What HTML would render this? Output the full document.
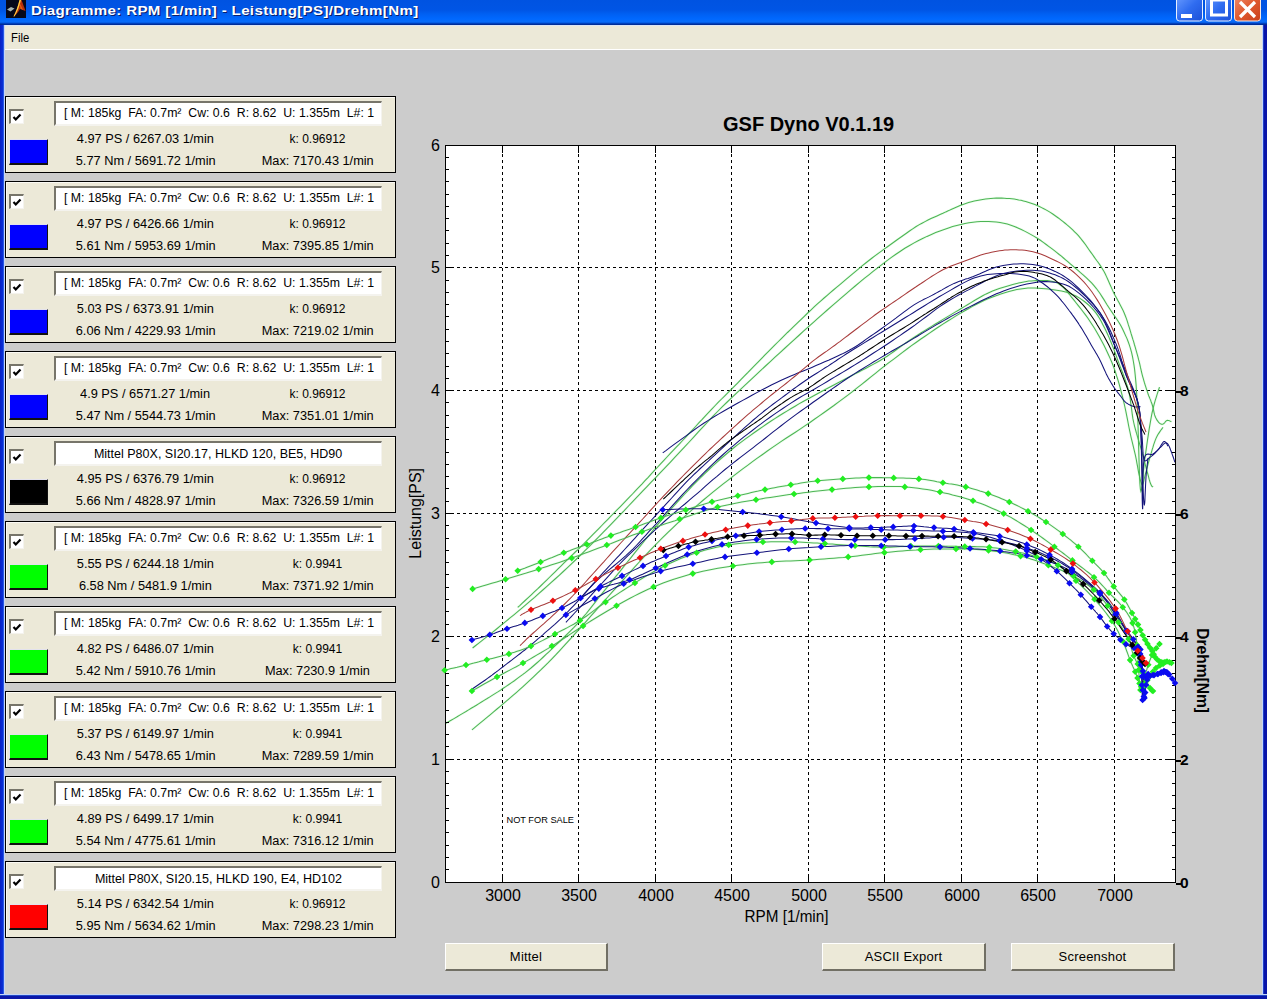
<!DOCTYPE html><html><head><meta charset="utf-8"><title>GSF Dyno</title><style>

*{margin:0;padding:0;box-sizing:border-box}
html,body{width:1267px;height:999px;overflow:hidden;background:#CCCCCC;font-family:"Liberation Sans",sans-serif;}
.a{position:absolute}
#tb{left:0;top:0;width:1267px;height:25px;background:linear-gradient(#0053E1 0px,#0055E5 10px,#0060F2 14px,#0068FF 19px,#0A6CF6 22px,#0050D8 23px,#00309E 24px,#002a90 25px)}
#tt{left:31px;top:2px;color:#fff;font-weight:bold;font-size:13px;letter-spacing:0.3px;transform:scaleX(1.16);transform-origin:0 50%;line-height:18px;white-space:nowrap;text-shadow:1px 1px 0 #0A1E6E}
#mb{left:4px;top:25px;width:1258px;height:25px;background:#ECE9D8;border-top:1px solid #DCE6F6;border-bottom:1px solid #FFFFFF}
#mf{left:11px;top:31px;font-size:12px;line-height:14px;color:#000;transform:scaleX(0.94);transform-origin:0 50%}
#bl{left:0;top:25px;width:5px;height:974px;background:linear-gradient(90deg,#0820C4 0,#0830D8 3px,#2A58E4 3px,#2A58E4 4px,#C4D4F8 4px)}
#br{left:1262px;top:25px;width:5px;height:974px;background:linear-gradient(90deg,#C4D4F8 0,#C4D4F8 1px,#2040C8 1px,#2040C8 2px,#0814A8 2px)}
#bb{left:0;top:994px;width:1267px;height:5px;background:linear-gradient(#C4D4F8 0,#C4D4F8 1px,#2048C8 1px,#2048C8 2px,#0A16A8 2px)}
.pn{left:5px;width:391px;height:77px;background:#ECE9D8;border:1px solid #000}
.pn .in{position:absolute;left:0;top:0;right:0;bottom:0;border-left:1px solid #FAF9F4;border-top:1px solid #FAF9F4}
.cb{position:absolute;left:3px;top:12px;width:15px;height:15px;background:#fff;border-top:2px solid #77756A;border-left:2px solid #77756A;border-right:1px solid #F4F3EE;border-bottom:1px solid #F4F3EE}
.sw{position:absolute;left:3px;top:42px;width:39px;height:26px;border-top:1px solid #E3E2EE;border-left:1px solid #E3E2EE;border-right:1px solid #111;border-bottom:2px solid #111}
.fd{position:absolute;left:48px;top:4px;width:328px;height:25px;background:#fff;border-top:2px solid #77756A;border-left:2px solid #77756A;border-right:1px solid #F4F3EE;border-bottom:2px solid #F4F3EE;overflow:hidden;white-space:nowrap;font-size:12px;line-height:14px;color:#000}
.fd span{position:absolute;top:4px}
.t{position:absolute;font-size:12px;line-height:14px;white-space:nowrap;color:#000}
.btn{letter-spacing:0.2px;background:#ECE9D8;border-top:1px solid #FFFFFF;border-left:1px solid #FFFFFF;border-right:2px solid #716F64;border-bottom:2px solid #716F64;font-size:13px;line-height:14px;text-align:center;color:#000}

</style></head><body>
<div id="tb" class="a"></div>
<svg class="a" style="left:6px;top:0px" width="20" height="18" viewBox="0 0 20 18"><rect x="0" y="0" width="20" height="18" fill="#06081a"/><path d="M1 9.5 L5 7 L8.5 8.5 L4.5 11.5 Z" fill="#a8b4b0"/><path d="M7.5 16.5 C10 12 12 6 13.5 0 L15.5 0 C17 4 18.5 8 19.5 11 L14 9 C12 12.5 10 15 7.5 16.5 Z" fill="#b8300c"/><path d="M7.5 16.5 C10 12 12 6 13.5 0 L15 0 C13.5 6 11.5 12 8.5 16.5 Z" fill="#ffd040"/><path d="M13.5 3 C15 5 16 8 17 10 L14.5 8.5 Z" fill="#e86010"/></svg>
<div id="tt" class="a">Diagramme: RPM [1/min] - Leistung[PS]/Drehm[Nm]</div>
<svg class="a" style="left:1176px;top:0" width="86" height="23" viewBox="0 0 86 23">
<defs><linearGradient id="gb" x1="0" y1="0" x2="1" y2="1"><stop offset="0" stop-color="#6A9CFF"/><stop offset="0.5" stop-color="#2F6CF0"/><stop offset="1" stop-color="#1C50D8"/></linearGradient>
<linearGradient id="gr" x1="0" y1="0" x2="1" y2="1"><stop offset="0" stop-color="#F08A6A"/><stop offset="0.5" stop-color="#E05A30"/><stop offset="1" stop-color="#C8401C"/></linearGradient></defs>
<rect x="0.5" y="-4" width="26" height="25" rx="3" fill="url(#gb)" stroke="#E8F0FF"/>
<rect x="5" y="14" width="11" height="4" fill="#fff"/>
<rect x="29.5" y="-4" width="26" height="25" rx="3" fill="url(#gb)" stroke="#E8F0FF"/>
<rect x="35.5" y="0" width="15" height="15" fill="none" stroke="#fff" stroke-width="3"/>
<rect x="58.5" y="-4" width="26" height="25" rx="3" fill="url(#gr)" stroke="#F8E8E0"/>
<path d="M64 2 L79 17 M79 2 L64 17" stroke="#fff" stroke-width="3.2"/>
</svg>
<div id="mb" class="a"></div>
<div id="mf" class="a">File</div>
<div id="bl" class="a"></div><div id="br" class="a"></div><div id="bb" class="a"></div>
<div class="a pn" style="top:96px"><div class="in"></div><div class="cb"><svg width="13" height="13" style="position:absolute;left:0;top:0"><path d="M2.5 6 L4.8 8.5 L9.5 3.5" fill="none" stroke="#000" stroke-width="2.2"/></svg></div><div class="sw" style="background:#0000FF"></div><div class="fd"><span style="left:8px;top:3px;transform:scaleX(1.024);transform-origin:0 50%">[ M: 185kg&nbsp; FA: 0.7m²&nbsp; Cw: 0.6&nbsp; R: 8.62&nbsp; U: 1.355m&nbsp; L#: 1</span></div><div class="t" style="left:-10.5px;width:300px;top:35px;text-align:center"><span style="display:inline-block;transform:scaleX(1.065);transform-origin:50% 50%">4.97 PS / 6267.03 1/min</span></div><div class="t" style="left:161.5px;width:300px;top:35px;text-align:center"><span style="display:inline-block;transform:scaleX(1.0);transform-origin:50% 50%">k: 0.96912</span></div><div class="t" style="left:-10.5px;width:300px;top:57px;text-align:center"><span style="display:inline-block;transform:scaleX(1.065);transform-origin:50% 50%">5.77 Nm / 5691.72 1/min</span></div><div class="t" style="left:161.5px;width:300px;top:57px;text-align:center"><span style="display:inline-block;transform:scaleX(1.063);transform-origin:50% 50%">Max: 7170.43 1/min</span></div></div>
<div class="a pn" style="top:181px"><div class="in"></div><div class="cb"><svg width="13" height="13" style="position:absolute;left:0;top:0"><path d="M2.5 6 L4.8 8.5 L9.5 3.5" fill="none" stroke="#000" stroke-width="2.2"/></svg></div><div class="sw" style="background:#0000FF"></div><div class="fd"><span style="left:8px;top:3px;transform:scaleX(1.024);transform-origin:0 50%">[ M: 185kg&nbsp; FA: 0.7m²&nbsp; Cw: 0.6&nbsp; R: 8.62&nbsp; U: 1.355m&nbsp; L#: 1</span></div><div class="t" style="left:-10.5px;width:300px;top:35px;text-align:center"><span style="display:inline-block;transform:scaleX(1.065);transform-origin:50% 50%">4.97 PS / 6426.66 1/min</span></div><div class="t" style="left:161.5px;width:300px;top:35px;text-align:center"><span style="display:inline-block;transform:scaleX(1.0);transform-origin:50% 50%">k: 0.96912</span></div><div class="t" style="left:-10.5px;width:300px;top:57px;text-align:center"><span style="display:inline-block;transform:scaleX(1.065);transform-origin:50% 50%">5.61 Nm / 5953.69 1/min</span></div><div class="t" style="left:161.5px;width:300px;top:57px;text-align:center"><span style="display:inline-block;transform:scaleX(1.063);transform-origin:50% 50%">Max: 7395.85 1/min</span></div></div>
<div class="a pn" style="top:266px"><div class="in"></div><div class="cb"><svg width="13" height="13" style="position:absolute;left:0;top:0"><path d="M2.5 6 L4.8 8.5 L9.5 3.5" fill="none" stroke="#000" stroke-width="2.2"/></svg></div><div class="sw" style="background:#0000FF"></div><div class="fd"><span style="left:8px;top:3px;transform:scaleX(1.024);transform-origin:0 50%">[ M: 185kg&nbsp; FA: 0.7m²&nbsp; Cw: 0.6&nbsp; R: 8.62&nbsp; U: 1.355m&nbsp; L#: 1</span></div><div class="t" style="left:-10.5px;width:300px;top:35px;text-align:center"><span style="display:inline-block;transform:scaleX(1.065);transform-origin:50% 50%">5.03 PS / 6373.91 1/min</span></div><div class="t" style="left:161.5px;width:300px;top:35px;text-align:center"><span style="display:inline-block;transform:scaleX(1.0);transform-origin:50% 50%">k: 0.96912</span></div><div class="t" style="left:-10.5px;width:300px;top:57px;text-align:center"><span style="display:inline-block;transform:scaleX(1.065);transform-origin:50% 50%">6.06 Nm / 4229.93 1/min</span></div><div class="t" style="left:161.5px;width:300px;top:57px;text-align:center"><span style="display:inline-block;transform:scaleX(1.063);transform-origin:50% 50%">Max: 7219.02 1/min</span></div></div>
<div class="a pn" style="top:351px"><div class="in"></div><div class="cb"><svg width="13" height="13" style="position:absolute;left:0;top:0"><path d="M2.5 6 L4.8 8.5 L9.5 3.5" fill="none" stroke="#000" stroke-width="2.2"/></svg></div><div class="sw" style="background:#0000FF"></div><div class="fd"><span style="left:8px;top:3px;transform:scaleX(1.024);transform-origin:0 50%">[ M: 185kg&nbsp; FA: 0.7m²&nbsp; Cw: 0.6&nbsp; R: 8.62&nbsp; U: 1.355m&nbsp; L#: 1</span></div><div class="t" style="left:-10.5px;width:300px;top:35px;text-align:center"><span style="display:inline-block;transform:scaleX(1.065);transform-origin:50% 50%">4.9 PS / 6571.27 1/min</span></div><div class="t" style="left:161.5px;width:300px;top:35px;text-align:center"><span style="display:inline-block;transform:scaleX(1.0);transform-origin:50% 50%">k: 0.96912</span></div><div class="t" style="left:-10.5px;width:300px;top:57px;text-align:center"><span style="display:inline-block;transform:scaleX(1.065);transform-origin:50% 50%">5.47 Nm / 5544.73 1/min</span></div><div class="t" style="left:161.5px;width:300px;top:57px;text-align:center"><span style="display:inline-block;transform:scaleX(1.063);transform-origin:50% 50%">Max: 7351.01 1/min</span></div></div>
<div class="a pn" style="top:436px"><div class="in"></div><div class="cb"><svg width="13" height="13" style="position:absolute;left:0;top:0"><path d="M2.5 6 L4.8 8.5 L9.5 3.5" fill="none" stroke="#000" stroke-width="2.2"/></svg></div><div class="sw" style="background:#000000"></div><div class="fd"><div style="position:absolute;left:0;top:4px;width:324px;text-align:center"><span style="position:static;display:inline-block;transform:scaleX(1.043)">Mittel P80X, SI20.17, HLKD 120, BE5, HD90</span></div></div><div class="t" style="left:-10.5px;width:300px;top:35px;text-align:center"><span style="display:inline-block;transform:scaleX(1.065);transform-origin:50% 50%">4.95 PS / 6376.79 1/min</span></div><div class="t" style="left:161.5px;width:300px;top:35px;text-align:center"><span style="display:inline-block;transform:scaleX(1.0);transform-origin:50% 50%">k: 0.96912</span></div><div class="t" style="left:-10.5px;width:300px;top:57px;text-align:center"><span style="display:inline-block;transform:scaleX(1.065);transform-origin:50% 50%">5.66 Nm / 4828.97 1/min</span></div><div class="t" style="left:161.5px;width:300px;top:57px;text-align:center"><span style="display:inline-block;transform:scaleX(1.063);transform-origin:50% 50%">Max: 7326.59 1/min</span></div></div>
<div class="a pn" style="top:521px"><div class="in"></div><div class="cb"><svg width="13" height="13" style="position:absolute;left:0;top:0"><path d="M2.5 6 L4.8 8.5 L9.5 3.5" fill="none" stroke="#000" stroke-width="2.2"/></svg></div><div class="sw" style="background:#00FF00"></div><div class="fd"><span style="left:8px;top:3px;transform:scaleX(1.024);transform-origin:0 50%">[ M: 185kg&nbsp; FA: 0.7m²&nbsp; Cw: 0.6&nbsp; R: 8.62&nbsp; U: 1.355m&nbsp; L#: 1</span></div><div class="t" style="left:-10.5px;width:300px;top:35px;text-align:center"><span style="display:inline-block;transform:scaleX(1.065);transform-origin:50% 50%">5.55 PS / 6244.18 1/min</span></div><div class="t" style="left:161.5px;width:300px;top:35px;text-align:center"><span style="display:inline-block;transform:scaleX(1.0);transform-origin:50% 50%">k: 0.9941</span></div><div class="t" style="left:-10.5px;width:300px;top:57px;text-align:center"><span style="display:inline-block;transform:scaleX(1.065);transform-origin:50% 50%">6.58 Nm / 5481.9 1/min</span></div><div class="t" style="left:161.5px;width:300px;top:57px;text-align:center"><span style="display:inline-block;transform:scaleX(1.063);transform-origin:50% 50%">Max: 7371.92 1/min</span></div></div>
<div class="a pn" style="top:606px"><div class="in"></div><div class="cb"><svg width="13" height="13" style="position:absolute;left:0;top:0"><path d="M2.5 6 L4.8 8.5 L9.5 3.5" fill="none" stroke="#000" stroke-width="2.2"/></svg></div><div class="sw" style="background:#00FF00"></div><div class="fd"><span style="left:8px;top:3px;transform:scaleX(1.024);transform-origin:0 50%">[ M: 185kg&nbsp; FA: 0.7m²&nbsp; Cw: 0.6&nbsp; R: 8.62&nbsp; U: 1.355m&nbsp; L#: 1</span></div><div class="t" style="left:-10.5px;width:300px;top:35px;text-align:center"><span style="display:inline-block;transform:scaleX(1.065);transform-origin:50% 50%">4.82 PS / 6486.07 1/min</span></div><div class="t" style="left:161.5px;width:300px;top:35px;text-align:center"><span style="display:inline-block;transform:scaleX(1.0);transform-origin:50% 50%">k: 0.9941</span></div><div class="t" style="left:-10.5px;width:300px;top:57px;text-align:center"><span style="display:inline-block;transform:scaleX(1.065);transform-origin:50% 50%">5.42 Nm / 5910.76 1/min</span></div><div class="t" style="left:161.5px;width:300px;top:57px;text-align:center"><span style="display:inline-block;transform:scaleX(1.063);transform-origin:50% 50%">Max: 7230.9 1/min</span></div></div>
<div class="a pn" style="top:691px"><div class="in"></div><div class="cb"><svg width="13" height="13" style="position:absolute;left:0;top:0"><path d="M2.5 6 L4.8 8.5 L9.5 3.5" fill="none" stroke="#000" stroke-width="2.2"/></svg></div><div class="sw" style="background:#00FF00"></div><div class="fd"><span style="left:8px;top:3px;transform:scaleX(1.024);transform-origin:0 50%">[ M: 185kg&nbsp; FA: 0.7m²&nbsp; Cw: 0.6&nbsp; R: 8.62&nbsp; U: 1.355m&nbsp; L#: 1</span></div><div class="t" style="left:-10.5px;width:300px;top:35px;text-align:center"><span style="display:inline-block;transform:scaleX(1.065);transform-origin:50% 50%">5.37 PS / 6149.97 1/min</span></div><div class="t" style="left:161.5px;width:300px;top:35px;text-align:center"><span style="display:inline-block;transform:scaleX(1.0);transform-origin:50% 50%">k: 0.9941</span></div><div class="t" style="left:-10.5px;width:300px;top:57px;text-align:center"><span style="display:inline-block;transform:scaleX(1.065);transform-origin:50% 50%">6.43 Nm / 5478.65 1/min</span></div><div class="t" style="left:161.5px;width:300px;top:57px;text-align:center"><span style="display:inline-block;transform:scaleX(1.063);transform-origin:50% 50%">Max: 7289.59 1/min</span></div></div>
<div class="a pn" style="top:776px"><div class="in"></div><div class="cb"><svg width="13" height="13" style="position:absolute;left:0;top:0"><path d="M2.5 6 L4.8 8.5 L9.5 3.5" fill="none" stroke="#000" stroke-width="2.2"/></svg></div><div class="sw" style="background:#00FF00"></div><div class="fd"><span style="left:8px;top:3px;transform:scaleX(1.024);transform-origin:0 50%">[ M: 185kg&nbsp; FA: 0.7m²&nbsp; Cw: 0.6&nbsp; R: 8.62&nbsp; U: 1.355m&nbsp; L#: 1</span></div><div class="t" style="left:-10.5px;width:300px;top:35px;text-align:center"><span style="display:inline-block;transform:scaleX(1.065);transform-origin:50% 50%">4.89 PS / 6499.17 1/min</span></div><div class="t" style="left:161.5px;width:300px;top:35px;text-align:center"><span style="display:inline-block;transform:scaleX(1.0);transform-origin:50% 50%">k: 0.9941</span></div><div class="t" style="left:-10.5px;width:300px;top:57px;text-align:center"><span style="display:inline-block;transform:scaleX(1.065);transform-origin:50% 50%">5.54 Nm / 4775.61 1/min</span></div><div class="t" style="left:161.5px;width:300px;top:57px;text-align:center"><span style="display:inline-block;transform:scaleX(1.063);transform-origin:50% 50%">Max: 7316.12 1/min</span></div></div>
<div class="a pn" style="top:861px"><div class="in"></div><div class="cb"><svg width="13" height="13" style="position:absolute;left:0;top:0"><path d="M2.5 6 L4.8 8.5 L9.5 3.5" fill="none" stroke="#000" stroke-width="2.2"/></svg></div><div class="sw" style="background:#FF0000"></div><div class="fd"><div style="position:absolute;left:0;top:4px;width:324px;text-align:center"><span style="position:static;display:inline-block;transform:scaleX(1.043)">Mittel P80X, SI20.15, HLKD 190, E4, HD102</span></div></div><div class="t" style="left:-10.5px;width:300px;top:35px;text-align:center"><span style="display:inline-block;transform:scaleX(1.065);transform-origin:50% 50%">5.14 PS / 6342.54 1/min</span></div><div class="t" style="left:161.5px;width:300px;top:35px;text-align:center"><span style="display:inline-block;transform:scaleX(1.0);transform-origin:50% 50%">k: 0.96912</span></div><div class="t" style="left:-10.5px;width:300px;top:57px;text-align:center"><span style="display:inline-block;transform:scaleX(1.065);transform-origin:50% 50%">5.95 Nm / 5634.62 1/min</span></div><div class="t" style="left:161.5px;width:300px;top:57px;text-align:center"><span style="display:inline-block;transform:scaleX(1.063);transform-origin:50% 50%">Max: 7298.23 1/min</span></div></div>
<div class="a btn" style="left:445px;top:943px;width:163px;height:28px;padding-top:6px">Mittel</div>
<div class="a btn" style="left:822px;top:943px;width:164px;height:28px;padding-top:6px">ASCII Export</div>
<div class="a btn" style="left:1011px;top:943px;width:164px;height:28px;padding-top:6px">Screenshot</div>
<svg class="a" style="left:0;top:0" width="1267" height="999" viewBox="0 0 1267 999"><rect x="445" y="145" width="731" height="738" fill="#fff"/><path d="M502.5 145 V883 M578.5 145 V883 M655.5 145 V883 M731.5 145 V883 M808.5 145 V883 M884.5 145 V883 M961.5 145 V883 M1037.5 145 V883 M1114.5 145 V883" stroke="#000" stroke-width="1" stroke-dasharray="3 3" stroke-dashoffset="3" fill="none" shape-rendering="crispEdges"/><path d="M445 267.5 H1176 M445 390.5 H1176 M445 513.5 H1176 M445 636.5 H1176 M445 759.5 H1176" stroke="#000" stroke-width="1" stroke-dasharray="3 3" fill="none" shape-rendering="crispEdges"/><svg x="445" y="145" width="731" height="738" viewBox="445 145 731 738" overflow="hidden"><g fill="none" stroke-width="2.6" stroke-opacity="0.08"><polyline points="517.7,607.4 519.5,605.8 521.8,603.6 524.6,601.0 527.7,598.2 531.0,595.1 534.3,591.9 537.6,588.9 540.6,586.0 543.5,583.2 546.4,580.4 549.3,577.5 552.2,574.7 555.1,571.8 558.0,568.9 560.9,566.1 563.8,563.2 566.7,560.4 569.6,557.6 572.4,554.8 575.3,552.0 578.2,549.3 581.1,546.4 584.0,543.6 586.9,540.7 589.9,537.7 592.8,534.7 595.8,531.7 598.8,528.6 601.8,525.5 604.8,522.4 607.9,519.3 610.9,516.2 614.0,513.0 617.0,509.9 620.1,506.8 623.2,503.6 626.3,500.4 629.4,497.2 632.5,494.0 635.6,490.7 638.7,487.4 641.9,484.1 645.0,480.7 648.2,477.3 651.3,473.8 654.5,470.4 657.7,467.0 660.8,463.6 663.9,460.3 667.0,457.0 670.1,453.7 673.2,450.4 676.3,447.1 679.5,443.8 682.6,440.5 685.8,437.1 689.0,433.6 692.3,430.1 695.6,426.5 698.8,422.9 702.2,419.4 705.4,415.8 708.7,412.3 712.0,408.8 715.2,405.5 718.4,402.2 721.6,399.0 724.8,395.8 728.0,392.6 731.3,389.4 734.5,386.1 737.8,382.8 741.1,379.4 744.5,375.9 748.0,372.4 751.4,368.8 754.8,365.3 758.3,361.8 761.7,358.3 765.0,354.9 768.3,351.6 771.5,348.3 774.7,345.2 777.9,342.0 781.1,338.8 784.3,335.7 787.5,332.5 790.8,329.4 794.1,326.1 797.5,322.9 800.9,319.6 804.3,316.3 807.7,313.0 811.1,309.8 814.4,306.7 817.7,303.7 820.9,300.8 824.1,298.0 827.2,295.3 830.3,292.6 833.4,290.0 836.5,287.4 839.6,284.8 842.8,282.1 846.0,279.4 849.3,276.6 852.6,273.8 855.9,271.1 859.2,268.3 862.4,265.7 865.7,263.0 868.9,260.5 872.1,258.0 875.2,255.7 878.3,253.4 881.4,251.1 884.4,248.9 887.5,246.7 890.6,244.5 893.7,242.3 896.8,240.0 900.0,237.7 903.2,235.5 906.4,233.2 909.5,231.0 912.7,228.9 915.8,226.8 918.9,224.9 922.0,223.2 925.0,221.6 928.0,220.0 931.0,218.6 934.0,217.2 937.0,215.9 940.0,214.6 942.9,213.3 945.8,211.9 948.7,210.6 951.6,209.2 954.5,207.9 957.3,206.7 960.1,205.5 963.0,204.4 965.8,203.4 968.6,202.6 971.5,201.8 974.3,201.1 977.1,200.5 979.9,199.9 982.7,199.5 985.5,199.1 988.2,198.7 990.9,198.5 993.6,198.3 996.3,198.1 999.0,198.1 1001.6,198.1 1004.2,198.2 1006.8,198.4 1009.3,198.5 1011.8,198.8 1014.2,199.1 1016.5,199.4 1018.8,199.9 1021.1,200.3 1023.4,200.9 1025.7,201.5 1028.0,202.2 1030.3,202.9 1032.6,203.7 1034.9,204.6 1037.1,205.5 1039.4,206.5 1041.6,207.6 1043.8,208.7 1046.0,209.9 1048.2,211.1 1050.3,212.4 1052.4,213.8 1054.5,215.2 1056.6,216.7 1058.7,218.2 1060.8,219.8 1062.8,221.4 1064.8,223.0 1066.8,224.7 1068.8,226.3 1070.8,228.1 1072.7,229.9 1074.6,231.8 1076.5,233.7 1078.4,235.7 1080.2,237.8 1082.0,240.1 1083.8,242.4 1085.6,244.8 1087.3,247.3 1089.0,249.7 1090.7,252.1 1092.3,254.3 1093.9,256.6 1095.4,258.7 1096.9,260.8 1098.4,262.8 1099.9,264.9 1101.3,267.1 1102.6,269.3 1104.0,271.6 1105.3,274.1 1106.5,276.6 1107.7,279.3 1108.9,282.0 1110.1,284.7 1111.3,287.4 1112.5,290.1 1113.7,292.7 1115.0,295.3 1116.4,297.8 1117.7,300.3 1119.1,302.8 1120.5,305.4 1121.8,307.9 1123.1,310.5 1124.3,313.2 1125.4,316.0 1126.5,318.9 1127.5,321.9 1128.4,324.9 1129.4,327.9 1130.3,330.8 1131.1,333.7 1132.0,336.5 1132.8,339.2 1133.7,341.9 1134.4,344.5 1135.2,347.1 1135.9,349.6 1136.6,352.1 1137.3,354.6 1138.0,357.1 1138.6,359.7 1139.3,362.2 1139.9,364.7 1140.4,367.2 1141.0,369.6 1141.5,372.0 1142.1,374.3 1142.7,376.6 1143.3,378.7 1143.9,380.8 1144.5,382.9 1145.1,384.8 1145.7,386.7 1146.3,388.6 1146.9,390.4 1147.5,392.2 1148.1,394.0 1148.7,395.7 1149.4,397.3 1150.0,398.9 1150.7,400.4 1151.2,402.0 1151.8,403.5 1152.3,405.0 1152.7,406.5 1153.1,408.0 1153.4,409.4 1153.7,410.9 1154.0,412.3 1154.3,413.6 1154.6,414.9 1155.0,416.0 1155.4,417.1 1155.9,418.1 1156.4,419.0 1156.9,419.9 1157.4,420.7 1158.0,421.4 1158.5,422.1 1159.0,422.6 1159.5,423.1 1160.0,423.5 1160.5,423.8 1161.0,424.0 1161.5,424.2 1162.0,424.2 1162.5,424.2 1163.0,424.1 1163.5,423.9 1164.0,423.4 1164.5,422.9 1165.0,422.3 1165.5,421.6 1166.0,421.1 1166.5,420.6 1167.0,420.4 1167.6,420.3 1168.2,420.4 1168.8,420.6 1169.5,420.8 1170.1,421.1 1170.6,421.4 1171.1,421.6 1171.4,421.7" stroke="#20F020"/><polyline points="517.7,570.8 519.5,570.1 521.8,569.2 524.6,568.2 527.7,567.0 531.0,565.7 534.3,564.4 537.6,563.2 540.6,562.0 543.5,560.9 546.4,559.7 549.3,558.5 552.2,557.4 555.1,556.2 558.0,555.0 560.9,553.9 563.8,552.8 566.7,551.7 569.6,550.7 572.4,549.6 575.3,548.6 578.2,547.6 581.1,546.6 584.0,545.6 586.9,544.5 589.9,543.4 592.8,542.3 595.8,541.2 598.8,540.1 601.8,538.9 604.8,537.8 607.9,536.7 610.9,535.6 614.0,534.5 617.0,533.4 620.1,532.4 623.2,531.3 626.3,530.2 629.4,529.2 632.5,528.1 635.6,527.0 638.7,525.9 641.9,524.7 645.0,523.6 648.2,522.4 651.3,521.3 654.5,520.1 657.7,519.0 660.8,517.9 663.9,516.8 667.0,515.8 670.1,514.8 673.2,513.8 676.3,512.9 679.5,511.9 682.6,510.9 685.8,509.9 689.0,508.9 692.3,507.8 695.6,506.8 698.8,505.7 702.2,504.7 705.4,503.7 708.7,502.7 712.0,501.8 715.2,501.0 718.4,500.2 721.6,499.4 724.8,498.7 728.0,498.0 731.3,497.3 734.5,496.5 737.8,495.8 741.1,495.0 744.5,494.2 748.0,493.4 751.4,492.6 754.8,491.8 758.3,491.1 761.7,490.3 765.0,489.6 768.3,488.9 771.5,488.3 774.7,487.7 777.9,487.1 781.1,486.5 784.3,485.9 787.5,485.4 790.8,484.8 794.1,484.2 797.5,483.7 800.9,483.1 804.3,482.6 807.7,482.1 811.1,481.6 814.4,481.2 817.7,480.8 820.9,480.5 824.1,480.2 827.2,479.9 830.3,479.7 833.4,479.5 836.5,479.3 839.6,479.1 842.8,478.9 846.0,478.7 849.3,478.5 852.6,478.3 855.9,478.1 859.2,477.9 862.4,477.8 865.7,477.7 868.9,477.6 872.1,477.6 875.2,477.5 878.3,477.6 881.4,477.6 884.4,477.7 887.5,477.7 890.6,477.8 893.7,477.9 896.8,478.0 900.0,478.0 903.2,478.1 906.4,478.2 909.5,478.3 912.7,478.4 915.8,478.6 918.9,478.9 922.0,479.2 925.0,479.6 928.0,480.1 931.0,480.6 934.0,481.1 937.0,481.7 940.0,482.2 942.9,482.7 945.8,483.2 948.7,483.7 951.6,484.1 954.5,484.6 957.3,485.1 960.1,485.7 963.0,486.3 965.8,486.9 968.6,487.6 971.5,488.4 974.3,489.2 977.1,490.0 979.9,490.9 982.7,491.7 985.5,492.7 988.2,493.6 990.9,494.6 993.6,495.6 996.3,496.6 999.0,497.6 1001.6,498.7 1004.2,499.8 1006.8,500.9 1009.3,502.0 1011.8,503.1 1014.2,504.2 1016.5,505.3 1018.8,506.4 1021.1,507.6 1023.4,508.8 1025.7,510.0 1028.0,511.2 1030.3,512.5 1032.6,513.8 1034.9,515.1 1037.1,516.4 1039.4,517.8 1041.6,519.2 1043.8,520.6 1046.0,522.0 1048.2,523.4 1050.3,524.9 1052.4,526.4 1054.5,527.9 1056.6,529.4 1058.7,530.9 1060.8,532.5 1062.8,534.0 1064.8,535.5 1066.8,537.1 1068.8,538.7 1070.8,540.2 1072.7,541.8 1074.6,543.4 1076.5,545.0 1078.4,546.7 1080.2,548.4 1082.0,550.1 1083.8,551.9 1085.6,553.7 1087.3,555.5 1089.0,557.3 1090.7,559.0 1092.3,560.7 1093.9,562.3 1095.4,563.9 1096.9,565.4 1098.4,566.9 1099.9,568.4 1101.3,569.9 1102.6,571.4 1104.0,573.0 1105.3,574.6 1106.5,576.3 1107.7,578.0 1108.9,579.6 1110.1,581.3 1111.3,583.0 1112.5,584.7 1113.7,586.4 1115.0,588.0 1116.4,589.7 1117.7,591.3 1119.1,592.9 1120.5,594.6 1121.8,596.2 1123.1,597.8 1124.3,599.5 1125.4,601.2 1126.5,602.9 1127.5,604.6 1128.4,606.3 1129.4,608.1 1130.3,609.7 1131.1,611.4 1132.0,613.0 1132.8,614.5 1133.7,616.1 1134.4,617.5 1135.2,619.0 1135.9,620.4 1136.6,621.8 1137.3,623.2 1138.0,624.6 1138.6,626.0 1139.3,627.4 1139.9,628.7 1140.4,630.1 1141.0,631.4 1141.5,632.7 1142.1,634.0 1142.7,635.2 1143.3,636.4 1143.9,637.5 1144.5,638.7 1145.1,639.8 1145.7,640.8 1146.3,641.9 1146.9,642.9 1147.5,643.9 1148.1,644.9 1148.7,645.8 1149.4,646.8 1150.0,647.7 1150.7,648.6 1151.2,649.4 1151.8,650.3 1152.3,651.1 1152.7,651.9 1153.1,652.7 1153.4,653.5 1153.7,654.2 1154.0,655.0 1154.3,655.7 1154.6,656.4 1155.0,657.0 1155.4,657.6 1155.9,658.2 1156.4,658.7 1156.9,659.3 1157.4,659.8 1158.0,660.2 1158.5,660.6 1159.0,661.0 1159.5,661.3 1160.0,661.6 1160.5,661.9 1161.0,662.1 1161.5,662.2 1162.0,662.4 1162.5,662.4 1163.0,662.5 1163.5,662.5 1164.0,662.4 1164.5,662.2 1165.0,662.0 1165.5,661.8 1166.0,661.6 1166.5,661.5 1167.0,661.5 1167.6,661.6 1168.2,661.7 1168.8,661.9 1169.5,662.2 1170.1,662.4 1170.6,662.7 1171.1,662.9 1171.4,663.0" stroke="#20F020"/><polyline points="472.6,648.0 475.1,646.0 478.5,643.4 482.6,640.2 487.0,636.7 491.8,632.9 496.6,629.0 501.2,625.2 505.6,621.6 509.7,618.2 513.9,614.8 518.0,611.4 522.2,607.9 526.3,604.4 530.4,600.8 534.6,597.3 538.7,593.7 542.8,590.0 546.9,586.4 551.0,582.7 555.1,579.0 559.2,575.3 563.3,571.5 567.5,567.6 571.7,563.6 576.0,559.5 580.3,555.3 584.7,550.9 589.1,546.6 593.5,542.1 598.0,537.6 602.4,533.2 606.8,528.7 611.2,524.2 615.5,519.7 619.8,515.1 624.2,510.6 628.5,506.0 632.9,501.4 637.4,496.7 641.9,491.9 646.5,487.1 651.2,482.2 655.9,477.3 660.6,472.3 665.4,467.3 670.2,462.3 675.0,457.2 679.7,452.2 684.4,447.1 689.2,442.0 693.9,436.9 698.6,431.7 703.3,426.6 708.1,421.5 712.8,416.4 717.6,411.5 722.4,406.7 727.2,402.0 732.0,397.4 736.8,392.8 741.6,388.3 746.4,383.8 751.2,379.4 756.0,374.9 760.8,370.4 765.5,366.0 770.3,361.6 775.0,357.2 779.8,352.8 784.5,348.5 789.3,344.2 794.0,339.8 798.8,335.5 803.5,331.2 808.3,326.9 813.1,322.6 817.8,318.4 822.6,314.2 827.3,310.0 832.0,305.9 836.7,301.8 841.3,297.8 846.0,293.8 850.6,289.9 855.2,286.0 859.8,282.2 864.3,278.4 868.9,274.8 873.4,271.2 878.0,267.6 882.5,264.1 887.0,260.7 891.4,257.4 895.9,254.2 900.4,251.2 904.8,248.3 909.2,245.7 913.7,243.1 918.1,240.8 922.6,238.5 927.0,236.4 931.4,234.5 935.7,232.6 940.0,230.9 944.2,229.4 948.5,227.9 952.6,226.6 956.8,225.4 960.9,224.4 965.0,223.5 969.0,222.8 973.0,222.2 977.0,221.8 980.9,221.5 984.8,221.4 988.7,221.4 992.5,221.7 996.3,222.0 1000.0,222.6 1003.7,223.2 1007.3,224.1 1010.9,225.2 1014.4,226.5 1017.9,227.9 1021.3,229.5 1024.6,231.1 1027.9,232.9 1031.1,234.6 1034.2,236.4 1037.3,238.3 1040.4,240.3 1043.3,242.4 1046.2,244.5 1049.0,246.6 1051.8,248.7 1054.4,250.7 1056.9,252.6 1059.2,254.5 1061.4,256.2 1063.5,258.0 1065.6,259.8 1067.8,261.7 1070.0,263.6 1072.4,265.7 1075.0,267.9 1077.7,270.2 1080.5,272.7 1083.4,275.1 1086.2,277.7 1089.0,280.3 1091.6,282.9 1094.0,285.6 1096.2,288.3 1098.2,291.0 1100.2,293.8 1102.0,296.6 1103.8,299.4 1105.5,302.2 1107.2,305.0 1109.0,307.8 1110.8,310.5 1112.6,313.1 1114.4,315.7 1116.2,318.3 1118.0,321.0 1119.7,323.7 1121.3,326.5 1122.8,329.5 1124.2,332.5 1125.6,335.6 1127.0,338.6 1128.2,341.8 1129.4,345.2 1130.5,348.7 1131.6,352.6 1132.5,356.7 1133.3,361.0 1134.0,365.2 1134.6,369.4 1135.1,374.0 1135.6,379.1 1136.1,384.8 1136.5,391.5 1137.0,399.1 1137.5,409.0 1137.9,421.2 1138.3,434.9 1138.7,449.0 1139.1,462.5 1139.5,474.4 1139.9,483.7 1140.4,489.5 1140.9,491.4 1141.4,490.3 1141.9,486.9 1142.5,481.7 1143.0,475.5 1143.7,468.9 1144.3,462.6 1145.0,457.1 1145.8,452.1 1146.6,446.5 1147.4,440.7 1148.3,434.8 1149.2,428.8 1150.2,423.2 1151.1,417.9 1152.0,413.1 1153.0,408.9 1154.0,404.8 1155.1,400.9 1156.2,397.4 1157.2,394.2 1158.1,391.4 1158.9,389.0 1159.5,387.1" stroke="#20F020"/><polyline points="472.6,588.9 475.1,588.2 478.5,587.2 482.6,586.0 487.0,584.7 491.8,583.3 496.6,581.9 501.2,580.5 505.6,579.2 509.7,578.0 513.9,576.7 518.0,575.5 522.2,574.2 526.3,573.0 530.4,571.7 534.6,570.4 538.7,569.1 542.8,567.8 546.9,566.5 551.0,565.1 555.1,563.8 559.2,562.4 563.3,561.0 567.5,559.6 571.7,558.1 576.0,556.6 580.3,555.0 584.7,553.3 589.1,551.7 593.5,550.0 598.0,548.3 602.4,546.7 606.8,545.0 611.2,543.4 615.5,541.7 619.8,540.0 624.2,538.4 628.5,536.7 632.9,535.1 637.4,533.4 641.9,531.8 646.5,530.2 651.2,528.6 655.9,527.0 660.6,525.4 665.4,523.8 670.2,522.2 675.0,520.7 679.7,519.1 684.4,517.5 689.2,515.9 693.9,514.3 698.6,512.8 703.3,511.2 708.1,509.8 712.8,508.4 717.6,507.1 722.4,505.9 727.2,504.9 732.0,503.9 736.8,503.0 741.6,502.1 746.4,501.3 751.2,500.5 756.0,499.7 760.8,498.9 765.5,498.1 770.3,497.4 775.0,496.7 779.8,496.0 784.5,495.3 789.3,494.6 794.0,494.0 798.8,493.4 803.5,492.8 808.3,492.2 813.1,491.6 817.8,491.1 822.6,490.6 827.3,490.1 832.0,489.6 836.7,489.2 841.3,488.7 846.0,488.3 850.6,488.0 855.2,487.6 859.8,487.3 864.3,487.1 868.9,486.9 873.4,486.7 878.0,486.6 882.5,486.5 887.0,486.4 891.4,486.4 895.9,486.5 900.4,486.6 904.8,486.9 909.2,487.3 913.7,487.7 918.1,488.3 922.6,488.9 927.0,489.6 931.4,490.3 935.7,491.2 940.0,492.0 944.2,492.9 948.5,493.8 952.6,494.9 956.8,495.9 960.9,497.0 965.0,498.2 969.0,499.5 973.0,500.8 977.0,502.2 980.9,503.6 984.8,505.1 988.7,506.7 992.5,508.4 996.3,510.1 1000.0,511.8 1003.7,513.6 1007.3,515.5 1010.9,517.4 1014.4,519.5 1017.9,521.6 1021.3,523.7 1024.6,525.8 1027.9,527.9 1031.1,530.0 1034.2,532.1 1037.3,534.2 1040.4,536.4 1043.3,538.5 1046.2,540.6 1049.0,542.7 1051.8,544.8 1054.4,546.7 1056.9,548.5 1059.2,550.3 1061.4,551.9 1063.5,553.5 1065.6,555.2 1067.8,556.8 1070.0,558.6 1072.4,560.4 1075.0,562.4 1077.7,564.4 1080.5,566.5 1083.4,568.7 1086.2,570.9 1089.0,573.0 1091.6,575.1 1094.0,577.2 1096.2,579.2 1098.2,581.2 1100.2,583.2 1102.0,585.1 1103.8,587.0 1105.5,588.9 1107.2,590.8 1109.0,592.7 1110.8,594.6 1112.6,596.4 1114.4,598.1 1116.2,599.9 1118.0,601.7 1119.7,603.5 1121.3,605.3 1122.8,607.2 1124.2,609.1 1125.6,610.9 1127.0,612.8 1128.2,614.7 1129.4,616.6 1130.5,618.7 1131.6,620.8 1132.5,623.1 1133.3,625.4 1134.0,627.6 1134.6,629.9 1135.1,632.2 1135.6,634.8 1136.1,637.8 1136.5,641.1 1137.0,645.0 1137.5,649.9 1137.9,656.0 1138.3,662.8 1138.7,669.8 1139.1,676.5 1139.5,682.4 1139.9,687.1 1140.4,690.0 1140.9,691.0 1141.4,690.6 1141.9,689.0 1142.5,686.6 1143.0,683.6 1143.7,680.5 1144.3,677.5 1145.0,675.0 1145.8,672.7 1146.6,670.1 1147.4,667.5 1148.3,664.8 1149.2,662.1 1150.2,659.5 1151.1,657.1 1152.0,655.0 1153.0,653.1 1154.0,651.4 1155.1,649.7 1156.2,648.2 1157.2,646.9 1158.1,645.8 1158.9,644.8 1159.5,644.0" stroke="#20F020"/><polyline points="444.6,724.0 446.3,723.1 448.5,721.8 451.1,720.3 454.0,718.6 457.1,716.8 460.2,714.9 463.2,713.1 466.0,711.5 468.6,709.9 471.2,708.3 473.8,706.8 476.4,705.2 478.9,703.6 481.5,702.0 484.1,700.4 486.8,698.8 489.5,697.1 492.2,695.4 495.0,693.6 497.8,691.9 500.6,690.1 503.3,688.2 506.1,686.4 508.9,684.5 511.6,682.6 514.4,680.7 517.1,678.7 519.8,676.7 522.6,674.7 525.3,672.6 528.1,670.3 531.0,668.0 533.9,665.5 536.8,663.0 539.8,660.3 542.8,657.5 545.8,654.7 548.9,651.8 551.9,648.9 555.0,645.9 558.1,643.0 561.2,640.0 564.3,637.0 567.4,633.9 570.5,630.8 573.7,627.6 576.8,624.3 580.0,620.8 583.1,617.2 586.3,613.5 589.4,609.6 592.5,605.7 595.7,601.7 598.9,597.5 602.2,593.4 605.6,589.2 609.1,584.8 612.6,580.4 616.3,575.9 620.0,571.3 623.7,566.7 627.4,562.0 631.2,557.3 634.9,552.7 638.6,548.1 642.4,543.5 646.1,538.8 649.9,534.2 653.6,529.5 657.4,524.9 661.3,520.4 665.1,515.9 669.0,511.4 672.9,507.0 676.8,502.6 680.7,498.3 684.7,494.0 688.7,489.8 692.6,485.7 696.6,481.6 700.6,477.7 704.5,473.8 708.5,470.0 712.5,466.2 716.5,462.6 720.5,459.0 724.6,455.5 728.7,452.0 732.9,448.5 737.1,445.2 741.5,441.9 745.8,438.7 750.1,435.6 754.4,432.5 758.7,429.5 762.9,426.6 767.0,423.8 771.1,421.0 775.2,418.4 779.3,415.8 783.3,413.3 787.3,410.9 791.2,408.5 795.1,406.2 798.9,403.9 802.7,401.8 806.4,399.7 810.1,397.7 813.7,395.7 817.4,393.7 821.1,391.7 824.8,389.7 828.6,387.7 832.4,385.7 836.2,383.7 840.0,381.7 843.8,379.8 847.6,377.8 851.4,375.9 855.1,373.9 858.8,372.0 862.4,370.1 866.0,368.2 869.5,366.3 873.1,364.4 876.6,362.5 880.1,360.5 883.6,358.4 887.1,356.2 890.5,353.9 893.9,351.5 897.3,349.0 900.7,346.6 904.1,344.1 907.5,341.7 910.9,339.4 914.3,337.2 917.8,335.0 921.2,332.8 924.7,330.6 928.2,328.5 931.6,326.4 935.0,324.3 938.4,322.2 941.8,320.1 945.1,318.1 948.5,316.1 951.8,314.1 955.1,312.1 958.4,310.2 961.6,308.2 964.8,306.4 967.9,304.5 971.0,302.6 974.0,300.8 977.0,299.0 980.1,297.2 983.1,295.5 986.2,293.9 989.3,292.5 992.5,291.1 995.9,289.8 999.3,288.5 1002.7,287.4 1006.1,286.4 1009.5,285.4 1012.7,284.5 1015.7,283.8 1018.6,283.1 1021.3,282.5 1023.8,281.9 1026.4,281.5 1028.8,281.1 1031.3,280.9 1033.8,280.7 1036.4,280.6 1039.1,280.6 1041.8,280.5 1044.6,280.5 1047.4,280.6 1050.1,280.9 1052.8,281.4 1055.5,282.2 1058.0,283.4 1060.4,285.0 1062.7,286.9 1065.0,289.1 1067.2,291.6 1069.4,294.3 1071.5,297.1 1073.8,299.9 1076.0,302.7 1078.3,305.6 1080.6,308.5 1082.9,311.5 1085.3,314.6 1087.6,317.8 1089.9,321.2 1092.2,324.7 1094.5,328.3 1096.8,332.2 1099.1,336.2 1101.4,340.4 1103.7,344.8 1105.9,349.2 1108.0,353.7 1110.0,358.1 1111.9,362.5 1113.6,366.9 1115.2,371.3 1116.6,375.8 1118.0,380.2 1119.3,384.7 1120.5,389.1 1121.7,393.6 1122.8,398.0 1123.9,402.5 1124.9,407.0 1125.9,411.6 1126.8,416.2 1127.7,420.7 1128.5,425.0 1129.3,429.0 1130.1,432.7 1130.8,436.1 1131.5,439.1 1132.2,441.8 1132.8,444.4 1133.4,446.8 1134.0,449.3 1134.6,451.8 1135.2,454.4 1135.8,457.2 1136.4,460.2 1136.9,463.2 1137.5,466.2 1138.0,469.1 1138.5,471.8 1139.0,474.3 1139.5,476.4 1139.9,478.2 1140.3,479.8 1140.7,481.3 1141.1,482.5 1141.4,483.5 1141.7,484.2 1142.1,484.6 1142.4,484.7 1142.7,484.5 1143.0,483.9 1143.3,483.0 1143.6,481.8 1143.9,480.4 1144.2,478.9 1144.6,477.3 1145.0,475.6 1145.5,473.7 1146.1,471.6 1146.7,469.4 1147.3,467.0 1147.9,464.6 1148.6,462.1 1149.3,459.6 1150.0,457.2 1150.7,454.9 1151.4,452.4 1152.1,449.9 1152.9,447.4 1153.6,444.9 1154.4,442.6 1155.2,440.4 1156.0,438.4 1156.9,436.5 1157.8,434.8 1158.9,433.1 1159.9,431.6 1160.8,430.3 1161.7,429.1 1162.5,428.0 1163.0,427.2" stroke="#20F020"/><polyline points="444.6,670.2 446.3,669.8 448.5,669.3 451.1,668.6 454.0,667.9 457.1,667.2 460.2,666.4 463.2,665.7 466.0,665.0 468.6,664.4 471.2,663.7 473.8,663.1 476.4,662.4 478.9,661.8 481.5,661.1 484.1,660.5 486.8,659.8 489.5,659.1 492.2,658.4 495.0,657.7 497.8,657.0 500.6,656.3 503.3,655.5 506.1,654.7 508.9,653.9 511.6,653.0 514.4,652.2 517.1,651.3 519.8,650.4 522.6,649.4 525.3,648.4 528.1,647.3 531.0,646.1 533.9,644.8 536.8,643.4 539.8,641.9 542.8,640.4 545.8,638.8 548.9,637.2 551.9,635.6 555.0,634.0 558.1,632.4 561.2,630.8 564.3,629.2 567.4,627.6 570.5,625.9 573.7,624.2 576.8,622.3 580.0,620.4 583.1,618.3 586.3,616.2 589.4,613.9 592.5,611.6 595.7,609.2 598.9,606.8 602.2,604.5 605.6,602.1 609.1,599.7 612.6,597.3 616.3,594.9 620.0,592.4 623.7,590.0 627.4,587.6 631.2,585.2 634.9,582.9 638.6,580.6 642.4,578.3 646.1,576.1 649.9,573.9 653.6,571.7 657.4,569.6 661.3,567.5 665.1,565.6 669.0,563.7 672.9,561.9 676.8,560.2 680.7,558.6 684.7,557.0 688.7,555.5 692.6,554.0 696.6,552.7 700.6,551.4 704.5,550.3 708.5,549.2 712.5,548.2 716.5,547.2 720.5,546.4 724.6,545.6 728.7,544.9 732.9,544.3 737.1,543.8 741.5,543.3 745.8,543.0 750.1,542.7 754.4,542.4 758.7,542.2 762.9,542.0 767.0,541.9 771.1,541.8 775.2,541.7 779.3,541.7 783.3,541.8 787.3,541.8 791.2,541.9 795.1,542.0 798.9,542.1 802.7,542.3 806.4,542.5 810.1,542.7 813.7,542.9 817.4,543.1 821.1,543.4 824.8,543.6 828.6,543.9 832.4,544.1 836.2,544.4 840.0,544.7 843.8,545.0 847.6,545.3 851.4,545.6 855.1,545.8 858.8,546.0 862.4,546.3 866.0,546.5 869.5,546.8 873.1,547.0 876.6,547.1 880.1,547.2 883.6,547.3 887.1,547.3 890.5,547.2 893.9,547.0 897.3,546.8 900.7,546.6 904.1,546.4 907.5,546.2 910.9,546.1 914.3,546.0 917.8,546.0 921.2,546.0 924.7,546.0 928.2,546.0 931.6,546.0 935.0,546.1 938.4,546.1 941.8,546.1 945.1,546.2 948.5,546.2 951.8,546.2 955.1,546.3 958.4,546.4 961.6,546.4 964.8,546.5 967.9,546.6 971.0,546.6 974.0,546.6 977.0,546.7 980.1,546.7 983.1,546.8 986.2,547.0 989.3,547.3 992.5,547.7 995.9,548.1 999.3,548.6 1002.7,549.2 1006.1,549.8 1009.5,550.4 1012.7,551.0 1015.7,551.6 1018.6,552.2 1021.3,552.8 1023.8,553.3 1026.4,553.9 1028.8,554.6 1031.3,555.3 1033.8,556.0 1036.4,556.8 1039.1,557.6 1041.8,558.5 1044.6,559.4 1047.4,560.3 1050.1,561.4 1052.8,562.5 1055.5,563.8 1058.0,565.2 1060.4,566.8 1062.7,568.5 1065.0,570.4 1067.2,572.4 1069.4,574.4 1071.5,576.5 1073.8,578.7 1076.0,580.8 1078.3,582.9 1080.6,585.1 1082.9,587.3 1085.3,589.6 1087.6,591.9 1089.9,594.3 1092.2,596.7 1094.5,599.2 1096.8,601.8 1099.1,604.4 1101.4,607.2 1103.7,610.0 1105.9,612.8 1108.0,615.6 1110.0,618.3 1111.9,621.0 1113.6,623.6 1115.2,626.2 1116.6,628.8 1118.0,631.3 1119.3,633.9 1120.5,636.4 1121.7,638.8 1122.8,641.3 1123.9,643.8 1124.9,646.3 1125.9,648.8 1126.8,651.2 1127.7,653.6 1128.5,655.9 1129.3,658.1 1130.1,660.1 1130.8,661.9 1131.5,663.5 1132.2,665.0 1132.8,666.4 1133.4,667.7 1134.0,669.0 1134.6,670.4 1135.2,671.8 1135.8,673.3 1136.4,674.9 1136.9,676.5 1137.5,678.0 1138.0,679.6 1138.5,681.0 1139.0,682.3 1139.5,683.4 1139.9,684.4 1140.3,685.2 1140.7,686.0 1141.1,686.7 1141.4,687.2 1141.7,687.6 1142.1,687.9 1142.4,688.0 1142.7,687.9 1143.0,687.7 1143.3,687.3 1143.6,686.8 1143.9,686.2 1144.2,685.5 1144.6,684.8 1145.0,684.0 1145.5,683.2 1146.1,682.3 1146.7,681.3 1147.3,680.2 1147.9,679.2 1148.6,678.1 1149.3,677.0 1150.0,676.0 1150.7,675.0 1151.4,673.9 1152.1,672.8 1152.9,671.8 1153.6,670.7 1154.4,669.7 1155.2,668.8 1156.0,668.0 1156.9,667.3 1157.8,666.6 1158.9,666.0 1159.9,665.5 1160.8,665.0 1161.7,664.6 1162.5,664.3 1163.0,664.0" stroke="#20F020"/><polyline points="471.9,729.8 473.8,728.3 476.4,726.2 479.4,723.7 482.8,720.9 486.4,717.9 490.1,714.8 493.6,711.8 497.0,709.0 500.2,706.3 503.4,703.6 506.6,700.9 509.8,698.2 513.0,695.4 516.3,692.6 519.6,689.7 523.0,686.6 526.5,683.4 530.0,680.2 533.5,676.9 537.1,673.4 540.8,669.9 544.4,666.3 548.2,662.6 551.9,658.8 555.7,654.9 559.5,650.8 563.3,646.7 567.2,642.4 571.1,638.1 575.1,633.7 579.1,629.3 583.1,624.8 587.1,620.3 591.2,615.7 595.3,611.1 599.4,606.5 603.6,601.7 607.8,597.0 612.1,592.2 616.5,587.3 620.9,582.4 625.4,577.4 630.0,572.3 634.6,567.2 639.3,562.0 644.0,556.9 648.7,551.9 653.5,546.9 658.3,542.0 663.1,537.2 668.0,532.3 673.0,527.6 677.9,522.9 682.9,518.2 687.8,513.7 692.8,509.2 697.8,504.8 702.8,500.5 707.8,496.3 712.9,492.2 717.9,488.2 722.9,484.2 727.9,480.3 732.9,476.4 737.8,472.6 742.7,468.9 747.6,465.3 752.5,461.7 757.3,458.2 762.2,454.7 767.0,451.3 771.8,447.9 776.6,444.6 781.3,441.4 786.0,438.3 790.7,435.2 795.4,432.2 800.1,429.1 804.8,425.9 809.6,422.7 814.4,419.3 819.3,415.9 824.1,412.5 829.0,409.0 833.9,405.5 838.7,401.9 843.5,398.4 848.2,394.9 852.8,391.3 857.4,387.7 862.0,384.1 866.5,380.5 870.9,376.9 875.4,373.3 879.9,369.7 884.4,366.2 888.9,362.7 893.4,359.3 898.0,355.8 902.5,352.4 907.0,349.0 911.5,345.7 916.0,342.5 920.5,339.3 925.0,336.2 929.5,333.1 934.0,330.0 938.5,327.0 942.9,324.1 947.4,321.3 951.7,318.6 956.0,315.9 960.2,313.4 964.3,311.0 968.4,308.7 972.5,306.4 976.5,304.3 980.5,302.3 984.5,300.3 988.5,298.6 992.6,296.9 996.7,295.4 1000.8,294.0 1004.8,292.7 1008.9,291.5 1012.9,290.5 1016.8,289.6 1020.6,288.9 1024.3,288.4 1027.9,288.1 1031.5,288.0 1034.9,288.0 1038.4,288.2 1041.7,288.4 1045.1,288.7 1048.4,289.1 1051.7,289.4 1055.0,289.9 1058.3,290.4 1061.5,291.0 1064.6,291.7 1067.7,292.6 1070.7,293.7 1073.6,294.9 1076.4,296.3 1079.2,297.9 1081.8,299.6 1084.4,301.5 1086.9,303.5 1089.3,305.6 1091.6,307.9 1093.8,310.3 1095.9,312.9 1097.8,315.6 1099.6,318.5 1101.3,321.6 1102.9,324.7 1104.5,327.8 1106.1,331.1 1107.6,334.3 1109.1,337.6 1110.5,341.0 1111.9,344.4 1113.3,347.9 1114.6,351.4 1115.9,355.0 1117.2,358.6 1118.5,362.1 1119.8,365.6 1121.2,369.2 1122.6,372.7 1123.9,376.3 1125.2,379.9 1126.4,383.5 1127.6,387.2 1128.6,390.9 1129.5,394.8 1130.2,398.7 1130.7,402.7 1131.3,406.7 1131.8,410.7 1132.3,414.7 1132.9,418.7 1133.7,422.5 1134.6,426.3 1135.6,430.0 1136.6,433.7 1137.7,437.4 1138.8,441.1 1139.9,444.8 1141.0,448.4 1142.0,452.1 1143.0,456.0 1144.1,460.1 1145.2,464.4 1146.3,468.6 1147.4,472.5 1148.4,476.2 1149.2,479.4 1150.0,482.0 1150.6,483.8 1151.2,485.1 1151.6,485.9 1152.0,486.4 1152.3,486.6 1152.6,486.7 1152.8,486.8 1153.0,487.1" stroke="#20F020"/><polyline points="471.9,691.0 473.8,689.9 476.4,688.5 479.4,686.7 482.8,684.8 486.4,682.8 490.1,680.7 493.6,678.7 497.0,676.9 500.2,675.2 503.4,673.5 506.6,671.8 509.8,670.1 513.0,668.4 516.3,666.7 519.6,664.9 523.0,663.0 526.5,661.1 530.0,659.1 533.5,657.0 537.1,654.9 540.8,652.8 544.4,650.6 548.2,648.4 551.9,646.1 555.7,643.7 559.5,641.3 563.3,638.8 567.2,636.2 571.1,633.6 575.1,631.0 579.1,628.4 583.1,625.9 587.1,623.4 591.2,620.8 595.3,618.3 599.4,615.7 603.6,613.2 607.8,610.7 612.1,608.2 616.5,605.7 620.9,603.2 625.4,600.8 630.0,598.3 634.6,595.9 639.3,593.5 644.0,591.2 648.7,589.0 653.5,586.9 658.3,584.9 663.1,583.1 668.0,581.3 673.0,579.5 677.9,577.9 682.9,576.4 687.8,575.0 692.8,573.6 697.8,572.4 702.8,571.2 707.8,570.2 712.9,569.2 717.9,568.3 722.9,567.5 727.9,566.7 732.9,566.0 737.8,565.3 742.7,564.7 747.6,564.1 752.5,563.6 757.3,563.1 762.2,562.7 767.0,562.3 771.8,561.9 776.6,561.6 781.3,561.3 786.0,561.1 790.7,560.9 795.4,560.7 800.1,560.5 804.8,560.3 809.6,560.0 814.4,559.7 819.3,559.3 824.1,559.0 829.0,558.6 833.9,558.2 838.7,557.8 843.5,557.4 848.2,556.9 852.8,556.4 857.4,555.9 862.0,555.3 866.5,554.7 870.9,554.2 875.4,553.6 879.9,553.1 884.4,552.6 888.9,552.2 893.4,551.7 898.0,551.3 902.5,550.9 907.0,550.6 911.5,550.2 916.0,550.0 920.5,549.7 925.0,549.5 929.5,549.3 934.0,549.1 938.5,549.0 942.9,548.9 947.4,548.9 951.7,548.9 956.0,548.9 960.2,549.0 964.3,549.0 968.4,549.1 972.5,549.3 976.5,549.5 980.5,549.8 984.5,550.1 988.5,550.5 992.6,551.0 996.7,551.5 1000.8,552.2 1004.8,552.8 1008.9,553.6 1012.9,554.4 1016.8,555.2 1020.6,556.1 1024.3,557.1 1027.9,558.1 1031.5,559.2 1034.9,560.3 1038.4,561.5 1041.7,562.7 1045.1,564.0 1048.4,565.2 1051.7,566.4 1055.0,567.7 1058.3,569.0 1061.5,570.3 1064.6,571.7 1067.7,573.0 1070.7,574.5 1073.6,576.0 1076.4,577.6 1079.2,579.2 1081.8,580.9 1084.4,582.6 1086.9,584.3 1089.3,586.1 1091.6,588.0 1093.8,589.8 1095.9,591.7 1097.8,593.6 1099.6,595.6 1101.3,597.6 1102.9,599.6 1104.5,601.6 1106.1,603.7 1107.6,605.7 1109.1,607.7 1110.5,609.8 1111.9,611.9 1113.3,614.0 1114.6,616.1 1115.9,618.2 1117.2,620.3 1118.5,622.4 1119.8,624.5 1121.2,626.6 1122.6,628.7 1123.9,630.8 1125.2,632.8 1126.4,634.9 1127.6,637.0 1128.6,639.1 1129.5,641.2 1130.2,643.3 1130.7,645.4 1131.3,647.5 1131.8,649.6 1132.3,651.7 1132.9,653.7 1133.7,655.8 1134.6,657.9 1135.6,659.9 1136.6,661.9 1137.7,663.9 1138.8,666.0 1139.9,668.0 1141.0,670.0 1142.0,672.0 1143.0,674.1 1144.1,676.3 1145.2,678.6 1146.3,680.8 1147.4,683.0 1148.4,684.9 1149.2,686.6 1150.0,688.0 1150.6,689.0 1151.2,689.7 1151.6,690.2 1152.0,690.5 1152.3,690.7 1152.6,690.8 1152.8,690.9 1153.0,691.0" stroke="#20F020"/></g><g fill="none" stroke-width="1.05"><polyline points="517.7,607.4 519.5,605.8 521.8,603.6 524.6,601.0 527.7,598.2 531.0,595.1 534.3,591.9 537.6,588.9 540.6,586.0 543.5,583.2 546.4,580.4 549.3,577.5 552.2,574.7 555.1,571.8 558.0,568.9 560.9,566.1 563.8,563.2 566.7,560.4 569.6,557.6 572.4,554.8 575.3,552.0 578.2,549.3 581.1,546.4 584.0,543.6 586.9,540.7 589.9,537.7 592.8,534.7 595.8,531.7 598.8,528.6 601.8,525.5 604.8,522.4 607.9,519.3 610.9,516.2 614.0,513.0 617.0,509.9 620.1,506.8 623.2,503.6 626.3,500.4 629.4,497.2 632.5,494.0 635.6,490.7 638.7,487.4 641.9,484.1 645.0,480.7 648.2,477.3 651.3,473.8 654.5,470.4 657.7,467.0 660.8,463.6 663.9,460.3 667.0,457.0 670.1,453.7 673.2,450.4 676.3,447.1 679.5,443.8 682.6,440.5 685.8,437.1 689.0,433.6 692.3,430.1 695.6,426.5 698.8,422.9 702.2,419.4 705.4,415.8 708.7,412.3 712.0,408.8 715.2,405.5 718.4,402.2 721.6,399.0 724.8,395.8 728.0,392.6 731.3,389.4 734.5,386.1 737.8,382.8 741.1,379.4 744.5,375.9 748.0,372.4 751.4,368.8 754.8,365.3 758.3,361.8 761.7,358.3 765.0,354.9 768.3,351.6 771.5,348.3 774.7,345.2 777.9,342.0 781.1,338.8 784.3,335.7 787.5,332.5 790.8,329.4 794.1,326.1 797.5,322.9 800.9,319.6 804.3,316.3 807.7,313.0 811.1,309.8 814.4,306.7 817.7,303.7 820.9,300.8 824.1,298.0 827.2,295.3 830.3,292.6 833.4,290.0 836.5,287.4 839.6,284.8 842.8,282.1 846.0,279.4 849.3,276.6 852.6,273.8 855.9,271.1 859.2,268.3 862.4,265.7 865.7,263.0 868.9,260.5 872.1,258.0 875.2,255.7 878.3,253.4 881.4,251.1 884.4,248.9 887.5,246.7 890.6,244.5 893.7,242.3 896.8,240.0 900.0,237.7 903.2,235.5 906.4,233.2 909.5,231.0 912.7,228.9 915.8,226.8 918.9,224.9 922.0,223.2 925.0,221.6 928.0,220.0 931.0,218.6 934.0,217.2 937.0,215.9 940.0,214.6 942.9,213.3 945.8,211.9 948.7,210.6 951.6,209.2 954.5,207.9 957.3,206.7 960.1,205.5 963.0,204.4 965.8,203.4 968.6,202.6 971.5,201.8 974.3,201.1 977.1,200.5 979.9,199.9 982.7,199.5 985.5,199.1 988.2,198.7 990.9,198.5 993.6,198.3 996.3,198.1 999.0,198.1 1001.6,198.1 1004.2,198.2 1006.8,198.4 1009.3,198.5 1011.8,198.8 1014.2,199.1 1016.5,199.4 1018.8,199.9 1021.1,200.3 1023.4,200.9 1025.7,201.5 1028.0,202.2 1030.3,202.9 1032.6,203.7 1034.9,204.6 1037.1,205.5 1039.4,206.5 1041.6,207.6 1043.8,208.7 1046.0,209.9 1048.2,211.1 1050.3,212.4 1052.4,213.8 1054.5,215.2 1056.6,216.7 1058.7,218.2 1060.8,219.8 1062.8,221.4 1064.8,223.0 1066.8,224.7 1068.8,226.3 1070.8,228.1 1072.7,229.9 1074.6,231.8 1076.5,233.7 1078.4,235.7 1080.2,237.8 1082.0,240.1 1083.8,242.4 1085.6,244.8 1087.3,247.3 1089.0,249.7 1090.7,252.1 1092.3,254.3 1093.9,256.6 1095.4,258.7 1096.9,260.8 1098.4,262.8 1099.9,264.9 1101.3,267.1 1102.6,269.3 1104.0,271.6 1105.3,274.1 1106.5,276.6 1107.7,279.3 1108.9,282.0 1110.1,284.7 1111.3,287.4 1112.5,290.1 1113.7,292.7 1115.0,295.3 1116.4,297.8 1117.7,300.3 1119.1,302.8 1120.5,305.4 1121.8,307.9 1123.1,310.5 1124.3,313.2 1125.4,316.0 1126.5,318.9 1127.5,321.9 1128.4,324.9 1129.4,327.9 1130.3,330.8 1131.1,333.7 1132.0,336.5 1132.8,339.2 1133.7,341.9 1134.4,344.5 1135.2,347.1 1135.9,349.6 1136.6,352.1 1137.3,354.6 1138.0,357.1 1138.6,359.7 1139.3,362.2 1139.9,364.7 1140.4,367.2 1141.0,369.6 1141.5,372.0 1142.1,374.3 1142.7,376.6 1143.3,378.7 1143.9,380.8 1144.5,382.9 1145.1,384.8 1145.7,386.7 1146.3,388.6 1146.9,390.4 1147.5,392.2 1148.1,394.0 1148.7,395.7 1149.4,397.3 1150.0,398.9 1150.7,400.4 1151.2,402.0 1151.8,403.5 1152.3,405.0 1152.7,406.5 1153.1,408.0 1153.4,409.4 1153.7,410.9 1154.0,412.3 1154.3,413.6 1154.6,414.9 1155.0,416.0 1155.4,417.1 1155.9,418.1 1156.4,419.0 1156.9,419.9 1157.4,420.7 1158.0,421.4 1158.5,422.1 1159.0,422.6 1159.5,423.1 1160.0,423.5 1160.5,423.8 1161.0,424.0 1161.5,424.2 1162.0,424.2 1162.5,424.2 1163.0,424.1 1163.5,423.9 1164.0,423.4 1164.5,422.9 1165.0,422.3 1165.5,421.6 1166.0,421.1 1166.5,420.6 1167.0,420.4 1167.6,420.3 1168.2,420.4 1168.8,420.6 1169.5,420.8 1170.1,421.1 1170.6,421.4 1171.1,421.6 1171.4,421.7" stroke="#4CB454"/><polyline points="472.6,648.0 475.1,646.0 478.5,643.4 482.6,640.2 487.0,636.7 491.8,632.9 496.6,629.0 501.2,625.2 505.6,621.6 509.7,618.2 513.9,614.8 518.0,611.4 522.2,607.9 526.3,604.4 530.4,600.8 534.6,597.3 538.7,593.7 542.8,590.0 546.9,586.4 551.0,582.7 555.1,579.0 559.2,575.3 563.3,571.5 567.5,567.6 571.7,563.6 576.0,559.5 580.3,555.3 584.7,550.9 589.1,546.6 593.5,542.1 598.0,537.6 602.4,533.2 606.8,528.7 611.2,524.2 615.5,519.7 619.8,515.1 624.2,510.6 628.5,506.0 632.9,501.4 637.4,496.7 641.9,491.9 646.5,487.1 651.2,482.2 655.9,477.3 660.6,472.3 665.4,467.3 670.2,462.3 675.0,457.2 679.7,452.2 684.4,447.1 689.2,442.0 693.9,436.9 698.6,431.7 703.3,426.6 708.1,421.5 712.8,416.4 717.6,411.5 722.4,406.7 727.2,402.0 732.0,397.4 736.8,392.8 741.6,388.3 746.4,383.8 751.2,379.4 756.0,374.9 760.8,370.4 765.5,366.0 770.3,361.6 775.0,357.2 779.8,352.8 784.5,348.5 789.3,344.2 794.0,339.8 798.8,335.5 803.5,331.2 808.3,326.9 813.1,322.6 817.8,318.4 822.6,314.2 827.3,310.0 832.0,305.9 836.7,301.8 841.3,297.8 846.0,293.8 850.6,289.9 855.2,286.0 859.8,282.2 864.3,278.4 868.9,274.8 873.4,271.2 878.0,267.6 882.5,264.1 887.0,260.7 891.4,257.4 895.9,254.2 900.4,251.2 904.8,248.3 909.2,245.7 913.7,243.1 918.1,240.8 922.6,238.5 927.0,236.4 931.4,234.5 935.7,232.6 940.0,230.9 944.2,229.4 948.5,227.9 952.6,226.6 956.8,225.4 960.9,224.4 965.0,223.5 969.0,222.8 973.0,222.2 977.0,221.8 980.9,221.5 984.8,221.4 988.7,221.4 992.5,221.7 996.3,222.0 1000.0,222.6 1003.7,223.2 1007.3,224.1 1010.9,225.2 1014.4,226.5 1017.9,227.9 1021.3,229.5 1024.6,231.1 1027.9,232.9 1031.1,234.6 1034.2,236.4 1037.3,238.3 1040.4,240.3 1043.3,242.4 1046.2,244.5 1049.0,246.6 1051.8,248.7 1054.4,250.7 1056.9,252.6 1059.2,254.5 1061.4,256.2 1063.5,258.0 1065.6,259.8 1067.8,261.7 1070.0,263.6 1072.4,265.7 1075.0,267.9 1077.7,270.2 1080.5,272.7 1083.4,275.1 1086.2,277.7 1089.0,280.3 1091.6,282.9 1094.0,285.6 1096.2,288.3 1098.2,291.0 1100.2,293.8 1102.0,296.6 1103.8,299.4 1105.5,302.2 1107.2,305.0 1109.0,307.8 1110.8,310.5 1112.6,313.1 1114.4,315.7 1116.2,318.3 1118.0,321.0 1119.7,323.7 1121.3,326.5 1122.8,329.5 1124.2,332.5 1125.6,335.6 1127.0,338.6 1128.2,341.8 1129.4,345.2 1130.5,348.7 1131.6,352.6 1132.5,356.7 1133.3,361.0 1134.0,365.2 1134.6,369.4 1135.1,374.0 1135.6,379.1 1136.1,384.8 1136.5,391.5 1137.0,399.1 1137.5,409.0 1137.9,421.2 1138.3,434.9 1138.7,449.0 1139.1,462.5 1139.5,474.4 1139.9,483.7 1140.4,489.5 1140.9,491.4 1141.4,490.3 1141.9,486.9 1142.5,481.7 1143.0,475.5 1143.7,468.9 1144.3,462.6 1145.0,457.1 1145.8,452.1 1146.6,446.5 1147.4,440.7 1148.3,434.8 1149.2,428.8 1150.2,423.2 1151.1,417.9 1152.0,413.1 1153.0,408.9 1154.0,404.8 1155.1,400.9 1156.2,397.4 1157.2,394.2 1158.1,391.4 1158.9,389.0 1159.5,387.1" stroke="#4CB454"/><polyline points="444.6,724.0 446.3,723.1 448.5,721.8 451.1,720.3 454.0,718.6 457.1,716.8 460.2,714.9 463.2,713.1 466.0,711.5 468.6,709.9 471.2,708.3 473.8,706.8 476.4,705.2 478.9,703.6 481.5,702.0 484.1,700.4 486.8,698.8 489.5,697.1 492.2,695.4 495.0,693.6 497.8,691.9 500.6,690.1 503.3,688.2 506.1,686.4 508.9,684.5 511.6,682.6 514.4,680.7 517.1,678.7 519.8,676.7 522.6,674.7 525.3,672.6 528.1,670.3 531.0,668.0 533.9,665.5 536.8,663.0 539.8,660.3 542.8,657.5 545.8,654.7 548.9,651.8 551.9,648.9 555.0,645.9 558.1,643.0 561.2,640.0 564.3,637.0 567.4,633.9 570.5,630.8 573.7,627.6 576.8,624.3 580.0,620.8 583.1,617.2 586.3,613.5 589.4,609.6 592.5,605.7 595.7,601.7 598.9,597.5 602.2,593.4 605.6,589.2 609.1,584.8 612.6,580.4 616.3,575.9 620.0,571.3 623.7,566.7 627.4,562.0 631.2,557.3 634.9,552.7 638.6,548.1 642.4,543.5 646.1,538.8 649.9,534.2 653.6,529.5 657.4,524.9 661.3,520.4 665.1,515.9 669.0,511.4 672.9,507.0 676.8,502.6 680.7,498.3 684.7,494.0 688.7,489.8 692.6,485.7 696.6,481.6 700.6,477.7 704.5,473.8 708.5,470.0 712.5,466.2 716.5,462.6 720.5,459.0 724.6,455.5 728.7,452.0 732.9,448.5 737.1,445.2 741.5,441.9 745.8,438.7 750.1,435.6 754.4,432.5 758.7,429.5 762.9,426.6 767.0,423.8 771.1,421.0 775.2,418.4 779.3,415.8 783.3,413.3 787.3,410.9 791.2,408.5 795.1,406.2 798.9,403.9 802.7,401.8 806.4,399.7 810.1,397.7 813.7,395.7 817.4,393.7 821.1,391.7 824.8,389.7 828.6,387.7 832.4,385.7 836.2,383.7 840.0,381.7 843.8,379.8 847.6,377.8 851.4,375.9 855.1,373.9 858.8,372.0 862.4,370.1 866.0,368.2 869.5,366.3 873.1,364.4 876.6,362.5 880.1,360.5 883.6,358.4 887.1,356.2 890.5,353.9 893.9,351.5 897.3,349.0 900.7,346.6 904.1,344.1 907.5,341.7 910.9,339.4 914.3,337.2 917.8,335.0 921.2,332.8 924.7,330.6 928.2,328.5 931.6,326.4 935.0,324.3 938.4,322.2 941.8,320.1 945.1,318.1 948.5,316.1 951.8,314.1 955.1,312.1 958.4,310.2 961.6,308.2 964.8,306.4 967.9,304.5 971.0,302.6 974.0,300.8 977.0,299.0 980.1,297.2 983.1,295.5 986.2,293.9 989.3,292.5 992.5,291.1 995.9,289.8 999.3,288.5 1002.7,287.4 1006.1,286.4 1009.5,285.4 1012.7,284.5 1015.7,283.8 1018.6,283.1 1021.3,282.5 1023.8,281.9 1026.4,281.5 1028.8,281.1 1031.3,280.9 1033.8,280.7 1036.4,280.6 1039.1,280.6 1041.8,280.5 1044.6,280.5 1047.4,280.6 1050.1,280.9 1052.8,281.4 1055.5,282.2 1058.0,283.4 1060.4,285.0 1062.7,286.9 1065.0,289.1 1067.2,291.6 1069.4,294.3 1071.5,297.1 1073.8,299.9 1076.0,302.7 1078.3,305.6 1080.6,308.5 1082.9,311.5 1085.3,314.6 1087.6,317.8 1089.9,321.2 1092.2,324.7 1094.5,328.3 1096.8,332.2 1099.1,336.2 1101.4,340.4 1103.7,344.8 1105.9,349.2 1108.0,353.7 1110.0,358.1 1111.9,362.5 1113.6,366.9 1115.2,371.3 1116.6,375.8 1118.0,380.2 1119.3,384.7 1120.5,389.1 1121.7,393.6 1122.8,398.0 1123.9,402.5 1124.9,407.0 1125.9,411.6 1126.8,416.2 1127.7,420.7 1128.5,425.0 1129.3,429.0 1130.1,432.7 1130.8,436.1 1131.5,439.1 1132.2,441.8 1132.8,444.4 1133.4,446.8 1134.0,449.3 1134.6,451.8 1135.2,454.4 1135.8,457.2 1136.4,460.2 1136.9,463.2 1137.5,466.2 1138.0,469.1 1138.5,471.8 1139.0,474.3 1139.5,476.4 1139.9,478.2 1140.3,479.8 1140.7,481.3 1141.1,482.5 1141.4,483.5 1141.7,484.2 1142.1,484.6 1142.4,484.7 1142.7,484.5 1143.0,483.9 1143.3,483.0 1143.6,481.8 1143.9,480.4 1144.2,478.9 1144.6,477.3 1145.0,475.6 1145.5,473.7 1146.1,471.6 1146.7,469.4 1147.3,467.0 1147.9,464.6 1148.6,462.1 1149.3,459.6 1150.0,457.2 1150.7,454.9 1151.4,452.4 1152.1,449.9 1152.9,447.4 1153.6,444.9 1154.4,442.6 1155.2,440.4 1156.0,438.4 1156.9,436.5 1157.8,434.8 1158.9,433.1 1159.9,431.6 1160.8,430.3 1161.7,429.1 1162.5,428.0 1163.0,427.2" stroke="#4CB454"/><polyline points="471.9,729.8 473.8,728.3 476.4,726.2 479.4,723.7 482.8,720.9 486.4,717.9 490.1,714.8 493.6,711.8 497.0,709.0 500.2,706.3 503.4,703.6 506.6,700.9 509.8,698.2 513.0,695.4 516.3,692.6 519.6,689.7 523.0,686.6 526.5,683.4 530.0,680.2 533.5,676.9 537.1,673.4 540.8,669.9 544.4,666.3 548.2,662.6 551.9,658.8 555.7,654.9 559.5,650.8 563.3,646.7 567.2,642.4 571.1,638.1 575.1,633.7 579.1,629.3 583.1,624.8 587.1,620.3 591.2,615.7 595.3,611.1 599.4,606.5 603.6,601.7 607.8,597.0 612.1,592.2 616.5,587.3 620.9,582.4 625.4,577.4 630.0,572.3 634.6,567.2 639.3,562.0 644.0,556.9 648.7,551.9 653.5,546.9 658.3,542.0 663.1,537.2 668.0,532.3 673.0,527.6 677.9,522.9 682.9,518.2 687.8,513.7 692.8,509.2 697.8,504.8 702.8,500.5 707.8,496.3 712.9,492.2 717.9,488.2 722.9,484.2 727.9,480.3 732.9,476.4 737.8,472.6 742.7,468.9 747.6,465.3 752.5,461.7 757.3,458.2 762.2,454.7 767.0,451.3 771.8,447.9 776.6,444.6 781.3,441.4 786.0,438.3 790.7,435.2 795.4,432.2 800.1,429.1 804.8,425.9 809.6,422.7 814.4,419.3 819.3,415.9 824.1,412.5 829.0,409.0 833.9,405.5 838.7,401.9 843.5,398.4 848.2,394.9 852.8,391.3 857.4,387.7 862.0,384.1 866.5,380.5 870.9,376.9 875.4,373.3 879.9,369.7 884.4,366.2 888.9,362.7 893.4,359.3 898.0,355.8 902.5,352.4 907.0,349.0 911.5,345.7 916.0,342.5 920.5,339.3 925.0,336.2 929.5,333.1 934.0,330.0 938.5,327.0 942.9,324.1 947.4,321.3 951.7,318.6 956.0,315.9 960.2,313.4 964.3,311.0 968.4,308.7 972.5,306.4 976.5,304.3 980.5,302.3 984.5,300.3 988.5,298.6 992.6,296.9 996.7,295.4 1000.8,294.0 1004.8,292.7 1008.9,291.5 1012.9,290.5 1016.8,289.6 1020.6,288.9 1024.3,288.4 1027.9,288.1 1031.5,288.0 1034.9,288.0 1038.4,288.2 1041.7,288.4 1045.1,288.7 1048.4,289.1 1051.7,289.4 1055.0,289.9 1058.3,290.4 1061.5,291.0 1064.6,291.7 1067.7,292.6 1070.7,293.7 1073.6,294.9 1076.4,296.3 1079.2,297.9 1081.8,299.6 1084.4,301.5 1086.9,303.5 1089.3,305.6 1091.6,307.9 1093.8,310.3 1095.9,312.9 1097.8,315.6 1099.6,318.5 1101.3,321.6 1102.9,324.7 1104.5,327.8 1106.1,331.1 1107.6,334.3 1109.1,337.6 1110.5,341.0 1111.9,344.4 1113.3,347.9 1114.6,351.4 1115.9,355.0 1117.2,358.6 1118.5,362.1 1119.8,365.6 1121.2,369.2 1122.6,372.7 1123.9,376.3 1125.2,379.9 1126.4,383.5 1127.6,387.2 1128.6,390.9 1129.5,394.8 1130.2,398.7 1130.7,402.7 1131.3,406.7 1131.8,410.7 1132.3,414.7 1132.9,418.7 1133.7,422.5 1134.6,426.3 1135.6,430.0 1136.6,433.7 1137.7,437.4 1138.8,441.1 1139.9,444.8 1141.0,448.4 1142.0,452.1 1143.0,456.0 1144.1,460.1 1145.2,464.4 1146.3,468.6 1147.4,472.5 1148.4,476.2 1149.2,479.4 1150.0,482.0 1150.6,483.8 1151.2,485.1 1151.6,485.9 1152.0,486.4 1152.3,486.6 1152.6,486.7 1152.8,486.8 1153.0,487.1" stroke="#4CB454"/><polyline points="565.9,622.3 568.1,620.0 571.1,616.8 574.6,613.0 578.5,608.8 582.7,604.3 586.9,599.8 591.0,595.3 594.8,591.2 598.4,587.3 601.8,583.5 605.3,579.6 608.7,575.8 612.3,571.9 615.9,568.0 619.7,564.0 623.7,559.9 628.0,555.7 632.5,551.3 637.2,546.8 642.0,542.2 646.8,537.6 651.6,533.2 656.3,528.9 660.7,524.8 664.9,521.0 669.1,517.3 673.1,513.9 677.0,510.5 681.0,507.2 684.9,504.0 688.8,500.6 692.8,497.2 696.8,493.8 700.9,490.3 704.9,486.7 708.9,483.2 712.9,479.7 717.0,476.3 721.0,472.8 725.0,469.5 729.0,466.3 733.0,463.1 737.0,460.0 741.0,456.9 745.0,453.9 748.9,450.9 752.9,447.8 756.9,444.7 760.9,441.6 764.9,438.5 768.8,435.4 772.8,432.2 776.8,429.1 780.8,426.0 784.8,422.9 788.8,419.9 792.8,416.9 796.9,413.9 800.9,411.0 805.0,408.1 809.1,405.2 813.1,402.3 817.1,399.5 821.0,396.7 824.9,394.0 828.7,391.3 832.5,388.6 836.3,386.0 840.1,383.4 843.8,380.8 847.5,378.3 851.3,375.8 855.1,373.4 858.8,371.0 862.6,368.7 866.3,366.4 870.1,364.1 873.8,361.8 877.5,359.6 881.2,357.4 884.8,355.2 888.4,353.1 892.0,351.0 895.6,349.0 899.2,346.9 902.7,344.9 906.4,342.8 910.0,340.6 913.7,338.4 917.4,336.2 921.2,333.9 924.9,331.6 928.7,329.4 932.5,327.1 936.2,324.9 940.0,322.7 943.8,320.6 947.5,318.5 951.2,316.4 955.0,314.4 958.8,312.4 962.5,310.4 966.2,308.5 970.0,306.6 973.8,304.7 977.6,302.7 981.4,300.8 985.2,299.0 989.0,297.2 992.7,295.5 996.4,293.8 1000.0,292.4 1003.5,291.0 1007.0,289.7 1010.5,288.5 1013.9,287.5 1017.2,286.5 1020.5,285.6 1023.7,284.8 1026.8,284.1 1029.8,283.4 1032.7,282.9 1035.4,282.4 1038.1,282.0 1040.8,281.8 1043.5,281.6 1046.2,281.6 1049.0,281.8 1051.8,282.0 1054.6,282.3 1057.3,282.6 1060.1,283.2 1063.0,283.9 1065.9,284.9 1068.9,286.3 1072.0,288.1 1075.3,290.4 1078.9,293.2 1082.7,296.4 1086.5,299.9 1090.2,303.6 1093.8,307.5 1097.1,311.4 1100.0,315.2 1102.6,319.1 1104.9,323.1 1106.9,327.3 1108.8,331.5 1110.6,335.7 1112.2,339.8 1113.9,343.9 1115.6,347.7 1117.3,351.5 1118.9,355.1 1120.4,358.6 1121.9,362.0 1123.4,365.4 1124.8,368.8 1126.2,372.2 1127.6,375.7 1129.0,379.1 1130.5,382.4 1131.9,385.7 1133.3,389.0 1134.6,392.3 1135.9,395.8 1137.0,399.3 1138.0,403.0 1138.8,406.9 1139.5,411.0 1140.1,415.3 1140.5,419.6 1140.9,423.9 1141.3,428.1 1141.6,432.1 1142.0,435.8 1142.3,439.4 1142.5,443.0 1142.7,446.5 1142.9,449.9 1143.0,452.9 1143.3,455.6 1143.6,457.9 1144.0,459.5 1144.5,460.5 1145.2,460.9 1145.9,460.8 1146.6,460.3 1147.4,459.6 1148.3,458.8 1149.1,457.9 1150.0,457.2 1150.9,456.6 1151.9,455.8 1152.9,455.0 1154.0,454.0 1155.1,453.0 1156.1,452.0 1157.1,451.0 1158.0,450.0 1158.9,448.9 1159.7,447.7 1160.5,446.3 1161.2,445.0 1162.0,443.7 1162.7,442.7 1163.4,441.9 1164.0,441.4 1164.6,441.4 1165.2,441.8 1165.8,442.4 1166.4,443.2 1166.9,444.1 1167.3,445.0 1167.7,445.7 1168.0,446.1" stroke="#14147A"/><polyline points="580.5,598.2 581.8,596.7 583.5,594.9 585.5,592.6 587.7,590.1 590.2,587.4 592.9,584.6 595.8,581.6 598.8,578.8 602.1,575.8 605.7,572.7 609.6,569.4 613.7,566.0 617.8,562.6 621.9,559.1 625.9,555.6 629.6,552.2 633.1,548.8 636.3,545.5 639.5,542.1 642.6,538.7 645.7,535.3 648.9,531.7 652.2,528.1 655.7,524.3 659.4,520.3 663.1,516.1 667.0,511.7 670.9,507.3 674.9,502.8 679.0,498.4 683.1,493.9 687.2,489.5 691.4,485.2 695.7,480.9 700.0,476.5 704.4,472.2 708.8,467.9 713.2,463.7 717.6,459.5 722.0,455.5 726.3,451.7 730.7,447.9 735.0,444.3 739.3,440.7 743.6,437.2 747.9,433.8 752.3,430.5 756.6,427.1 761.0,423.9 765.3,420.6 769.7,417.5 774.1,414.4 778.5,411.4 782.8,408.5 787.1,405.6 791.3,402.9 795.4,400.3 799.4,397.8 803.4,395.4 807.3,393.2 811.2,390.9 815.1,388.7 819.0,386.4 822.9,384.1 826.9,381.7 830.9,379.3 834.9,376.9 838.9,374.5 842.9,372.1 846.9,369.7 850.9,367.3 854.8,364.9 858.7,362.5 862.5,360.1 866.3,357.7 870.1,355.3 873.9,352.8 877.7,350.4 881.4,348.0 885.2,345.5 889.0,343.0 892.7,340.5 896.4,337.9 900.2,335.4 903.9,332.8 907.6,330.3 911.2,327.7 914.9,325.1 918.5,322.4 922.2,319.7 925.8,317.0 929.4,314.3 932.9,311.6 936.5,308.9 940.1,306.4 943.7,304.0 947.3,301.7 950.9,299.5 954.6,297.4 958.2,295.3 961.8,293.4 965.4,291.4 969.0,289.6 972.5,287.7 976.0,285.9 979.5,284.0 982.9,282.2 986.4,280.4 989.8,278.7 993.2,277.2 996.6,275.8 1000.0,274.6 1003.4,273.5 1006.8,272.7 1010.3,272.0 1013.7,271.4 1017.1,271.0 1020.4,270.7 1023.6,270.5 1026.8,270.3 1029.8,270.3 1032.8,270.3 1035.7,270.5 1038.5,270.7 1041.3,271.1 1044.0,271.6 1046.8,272.2 1049.6,273.0 1052.4,273.9 1055.1,274.8 1057.8,275.9 1060.5,277.1 1063.2,278.5 1066.0,280.1 1068.9,282.0 1072.0,284.3 1075.3,287.0 1078.9,290.1 1082.6,293.5 1086.4,297.2 1090.1,301.1 1093.7,305.0 1097.0,309.0 1100.0,312.9 1102.6,316.7 1105.0,320.6 1107.2,324.5 1109.3,328.5 1111.2,332.5 1112.9,336.5 1114.6,340.4 1116.3,344.4 1117.8,348.4 1119.2,352.4 1120.5,356.4 1121.6,360.4 1122.8,364.4 1123.9,368.3 1125.1,372.1 1126.4,375.8 1127.8,379.4 1129.4,382.7 1131.0,385.9 1132.6,389.1 1134.2,392.4 1135.7,395.7 1137.0,399.2 1138.0,403.0 1138.8,406.8 1139.4,410.4 1139.8,414.1 1140.1,417.9 1140.4,422.1 1140.5,426.7 1140.8,432.1 1141.0,438.2 1141.3,446.2 1141.5,456.3 1141.7,467.5 1141.9,479.0 1142.1,489.8 1142.2,499.1 1142.4,505.8 1142.6,509.2 1142.7,508.4 1142.8,504.2 1142.8,497.5 1142.8,489.1 1142.9,480.2 1143.1,471.7 1143.5,464.5 1144.0,459.5 1144.8,456.8 1145.7,455.1 1146.9,454.3 1148.1,454.1 1149.4,454.3 1150.6,454.5 1151.9,454.5 1153.0,454.0 1154.1,453.2 1155.2,452.3 1156.2,451.3 1157.3,450.3 1158.3,449.3 1159.3,448.4 1160.2,447.5 1161.0,446.8 1161.7,446.1 1162.4,445.4 1163.0,444.7 1163.6,444.2 1164.1,443.6 1164.6,443.3 1165.1,443.0 1165.6,442.9 1166.1,442.9 1166.5,443.0 1166.9,443.2 1167.3,443.5 1167.7,443.9 1168.2,444.6 1168.7,445.4 1169.2,446.5 1169.9,448.0 1170.6,450.0 1171.5,452.2 1172.3,454.6 1173.2,457.0 1173.9,459.2 1174.5,461.1 1175.0,462.4" stroke="#14147A"/><polyline points="471.9,689.1 473.3,688.2 475.1,687.0 477.3,685.5 479.8,683.8 482.4,682.0 485.0,680.2 487.5,678.4 489.8,676.8 492.0,675.2 494.1,673.5 496.3,671.9 498.4,670.3 500.5,668.6 502.7,667.0 504.8,665.3 507.0,663.6 509.2,662.0 511.4,660.3 513.6,658.6 515.9,656.9 518.1,655.2 520.3,653.5 522.6,651.7 524.8,650.0 527.0,648.1 529.3,646.3 531.5,644.5 533.7,642.6 536.0,640.7 538.2,638.7 540.5,636.8 542.8,634.8 545.1,632.7 547.5,630.7 549.9,628.6 552.4,626.4 554.8,624.3 557.2,622.1 559.6,619.9 562.0,617.6 564.3,615.3 566.6,613.0 568.9,610.6 571.2,608.2 573.5,605.8 575.8,603.3 578.1,600.8 580.5,598.2 582.9,595.5 585.4,592.7 587.8,589.9 590.3,587.1 592.8,584.2 595.4,581.3 597.9,578.4 600.5,575.5 603.1,572.7 605.8,569.8 608.5,566.9 611.2,564.0 613.9,561.1 616.6,558.2 619.3,555.3 622.0,552.4 624.6,549.5 627.2,546.6 629.8,543.8 632.4,540.9 635.0,538.1 637.6,535.2 640.3,532.2 643.0,529.2 645.8,526.2 648.6,523.1 651.5,520.0 654.4,516.8 657.3,513.7 660.2,510.5 663.1,507.3 666.0,504.2 668.8,501.1 671.7,498.0 674.5,494.9 677.3,491.8 680.2,488.7 683.0,485.7 685.8,482.7 688.7,479.7 691.6,476.9 694.5,474.0 697.4,471.3 700.3,468.5 703.2,465.8 706.1,463.1 709.1,460.4 712.0,457.6 715.0,454.8 717.9,452.1 720.9,449.3 723.9,446.5 726.9,443.8 729.9,441.0 732.8,438.3 735.8,435.7 738.7,433.0 741.7,430.4 744.6,427.7 747.5,425.1 750.4,422.6 753.3,420.0 756.2,417.6 759.1,415.2 762.0,412.8 764.8,410.5 767.7,408.3 770.5,406.2 773.3,404.0 776.2,401.9 779.0,399.8 781.9,397.7 784.8,395.5 787.7,393.3 790.6,391.1 793.5,389.0 796.5,386.8 799.4,384.7 802.3,382.7 805.2,380.7 808.1,378.7 811.0,376.8 813.8,375.0 816.7,373.2 819.6,371.4 822.4,369.6 825.2,367.8 828.0,366.1 830.7,364.3 833.2,362.6 835.7,361.0 838.1,359.3 840.7,357.6 843.4,355.9 846.2,354.0 849.4,352.0 852.9,349.8 856.6,347.5 860.6,345.1 864.6,342.6 868.8,340.0 873.0,337.5 877.1,334.9 881.2,332.5 885.2,330.0 889.3,327.5 893.3,325.0 897.4,322.5 901.4,320.0 905.4,317.5 909.4,315.1 913.3,312.7 917.1,310.3 920.8,308.0 924.5,305.7 928.2,303.4 931.8,301.2 935.5,299.0 939.1,296.8 942.9,294.6 946.8,292.4 950.7,290.1 954.7,287.8 958.7,285.5 962.6,283.4 966.5,281.4 970.3,279.6 974.0,278.1 977.5,276.9 980.8,275.9 984.1,275.2 987.3,274.6 990.4,274.2 993.6,273.9 996.7,273.7 1000.0,273.5 1003.4,273.4 1006.9,273.4 1010.5,273.5 1014.1,273.7 1017.6,274.0 1021.0,274.4 1024.0,274.9 1026.8,275.5 1029.2,276.0 1031.2,276.7 1033.1,277.4 1034.7,278.1 1036.3,279.0 1037.8,279.9 1039.4,281.0 1041.2,282.2 1043.1,283.5 1045.1,285.0 1047.1,286.5 1049.1,288.2 1051.1,290.0 1053.1,291.8 1055.0,293.6 1056.8,295.4 1058.5,297.2 1060.2,299.1 1061.8,301.1 1063.4,303.0 1065.0,305.0 1066.5,307.0 1068.0,309.0 1069.5,311.0 1071.0,312.9 1072.4,314.9 1073.9,316.9 1075.3,318.9 1076.7,320.9 1078.1,322.9 1079.4,325.0 1080.8,327.1 1082.2,329.2 1083.5,331.5 1084.8,333.7 1086.2,336.0 1087.5,338.3 1088.7,340.6 1090.0,342.8 1091.2,344.9 1092.4,346.9 1093.6,348.9 1094.7,350.8 1095.8,352.7 1096.9,354.6 1098.0,356.5 1099.0,358.3 1100.0,360.2 1101.0,362.2 1101.9,364.2 1102.8,366.2 1103.7,368.2 1104.6,370.2 1105.5,372.1 1106.3,374.0 1107.2,375.7 1108.0,377.3 1108.9,378.9 1109.7,380.3 1110.5,381.7 1111.3,383.1 1112.1,384.4 1112.9,385.7 1113.7,386.9 1114.5,388.2 1115.4,389.4 1116.2,390.5 1117.1,391.7 1118.0,392.8 1118.8,393.8 1119.6,394.9 1120.4,395.9 1121.1,396.8 1121.8,397.8 1122.5,398.7 1123.1,399.5 1123.8,400.4 1124.5,401.2 1125.2,401.9 1126.0,402.6 1126.9,403.2 1127.9,403.9 1128.9,404.5 1130.0,405.0 1131.0,405.5 1132.1,405.9 1133.1,406.3 1134.0,406.6 1134.9,406.8 1135.9,406.9 1136.8,406.9 1137.7,406.8 1138.5,406.8 1139.3,406.7 1139.9,406.6 1140.4,406.6" stroke="#14147A"/><polyline points="662.7,452.9 665.9,450.6 670.1,447.4 675.2,443.7 680.8,439.6 686.7,435.3 692.6,431.0 698.4,426.9 703.7,423.3 708.7,420.1 713.6,417.0 718.5,414.1 723.4,411.2 728.2,408.5 733.0,405.7 737.9,403.0 742.7,400.4 747.6,397.7 752.4,395.0 757.3,392.4 762.2,389.8 767.1,387.3 771.8,384.8 776.6,382.5 781.2,380.3 785.7,378.2 790.2,376.2 794.6,374.4 798.9,372.6 803.2,370.9 807.5,369.2 811.8,367.4 816.0,365.6 820.3,363.7 824.7,361.8 829.1,359.9 833.4,357.9 837.7,356.0 841.8,354.1 845.6,352.2 849.2,350.3 852.4,348.5 855.4,346.7 858.1,345.0 860.7,343.2 863.2,341.5 865.6,339.7 868.1,337.9 870.8,336.0 873.6,334.1 876.4,332.2 879.2,330.2 882.0,328.2 884.9,326.1 887.7,324.1 890.5,322.1 893.2,320.1 895.9,318.2 898.5,316.2 901.2,314.2 903.8,312.2 906.3,310.3 908.9,308.4 911.4,306.6 914.0,304.9 916.5,303.4 919.1,301.9 921.6,300.6 924.0,299.3 926.5,298.1 929.0,296.9 931.5,295.6 934.0,294.3 936.5,292.9 939.0,291.5 941.6,290.1 944.1,288.6 946.6,287.2 949.1,285.9 951.6,284.6 954.1,283.4 956.5,282.4 958.8,281.5 961.0,280.7 963.3,279.9 965.6,279.1 968.0,278.4 970.6,277.5 973.3,276.5 976.3,275.3 979.4,274.0 982.6,272.5 986.0,271.1 989.4,269.6 992.9,268.3 996.3,267.1 999.7,266.2 1003.1,265.5 1006.5,264.9 1010.0,264.4 1013.5,264.1 1016.9,263.9 1020.3,263.8 1023.6,263.8 1026.8,263.9 1029.9,264.2 1032.8,264.5 1035.7,265.0 1038.5,265.5 1041.3,266.2 1044.0,267.1 1046.8,268.0 1049.6,269.1 1052.4,270.2 1055.1,271.4 1057.8,272.7 1060.5,274.1 1063.2,275.7 1066.0,277.6 1068.9,279.7 1072.0,282.2 1075.3,285.1 1078.9,288.5 1082.6,292.1 1086.4,296.0 1090.2,300.2 1093.7,304.4 1097.1,308.7 1100.0,312.9 1102.6,317.1 1104.9,321.5 1107.0,326.0 1108.9,330.5 1110.6,335.0 1112.3,339.4 1114.0,343.7 1115.6,347.7 1117.2,351.6 1118.6,355.3 1120.0,358.8 1121.2,362.3 1122.5,365.7 1123.8,369.0 1125.0,372.4 1126.4,375.8 1127.9,379.2 1129.4,382.6 1131.1,386.0 1132.7,389.3 1134.2,392.7 1135.7,396.0 1137.0,399.5 1138.0,403.0 1138.8,406.4 1139.4,409.5 1139.8,412.6 1140.1,415.7 1140.3,419.1 1140.5,422.9 1140.7,427.1 1141.0,432.1 1141.3,438.1 1141.6,445.2 1141.8,453.1 1142.1,461.2 1142.3,469.2 1142.6,476.7 1142.8,483.3 1143.0,488.6 1143.2,492.8 1143.4,496.4 1143.6,499.4 1143.8,501.7 1144.0,503.4 1144.1,504.4 1144.3,504.8 1144.5,504.4 1144.7,503.0 1144.9,500.5 1145.0,497.0 1145.2,493.0 1145.4,488.8 1145.6,484.5 1145.8,480.6 1146.0,477.2 1146.2,474.3 1146.5,471.4 1146.8,468.6 1147.1,465.9 1147.4,463.5 1147.6,461.3 1147.8,459.4 1148.0,458.0" stroke="#14147A"/><polyline points="663.3,499.1 664.5,498.0 666.0,496.6 667.8,494.9 669.8,493.0 671.9,491.0 674.1,488.9 676.3,486.8 678.4,484.9 680.4,482.9 682.6,481.0 684.7,478.9 686.9,476.9 689.1,474.8 691.3,472.8 693.4,470.8 695.5,468.9 697.6,467.2 699.6,465.5 701.6,463.8 703.6,462.2 705.5,460.6 707.5,459.1 709.5,457.5 711.5,455.8 713.5,454.1 715.5,452.4 717.5,450.7 719.5,448.9 721.5,447.2 723.6,445.5 725.6,443.8 727.6,442.2 729.6,440.6 731.7,439.1 733.8,437.6 735.8,436.1 737.9,434.7 739.9,433.2 742.0,431.8 744.0,430.4 746.0,429.0 748.0,427.6 750.0,426.2 751.9,424.9 753.9,423.6 755.9,422.2 757.8,420.9 759.8,419.5 761.8,418.1 763.7,416.6 765.7,415.1 767.7,413.6 769.6,412.2 771.6,410.7 773.6,409.2 775.6,407.8 777.6,406.4 779.6,405.0 781.7,403.6 783.7,402.2 785.8,400.8 787.8,399.5 789.9,398.1 792.0,396.9 794.1,395.6 796.2,394.5 798.4,393.4 800.5,392.3 802.7,391.2 804.8,390.1 806.9,388.9 809.0,387.7 811.0,386.4 813.0,385.1 815.0,383.7 817.0,382.3 818.9,381.0 820.9,379.6 822.8,378.2 824.8,376.9 826.8,375.6 828.8,374.4 830.9,373.1 832.9,371.9 834.9,370.7 837.0,369.4 839.0,368.2 841.0,367.0 843.0,365.8 845.0,364.6 847.0,363.4 849.0,362.2 851.0,361.0 853.0,359.9 855.0,358.6 857.0,357.4 859.0,356.2 861.0,354.9 862.9,353.7 864.9,352.4 866.9,351.1 868.8,349.8 870.8,348.5 872.8,347.2 874.8,345.9 876.8,344.6 878.8,343.3 880.8,342.0 882.8,340.7 884.8,339.4 886.8,338.1 888.9,336.8 891.0,335.5 893.1,334.2 895.3,332.9 897.5,331.6 899.6,330.3 901.8,329.0 903.9,327.7 906.0,326.4 908.1,325.1 910.1,323.9 912.1,322.6 914.1,321.3 916.0,320.0 918.0,318.7 920.0,317.4 922.0,316.1 924.0,314.8 926.0,313.6 928.0,312.3 930.0,311.0 932.1,309.7 934.1,308.5 936.1,307.2 938.1,305.9 940.1,304.6 942.1,303.3 944.1,302.0 946.1,300.7 948.1,299.3 950.1,298.1 952.1,296.8 954.1,295.6 956.1,294.4 958.1,293.3 960.1,292.2 962.1,291.1 964.1,290.0 966.1,289.0 968.1,288.0 970.1,287.0 972.1,286.1 974.1,285.2 976.1,284.3 978.1,283.5 980.1,282.7 982.1,281.9 984.1,281.1 986.1,280.4 988.1,279.7 990.1,279.1 992.1,278.4 994.0,277.8 996.0,277.2 998.0,276.7 1000.1,276.1 1002.1,275.5 1004.2,275.0 1006.3,274.4 1008.4,273.7 1010.6,273.1 1012.7,272.6 1014.9,272.1 1017.0,271.8 1019.1,271.5 1021.2,271.4 1023.2,271.3 1025.2,271.4 1027.2,271.5 1029.2,271.7 1031.2,272.0 1033.2,272.3 1035.2,272.7 1037.2,273.0 1039.1,273.4 1041.1,273.8 1043.0,274.3 1045.0,274.9 1046.9,275.6 1048.9,276.4 1050.8,277.3 1052.7,278.5 1054.7,279.8 1056.6,281.3 1058.5,282.8 1060.5,284.5 1062.4,286.2 1064.4,287.9 1066.4,289.7 1068.4,291.4 1070.5,293.1 1072.6,294.9 1074.8,296.7 1076.9,298.6 1079.0,300.6 1081.1,302.8 1083.2,305.1 1085.3,307.6 1087.3,310.2 1089.3,312.9 1091.3,315.8 1093.4,318.8 1095.4,321.8 1097.3,325.0 1099.3,328.2 1101.2,331.4 1103.1,334.6 1105.0,337.9 1106.8,341.2 1108.7,344.8 1110.5,348.5 1112.5,352.5 1114.5,356.9 1116.7,361.8 1119.0,367.3 1121.4,373.1 1123.8,379.2 1126.2,385.2 1128.4,391.0 1130.4,396.4 1132.2,401.1 1133.7,405.1 1134.9,408.7 1136.0,412.0 1136.9,414.9 1137.7,417.5 1138.5,419.9 1139.2,422.2 1140.0,424.3 1140.8,426.3 1141.6,428.1 1142.3,429.6 1143.0,430.9 1143.6,432.1 1144.2,433.0 1144.6,433.9 1145.0,434.6" stroke="#000000"/><polyline points="520.0,645.7 520.8,644.9 521.7,644.0 522.8,642.9 524.1,641.6 525.6,640.1 527.2,638.5 529.0,636.8 531.0,635.0 533.2,633.0 535.7,630.8 538.4,628.4 541.2,625.9 544.2,623.4 547.1,620.7 550.1,618.1 552.9,615.4 555.7,612.8 558.5,610.1 561.3,607.3 564.2,604.5 567.0,601.7 569.8,598.8 572.6,596.0 575.3,593.2 577.9,590.4 580.5,587.6 583.1,584.8 585.6,582.0 588.1,579.2 590.6,576.4 593.2,573.5 595.8,570.6 598.5,567.7 601.2,564.6 604.0,561.6 606.7,558.5 609.5,555.3 612.3,552.2 615.1,549.1 617.9,546.1 620.7,543.0 623.5,540.0 626.2,536.9 629.0,533.9 631.8,530.9 634.6,527.9 637.3,524.9 640.0,521.9 642.7,519.0 645.3,516.1 647.8,513.3 650.4,510.4 653.0,507.6 655.5,504.8 658.1,502.0 660.8,499.1 663.5,496.2 666.2,493.3 669.0,490.4 671.8,487.5 674.6,484.6 677.3,481.7 680.1,478.8 682.9,476.0 685.7,473.2 688.5,470.4 691.2,467.6 694.0,464.8 696.8,462.1 699.6,459.3 702.3,456.7 705.0,454.1 707.6,451.5 710.2,449.0 712.8,446.6 715.4,444.2 717.9,441.8 720.5,439.4 723.1,437.0 725.7,434.6 728.4,432.1 731.1,429.6 733.9,427.1 736.7,424.6 739.5,422.0 742.2,419.6 745.0,417.1 747.8,414.7 750.6,412.3 753.3,409.9 756.1,407.6 758.9,405.3 761.7,403.0 764.4,400.7 767.2,398.4 769.9,396.2 772.6,394.0 775.3,391.9 778.0,389.8 780.6,387.7 783.3,385.6 786.0,383.5 788.6,381.4 791.3,379.2 794.0,377.0 796.7,374.8 799.3,372.5 802.0,370.2 804.7,367.9 807.4,365.6 810.1,363.4 812.8,361.2 815.5,359.1 818.3,357.0 821.1,355.0 823.9,353.0 826.7,351.1 829.5,349.1 832.2,347.1 834.9,345.2 837.6,343.2 840.2,341.3 842.7,339.3 845.3,337.4 847.9,335.5 850.4,333.5 853.1,331.5 855.7,329.5 858.4,327.5 861.1,325.4 863.8,323.4 866.6,321.3 869.4,319.2 872.2,317.1 874.9,315.0 877.7,313.0 880.5,311.0 883.3,309.1 886.1,307.2 888.9,305.3 891.7,303.4 894.5,301.5 897.3,299.6 900.0,297.8 902.7,295.9 905.3,294.1 907.9,292.3 910.5,290.5 913.1,288.7 915.7,287.0 918.3,285.2 921.0,283.5 923.7,281.7 926.4,279.9 929.1,278.1 931.9,276.3 934.6,274.6 937.4,272.9 940.2,271.3 942.9,269.8 945.6,268.5 948.4,267.2 951.1,266.1 953.9,265.0 956.6,263.9 959.4,262.9 962.1,261.9 964.8,260.9 967.5,259.9 970.2,258.9 972.8,257.9 975.5,256.9 978.1,256.0 980.8,255.1 983.4,254.3 986.1,253.6 988.8,252.9 991.5,252.3 994.1,251.7 996.8,251.2 999.5,250.8 1002.2,250.4 1004.9,250.1 1007.7,249.9 1010.5,249.8 1013.4,249.7 1016.2,249.8 1019.1,249.9 1022.0,250.1 1024.9,250.3 1027.7,250.7 1030.4,251.2 1033.0,251.8 1035.6,252.4 1038.1,253.2 1040.6,254.1 1043.1,255.0 1045.6,256.1 1048.2,257.2 1050.8,258.4 1053.5,259.7 1056.2,261.0 1059.0,262.4 1061.8,263.9 1064.6,265.5 1067.4,267.3 1070.1,269.3 1072.9,271.5 1075.6,273.9 1078.3,276.4 1081.1,279.1 1083.8,281.9 1086.5,285.0 1089.1,288.3 1091.8,291.8 1094.5,295.7 1097.2,299.9 1100.0,304.6 1102.8,309.6 1105.7,314.8 1108.4,320.1 1111.0,325.5 1113.4,330.8 1115.6,336.0 1117.5,341.0 1119.3,346.1 1120.8,351.2 1122.3,356.2 1123.6,361.2 1124.9,366.1 1126.2,370.9 1127.6,375.7 1129.0,380.3 1130.3,385.0 1131.6,389.6 1132.9,394.1 1134.2,398.5 1135.4,402.7 1136.6,406.7 1137.8,410.4 1139.0,413.9 1140.2,417.3 1141.4,420.4 1142.5,423.4 1143.6,426.1 1144.6,428.5 1145.4,430.5 1146.0,432.1" stroke="#A83C3C"/><polyline points="517.7,570.8 519.5,570.1 521.8,569.2 524.6,568.2 527.7,567.0 531.0,565.7 534.3,564.4 537.6,563.2 540.6,562.0 543.5,560.9 546.4,559.7 549.3,558.5 552.2,557.4 555.1,556.2 558.0,555.0 560.9,553.9 563.8,552.8 566.7,551.7 569.6,550.7 572.4,549.6 575.3,548.6 578.2,547.6 581.1,546.6 584.0,545.6 586.9,544.5 589.9,543.4 592.8,542.3 595.8,541.2 598.8,540.1 601.8,538.9 604.8,537.8 607.9,536.7 610.9,535.6 614.0,534.5 617.0,533.4 620.1,532.4 623.2,531.3 626.3,530.2 629.4,529.2 632.5,528.1 635.6,527.0 638.7,525.9 641.9,524.7 645.0,523.6 648.2,522.4 651.3,521.3 654.5,520.1 657.7,519.0 660.8,517.9 663.9,516.8 667.0,515.8 670.1,514.8 673.2,513.8 676.3,512.9 679.5,511.9 682.6,510.9 685.8,509.9 689.0,508.9 692.3,507.8 695.6,506.8 698.8,505.7 702.2,504.7 705.4,503.7 708.7,502.7 712.0,501.8 715.2,501.0 718.4,500.2 721.6,499.4 724.8,498.7 728.0,498.0 731.3,497.3 734.5,496.5 737.8,495.8 741.1,495.0 744.5,494.2 748.0,493.4 751.4,492.6 754.8,491.8 758.3,491.1 761.7,490.3 765.0,489.6 768.3,488.9 771.5,488.3 774.7,487.7 777.9,487.1 781.1,486.5 784.3,485.9 787.5,485.4 790.8,484.8 794.1,484.2 797.5,483.7 800.9,483.1 804.3,482.6 807.7,482.1 811.1,481.6 814.4,481.2 817.7,480.8 820.9,480.5 824.1,480.2 827.2,479.9 830.3,479.7 833.4,479.5 836.5,479.3 839.6,479.1 842.8,478.9 846.0,478.7 849.3,478.5 852.6,478.3 855.9,478.1 859.2,477.9 862.4,477.8 865.7,477.7 868.9,477.6 872.1,477.6 875.2,477.5 878.3,477.6 881.4,477.6 884.4,477.7 887.5,477.7 890.6,477.8 893.7,477.9 896.8,478.0 900.0,478.0 903.2,478.1 906.4,478.2 909.5,478.3 912.7,478.4 915.8,478.6 918.9,478.9 922.0,479.2 925.0,479.6 928.0,480.1 931.0,480.6 934.0,481.1 937.0,481.7 940.0,482.2 942.9,482.7 945.8,483.2 948.7,483.7 951.6,484.1 954.5,484.6 957.3,485.1 960.1,485.7 963.0,486.3 965.8,486.9 968.6,487.6 971.5,488.4 974.3,489.2 977.1,490.0 979.9,490.9 982.7,491.7 985.5,492.7 988.2,493.6 990.9,494.6 993.6,495.6 996.3,496.6 999.0,497.6 1001.6,498.7 1004.2,499.8 1006.8,500.9 1009.3,502.0 1011.8,503.1 1014.2,504.2 1016.5,505.3 1018.8,506.4 1021.1,507.6 1023.4,508.8 1025.7,510.0 1028.0,511.2 1030.3,512.5 1032.6,513.8 1034.9,515.1 1037.1,516.4 1039.4,517.8 1041.6,519.2 1043.8,520.6 1046.0,522.0 1048.2,523.4 1050.3,524.9 1052.4,526.4 1054.5,527.9 1056.6,529.4 1058.7,530.9 1060.8,532.5 1062.8,534.0 1064.8,535.5 1066.8,537.1 1068.8,538.7 1070.8,540.2 1072.7,541.8 1074.6,543.4 1076.5,545.0 1078.4,546.7 1080.2,548.4 1082.0,550.1 1083.8,551.9 1085.6,553.7 1087.3,555.5 1089.0,557.3 1090.7,559.0 1092.3,560.7 1093.9,562.3 1095.4,563.9 1096.9,565.4 1098.4,566.9 1099.9,568.4 1101.3,569.9 1102.6,571.4 1104.0,573.0 1105.3,574.6 1106.5,576.3 1107.7,578.0 1108.9,579.6 1110.1,581.3 1111.3,583.0 1112.5,584.7 1113.7,586.4 1115.0,588.0 1116.4,589.7 1117.7,591.3 1119.1,592.9 1120.5,594.6 1121.8,596.2 1123.1,597.8 1124.3,599.5 1125.4,601.2 1126.5,602.9 1127.5,604.6 1128.4,606.3 1129.4,608.1 1130.3,609.7 1131.1,611.4 1132.0,613.0 1132.8,614.5 1133.7,616.1 1134.4,617.5 1135.2,619.0 1135.9,620.4 1136.6,621.8 1137.3,623.2 1138.0,624.6 1138.6,626.0 1139.3,627.4 1139.9,628.7 1140.4,630.1 1141.0,631.4 1141.5,632.7 1142.1,634.0 1142.7,635.2 1143.3,636.4 1143.9,637.5 1144.5,638.7 1145.1,639.8 1145.7,640.8 1146.3,641.9 1146.9,642.9 1147.5,643.9 1148.1,644.9 1148.7,645.8 1149.4,646.8 1150.0,647.7 1150.7,648.6 1151.2,649.4 1151.8,650.3 1152.3,651.1 1152.7,651.9 1153.1,652.7 1153.4,653.5 1153.7,654.2 1154.0,655.0 1154.3,655.7 1154.6,656.4 1155.0,657.0 1155.4,657.6 1155.9,658.2 1156.4,658.7 1156.9,659.3 1157.4,659.8 1158.0,660.2 1158.5,660.6 1159.0,661.0 1159.5,661.3 1160.0,661.6 1160.5,661.9 1161.0,662.1 1161.5,662.2 1162.0,662.4 1162.5,662.4 1163.0,662.5 1163.5,662.5 1164.0,662.4 1164.5,662.2 1165.0,662.0 1165.5,661.8 1166.0,661.6 1166.5,661.5 1167.0,661.5 1167.6,661.6 1168.2,661.7 1168.8,661.9 1169.5,662.2 1170.1,662.4 1170.6,662.7 1171.1,662.9 1171.4,663.0" stroke="#4CB454"/><polyline points="472.6,588.9 475.1,588.2 478.5,587.2 482.6,586.0 487.0,584.7 491.8,583.3 496.6,581.9 501.2,580.5 505.6,579.2 509.7,578.0 513.9,576.7 518.0,575.5 522.2,574.2 526.3,573.0 530.4,571.7 534.6,570.4 538.7,569.1 542.8,567.8 546.9,566.5 551.0,565.1 555.1,563.8 559.2,562.4 563.3,561.0 567.5,559.6 571.7,558.1 576.0,556.6 580.3,555.0 584.7,553.3 589.1,551.7 593.5,550.0 598.0,548.3 602.4,546.7 606.8,545.0 611.2,543.4 615.5,541.7 619.8,540.0 624.2,538.4 628.5,536.7 632.9,535.1 637.4,533.4 641.9,531.8 646.5,530.2 651.2,528.6 655.9,527.0 660.6,525.4 665.4,523.8 670.2,522.2 675.0,520.7 679.7,519.1 684.4,517.5 689.2,515.9 693.9,514.3 698.6,512.8 703.3,511.2 708.1,509.8 712.8,508.4 717.6,507.1 722.4,505.9 727.2,504.9 732.0,503.9 736.8,503.0 741.6,502.1 746.4,501.3 751.2,500.5 756.0,499.7 760.8,498.9 765.5,498.1 770.3,497.4 775.0,496.7 779.8,496.0 784.5,495.3 789.3,494.6 794.0,494.0 798.8,493.4 803.5,492.8 808.3,492.2 813.1,491.6 817.8,491.1 822.6,490.6 827.3,490.1 832.0,489.6 836.7,489.2 841.3,488.7 846.0,488.3 850.6,488.0 855.2,487.6 859.8,487.3 864.3,487.1 868.9,486.9 873.4,486.7 878.0,486.6 882.5,486.5 887.0,486.4 891.4,486.4 895.9,486.5 900.4,486.6 904.8,486.9 909.2,487.3 913.7,487.7 918.1,488.3 922.6,488.9 927.0,489.6 931.4,490.3 935.7,491.2 940.0,492.0 944.2,492.9 948.5,493.8 952.6,494.9 956.8,495.9 960.9,497.0 965.0,498.2 969.0,499.5 973.0,500.8 977.0,502.2 980.9,503.6 984.8,505.1 988.7,506.7 992.5,508.4 996.3,510.1 1000.0,511.8 1003.7,513.6 1007.3,515.5 1010.9,517.4 1014.4,519.5 1017.9,521.6 1021.3,523.7 1024.6,525.8 1027.9,527.9 1031.1,530.0 1034.2,532.1 1037.3,534.2 1040.4,536.4 1043.3,538.5 1046.2,540.6 1049.0,542.7 1051.8,544.8 1054.4,546.7 1056.9,548.5 1059.2,550.3 1061.4,551.9 1063.5,553.5 1065.6,555.2 1067.8,556.8 1070.0,558.6 1072.4,560.4 1075.0,562.4 1077.7,564.4 1080.5,566.5 1083.4,568.7 1086.2,570.9 1089.0,573.0 1091.6,575.1 1094.0,577.2 1096.2,579.2 1098.2,581.2 1100.2,583.2 1102.0,585.1 1103.8,587.0 1105.5,588.9 1107.2,590.8 1109.0,592.7 1110.8,594.6 1112.6,596.4 1114.4,598.1 1116.2,599.9 1118.0,601.7 1119.7,603.5 1121.3,605.3 1122.8,607.2 1124.2,609.1 1125.6,610.9 1127.0,612.8 1128.2,614.7 1129.4,616.6 1130.5,618.7 1131.6,620.8 1132.5,623.1 1133.3,625.4 1134.0,627.6 1134.6,629.9 1135.1,632.2 1135.6,634.8 1136.1,637.8 1136.5,641.1 1137.0,645.0 1137.5,649.9 1137.9,656.0 1138.3,662.8 1138.7,669.8 1139.1,676.5 1139.5,682.4 1139.9,687.1 1140.4,690.0 1140.9,691.0 1141.4,690.6 1141.9,689.0 1142.5,686.6 1143.0,683.6 1143.7,680.5 1144.3,677.5 1145.0,675.0 1145.8,672.7 1146.6,670.1 1147.4,667.5 1148.3,664.8 1149.2,662.1 1150.2,659.5 1151.1,657.1 1152.0,655.0 1153.0,653.1 1154.0,651.4 1155.1,649.7 1156.2,648.2 1157.2,646.9 1158.1,645.8 1158.9,644.8 1159.5,644.0" stroke="#4CB454"/><polyline points="444.6,670.2 446.3,669.8 448.5,669.3 451.1,668.6 454.0,667.9 457.1,667.2 460.2,666.4 463.2,665.7 466.0,665.0 468.6,664.4 471.2,663.7 473.8,663.1 476.4,662.4 478.9,661.8 481.5,661.1 484.1,660.5 486.8,659.8 489.5,659.1 492.2,658.4 495.0,657.7 497.8,657.0 500.6,656.3 503.3,655.5 506.1,654.7 508.9,653.9 511.6,653.0 514.4,652.2 517.1,651.3 519.8,650.4 522.6,649.4 525.3,648.4 528.1,647.3 531.0,646.1 533.9,644.8 536.8,643.4 539.8,641.9 542.8,640.4 545.8,638.8 548.9,637.2 551.9,635.6 555.0,634.0 558.1,632.4 561.2,630.8 564.3,629.2 567.4,627.6 570.5,625.9 573.7,624.2 576.8,622.3 580.0,620.4 583.1,618.3 586.3,616.2 589.4,613.9 592.5,611.6 595.7,609.2 598.9,606.8 602.2,604.5 605.6,602.1 609.1,599.7 612.6,597.3 616.3,594.9 620.0,592.4 623.7,590.0 627.4,587.6 631.2,585.2 634.9,582.9 638.6,580.6 642.4,578.3 646.1,576.1 649.9,573.9 653.6,571.7 657.4,569.6 661.3,567.5 665.1,565.6 669.0,563.7 672.9,561.9 676.8,560.2 680.7,558.6 684.7,557.0 688.7,555.5 692.6,554.0 696.6,552.7 700.6,551.4 704.5,550.3 708.5,549.2 712.5,548.2 716.5,547.2 720.5,546.4 724.6,545.6 728.7,544.9 732.9,544.3 737.1,543.8 741.5,543.3 745.8,543.0 750.1,542.7 754.4,542.4 758.7,542.2 762.9,542.0 767.0,541.9 771.1,541.8 775.2,541.7 779.3,541.7 783.3,541.8 787.3,541.8 791.2,541.9 795.1,542.0 798.9,542.1 802.7,542.3 806.4,542.5 810.1,542.7 813.7,542.9 817.4,543.1 821.1,543.4 824.8,543.6 828.6,543.9 832.4,544.1 836.2,544.4 840.0,544.7 843.8,545.0 847.6,545.3 851.4,545.6 855.1,545.8 858.8,546.0 862.4,546.3 866.0,546.5 869.5,546.8 873.1,547.0 876.6,547.1 880.1,547.2 883.6,547.3 887.1,547.3 890.5,547.2 893.9,547.0 897.3,546.8 900.7,546.6 904.1,546.4 907.5,546.2 910.9,546.1 914.3,546.0 917.8,546.0 921.2,546.0 924.7,546.0 928.2,546.0 931.6,546.0 935.0,546.1 938.4,546.1 941.8,546.1 945.1,546.2 948.5,546.2 951.8,546.2 955.1,546.3 958.4,546.4 961.6,546.4 964.8,546.5 967.9,546.6 971.0,546.6 974.0,546.6 977.0,546.7 980.1,546.7 983.1,546.8 986.2,547.0 989.3,547.3 992.5,547.7 995.9,548.1 999.3,548.6 1002.7,549.2 1006.1,549.8 1009.5,550.4 1012.7,551.0 1015.7,551.6 1018.6,552.2 1021.3,552.8 1023.8,553.3 1026.4,553.9 1028.8,554.6 1031.3,555.3 1033.8,556.0 1036.4,556.8 1039.1,557.6 1041.8,558.5 1044.6,559.4 1047.4,560.3 1050.1,561.4 1052.8,562.5 1055.5,563.8 1058.0,565.2 1060.4,566.8 1062.7,568.5 1065.0,570.4 1067.2,572.4 1069.4,574.4 1071.5,576.5 1073.8,578.7 1076.0,580.8 1078.3,582.9 1080.6,585.1 1082.9,587.3 1085.3,589.6 1087.6,591.9 1089.9,594.3 1092.2,596.7 1094.5,599.2 1096.8,601.8 1099.1,604.4 1101.4,607.2 1103.7,610.0 1105.9,612.8 1108.0,615.6 1110.0,618.3 1111.9,621.0 1113.6,623.6 1115.2,626.2 1116.6,628.8 1118.0,631.3 1119.3,633.9 1120.5,636.4 1121.7,638.8 1122.8,641.3 1123.9,643.8 1124.9,646.3 1125.9,648.8 1126.8,651.2 1127.7,653.6 1128.5,655.9 1129.3,658.1 1130.1,660.1 1130.8,661.9 1131.5,663.5 1132.2,665.0 1132.8,666.4 1133.4,667.7 1134.0,669.0 1134.6,670.4 1135.2,671.8 1135.8,673.3 1136.4,674.9 1136.9,676.5 1137.5,678.0 1138.0,679.6 1138.5,681.0 1139.0,682.3 1139.5,683.4 1139.9,684.4 1140.3,685.2 1140.7,686.0 1141.1,686.7 1141.4,687.2 1141.7,687.6 1142.1,687.9 1142.4,688.0 1142.7,687.9 1143.0,687.7 1143.3,687.3 1143.6,686.8 1143.9,686.2 1144.2,685.5 1144.6,684.8 1145.0,684.0 1145.5,683.2 1146.1,682.3 1146.7,681.3 1147.3,680.2 1147.9,679.2 1148.6,678.1 1149.3,677.0 1150.0,676.0 1150.7,675.0 1151.4,673.9 1152.1,672.8 1152.9,671.8 1153.6,670.7 1154.4,669.7 1155.2,668.8 1156.0,668.0 1156.9,667.3 1157.8,666.6 1158.9,666.0 1159.9,665.5 1160.8,665.0 1161.7,664.6 1162.5,664.3 1163.0,664.0" stroke="#4CB454"/><polyline points="471.9,691.0 473.8,689.9 476.4,688.5 479.4,686.7 482.8,684.8 486.4,682.8 490.1,680.7 493.6,678.7 497.0,676.9 500.2,675.2 503.4,673.5 506.6,671.8 509.8,670.1 513.0,668.4 516.3,666.7 519.6,664.9 523.0,663.0 526.5,661.1 530.0,659.1 533.5,657.0 537.1,654.9 540.8,652.8 544.4,650.6 548.2,648.4 551.9,646.1 555.7,643.7 559.5,641.3 563.3,638.8 567.2,636.2 571.1,633.6 575.1,631.0 579.1,628.4 583.1,625.9 587.1,623.4 591.2,620.8 595.3,618.3 599.4,615.7 603.6,613.2 607.8,610.7 612.1,608.2 616.5,605.7 620.9,603.2 625.4,600.8 630.0,598.3 634.6,595.9 639.3,593.5 644.0,591.2 648.7,589.0 653.5,586.9 658.3,584.9 663.1,583.1 668.0,581.3 673.0,579.5 677.9,577.9 682.9,576.4 687.8,575.0 692.8,573.6 697.8,572.4 702.8,571.2 707.8,570.2 712.9,569.2 717.9,568.3 722.9,567.5 727.9,566.7 732.9,566.0 737.8,565.3 742.7,564.7 747.6,564.1 752.5,563.6 757.3,563.1 762.2,562.7 767.0,562.3 771.8,561.9 776.6,561.6 781.3,561.3 786.0,561.1 790.7,560.9 795.4,560.7 800.1,560.5 804.8,560.3 809.6,560.0 814.4,559.7 819.3,559.3 824.1,559.0 829.0,558.6 833.9,558.2 838.7,557.8 843.5,557.4 848.2,556.9 852.8,556.4 857.4,555.9 862.0,555.3 866.5,554.7 870.9,554.2 875.4,553.6 879.9,553.1 884.4,552.6 888.9,552.2 893.4,551.7 898.0,551.3 902.5,550.9 907.0,550.6 911.5,550.2 916.0,550.0 920.5,549.7 925.0,549.5 929.5,549.3 934.0,549.1 938.5,549.0 942.9,548.9 947.4,548.9 951.7,548.9 956.0,548.9 960.2,549.0 964.3,549.0 968.4,549.1 972.5,549.3 976.5,549.5 980.5,549.8 984.5,550.1 988.5,550.5 992.6,551.0 996.7,551.5 1000.8,552.2 1004.8,552.8 1008.9,553.6 1012.9,554.4 1016.8,555.2 1020.6,556.1 1024.3,557.1 1027.9,558.1 1031.5,559.2 1034.9,560.3 1038.4,561.5 1041.7,562.7 1045.1,564.0 1048.4,565.2 1051.7,566.4 1055.0,567.7 1058.3,569.0 1061.5,570.3 1064.6,571.7 1067.7,573.0 1070.7,574.5 1073.6,576.0 1076.4,577.6 1079.2,579.2 1081.8,580.9 1084.4,582.6 1086.9,584.3 1089.3,586.1 1091.6,588.0 1093.8,589.8 1095.9,591.7 1097.8,593.6 1099.6,595.6 1101.3,597.6 1102.9,599.6 1104.5,601.6 1106.1,603.7 1107.6,605.7 1109.1,607.7 1110.5,609.8 1111.9,611.9 1113.3,614.0 1114.6,616.1 1115.9,618.2 1117.2,620.3 1118.5,622.4 1119.8,624.5 1121.2,626.6 1122.6,628.7 1123.9,630.8 1125.2,632.8 1126.4,634.9 1127.6,637.0 1128.6,639.1 1129.5,641.2 1130.2,643.3 1130.7,645.4 1131.3,647.5 1131.8,649.6 1132.3,651.7 1132.9,653.7 1133.7,655.8 1134.6,657.9 1135.6,659.9 1136.6,661.9 1137.7,663.9 1138.8,666.0 1139.9,668.0 1141.0,670.0 1142.0,672.0 1143.0,674.1 1144.1,676.3 1145.2,678.6 1146.3,680.8 1147.4,683.0 1148.4,684.9 1149.2,686.6 1150.0,688.0 1150.6,689.0 1151.2,689.7 1151.6,690.2 1152.0,690.5 1152.3,690.7 1152.6,690.8 1152.8,690.9 1153.0,691.0" stroke="#4CB454"/><polyline points="565.9,614.9 568.1,613.6 571.1,611.9 574.6,609.9 578.5,607.7 582.7,605.3 586.9,603.0 591.0,600.7 594.8,598.6 598.4,596.7 601.8,594.7 605.3,592.8 608.7,591.0 612.3,589.1 615.9,587.3 619.7,585.5 623.7,583.8 628.0,582.1 632.5,580.4 637.2,578.7 642.0,577.0 646.8,575.4 651.6,573.9 656.3,572.4 660.7,571.1 664.9,569.9 669.1,568.9 673.1,567.9 677.0,567.0 681.0,566.2 684.9,565.4 688.8,564.6 692.8,563.7 696.8,562.8 700.9,561.9 704.9,561.0 708.9,560.1 712.9,559.2 717.0,558.4 721.0,557.6 725.0,556.9 729.0,556.3 733.0,555.7 737.0,555.2 741.0,554.7 745.0,554.2 748.9,553.7 752.9,553.3 756.9,552.8 760.9,552.3 764.9,551.8 768.8,551.3 772.8,550.8 776.8,550.3 780.8,549.8 784.8,549.4 788.8,549.0 792.8,548.6 796.9,548.3 800.9,548.0 805.0,547.7 809.1,547.5 813.1,547.2 817.1,547.0 821.0,546.8 824.9,546.6 828.7,546.4 832.5,546.2 836.3,546.0 840.1,545.8 843.8,545.7 847.5,545.6 851.3,545.5 855.1,545.4 858.8,545.4 862.6,545.4 866.3,545.5 870.1,545.5 873.8,545.6 877.5,545.6 881.2,545.7 884.8,545.8 888.4,545.9 892.0,546.0 895.6,546.1 899.2,546.2 902.7,546.3 906.4,546.4 910.0,546.5 913.7,546.6 917.4,546.6 921.2,546.7 924.9,546.7 928.7,546.8 932.5,546.8 936.2,546.9 940.0,547.0 943.8,547.1 947.5,547.3 951.2,547.4 955.0,547.6 958.8,547.8 962.5,548.0 966.2,548.3 970.0,548.5 973.8,548.8 977.6,549.0 981.4,549.3 985.2,549.6 989.0,549.9 992.7,550.2 996.4,550.6 1000.0,551.0 1003.5,551.5 1007.0,551.9 1010.5,552.5 1013.9,553.0 1017.2,553.6 1020.5,554.2 1023.7,554.9 1026.8,555.5 1029.8,556.1 1032.7,556.8 1035.4,557.4 1038.1,558.1 1040.8,558.9 1043.5,559.6 1046.2,560.5 1049.0,561.5 1051.8,562.5 1054.6,563.5 1057.3,564.6 1060.1,565.8 1063.0,567.0 1065.9,568.5 1068.9,570.1 1072.0,572.0 1075.3,574.2 1078.9,576.7 1082.7,579.5 1086.5,582.4 1090.2,585.4 1093.8,588.3 1097.1,591.2 1100.0,594.0 1102.6,596.7 1104.9,599.3 1106.9,602.0 1108.8,604.6 1110.6,607.1 1112.2,609.7 1113.9,612.1 1115.6,614.5 1117.3,616.8 1118.9,619.0 1120.4,621.1 1121.9,623.2 1123.4,625.2 1124.8,627.3 1126.2,629.3 1127.6,631.3 1129.0,633.3 1130.5,635.3 1131.9,637.2 1133.3,639.2 1134.6,641.1 1135.9,643.1 1137.0,645.1 1138.0,647.1 1138.8,649.2 1139.5,651.4 1140.1,653.6 1140.5,655.8 1140.9,658.0 1141.3,660.1 1141.6,662.1 1142.0,664.0 1142.3,665.8 1142.5,667.6 1142.7,669.4 1142.9,671.1 1143.0,672.6 1143.3,674.0 1143.6,675.1 1144.0,676.0 1144.5,676.6 1145.2,676.9 1145.9,677.0 1146.6,676.9 1147.4,676.7 1148.3,676.4 1149.1,676.2 1150.0,676.0 1150.9,675.9 1151.9,675.7 1152.9,675.4 1154.0,675.2 1155.1,674.9 1156.1,674.6 1157.1,674.3 1158.0,674.0 1158.9,673.6 1159.7,673.2 1160.5,672.7 1161.2,672.2 1162.0,671.7 1162.7,671.4 1163.4,671.1 1164.0,671.0 1164.6,671.1 1165.2,671.4 1165.8,671.8 1166.4,672.3 1166.9,672.8 1167.3,673.3 1167.7,673.7 1168.0,674.0" stroke="#14147A"/><polyline points="580.5,598.0 581.8,597.3 583.5,596.3 585.5,595.1 587.7,593.9 590.2,592.5 592.9,591.1 595.8,589.8 598.8,588.6 602.1,587.5 605.7,586.4 609.6,585.3 613.7,584.3 617.8,583.2 621.9,582.1 625.9,580.9 629.6,579.7 633.1,578.4 636.3,577.0 639.5,575.6 642.6,574.2 645.7,572.7 648.9,571.2 652.2,569.7 655.7,568.1 659.4,566.5 663.1,564.8 667.0,563.0 670.9,561.2 674.9,559.4 679.0,557.7 683.1,556.0 687.2,554.5 691.4,553.0 695.7,551.6 700.0,550.2 704.4,548.9 708.8,547.7 713.2,546.5 717.6,545.4 722.0,544.4 726.3,543.5 730.7,542.7 735.0,542.0 739.3,541.4 743.6,540.8 747.9,540.3 752.3,539.8 756.6,539.4 761.0,539.0 765.3,538.7 769.7,538.5 774.1,538.3 778.5,538.1 782.8,538.0 787.1,537.9 791.3,537.9 795.4,537.9 799.4,538.0 803.4,538.1 807.3,538.3 811.2,538.4 815.1,538.6 819.0,538.8 822.9,538.9 826.9,539.0 830.9,539.1 834.9,539.2 838.9,539.4 842.9,539.5 846.9,539.6 850.9,539.6 854.8,539.7 858.7,539.7 862.5,539.8 866.3,539.8 870.1,539.8 873.9,539.8 877.7,539.8 881.4,539.7 885.2,539.7 889.0,539.6 892.7,539.6 896.4,539.5 900.2,539.4 903.9,539.2 907.6,539.1 911.2,539.0 914.9,538.8 918.5,538.6 922.2,538.4 925.8,538.1 929.4,537.9 932.9,537.6 936.5,537.4 940.1,537.3 943.7,537.2 947.3,537.2 950.9,537.3 954.6,537.4 958.2,537.6 961.8,537.8 965.4,538.0 969.0,538.3 972.5,538.5 976.0,538.7 979.5,538.9 982.9,539.2 986.4,539.4 989.8,539.7 993.2,540.0 996.6,540.5 1000.0,541.0 1003.4,541.6 1006.8,542.4 1010.3,543.2 1013.7,544.1 1017.1,545.0 1020.4,546.0 1023.6,547.0 1026.8,548.0 1029.8,549.0 1032.8,550.0 1035.7,551.1 1038.5,552.1 1041.3,553.2 1044.0,554.4 1046.8,555.7 1049.6,557.0 1052.4,558.4 1055.1,559.7 1057.8,561.2 1060.5,562.6 1063.2,564.2 1066.0,566.0 1068.9,567.9 1072.0,570.0 1075.3,572.4 1078.9,575.1 1082.6,577.9 1086.4,581.0 1090.1,584.0 1093.7,587.1 1097.0,590.0 1100.0,592.8 1102.6,595.5 1105.0,598.1 1107.2,600.7 1109.3,603.2 1111.2,605.7 1112.9,608.2 1114.6,610.6 1116.3,613.0 1117.8,615.4 1119.2,617.7 1120.5,620.0 1121.6,622.3 1122.8,624.6 1123.9,626.8 1125.1,629.0 1126.4,631.1 1127.8,633.2 1129.4,635.2 1131.0,637.2 1132.6,639.1 1134.2,641.1 1135.7,643.0 1137.0,645.0 1138.0,647.1 1138.8,649.1 1139.4,651.0 1139.8,652.9 1140.1,654.9 1140.4,657.0 1140.5,659.3 1140.8,661.9 1141.0,665.0 1141.3,669.0 1141.5,673.9 1141.7,679.5 1141.9,685.1 1142.1,690.4 1142.2,695.0 1142.4,698.3 1142.6,700.0 1142.7,699.7 1142.8,697.6 1142.8,694.3 1142.8,690.2 1142.9,685.9 1143.1,681.8 1143.5,678.3 1144.0,676.0 1144.8,674.8 1145.7,674.2 1146.9,674.0 1148.1,674.1 1149.4,674.4 1150.6,674.8 1151.9,675.0 1153.0,675.0 1154.1,674.8 1155.2,674.5 1156.2,674.3 1157.3,674.0 1158.3,673.7 1159.3,673.5 1160.2,673.2 1161.0,673.0 1161.7,672.8 1162.4,672.6 1163.0,672.4 1163.6,672.2 1164.1,672.1 1164.6,672.0 1165.1,672.0 1165.6,672.0 1166.1,672.1 1166.5,672.2 1166.9,672.4 1167.3,672.6 1167.7,672.9 1168.2,673.3 1168.7,673.8 1169.2,674.4 1169.9,675.2 1170.6,676.3 1171.5,677.5 1172.3,678.8 1173.2,680.1 1173.9,681.3 1174.5,682.3 1175.0,683.0" stroke="#14147A"/><polyline points="471.9,640.0 473.3,639.6 475.1,639.1 477.3,638.5 479.8,637.8 482.4,637.0 485.0,636.3 487.5,635.5 489.8,634.8 492.0,634.1 494.1,633.4 496.3,632.6 498.4,631.8 500.5,631.1 502.7,630.3 504.8,629.6 507.0,628.8 509.2,628.1 511.4,627.3 513.6,626.6 515.9,625.9 518.1,625.2 520.3,624.4 522.6,623.7 524.8,622.9 527.0,622.1 529.3,621.2 531.5,620.4 533.7,619.5 536.0,618.6 538.2,617.7 540.5,616.8 542.8,615.9 545.1,615.0 547.5,614.0 549.9,613.1 552.4,612.1 554.8,611.2 557.2,610.1 559.6,609.1 562.0,608.0 564.3,606.9 566.6,605.7 568.9,604.5 571.2,603.2 573.5,602.0 575.8,600.7 578.1,599.3 580.5,598.0 582.9,596.6 585.4,595.2 587.8,593.7 590.3,592.2 592.8,590.7 595.4,589.3 597.9,587.8 600.5,586.4 603.1,585.0 605.8,583.7 608.5,582.4 611.2,581.0 613.9,579.8 616.6,578.5 619.3,577.2 622.0,575.9 624.6,574.6 627.2,573.4 629.8,572.1 632.4,570.9 635.0,569.6 637.6,568.4 640.3,567.1 643.0,565.9 645.8,564.7 648.6,563.4 651.5,562.1 654.4,560.9 657.3,559.6 660.2,558.4 663.1,557.2 666.0,556.0 668.8,554.8 671.7,553.6 674.5,552.5 677.3,551.3 680.2,550.2 683.0,549.1 685.8,548.1 688.7,547.1 691.6,546.2 694.5,545.4 697.4,544.6 700.3,543.8 703.2,543.1 706.1,542.4 709.1,541.7 712.0,541.0 715.0,540.3 717.9,539.6 720.9,538.9 723.9,538.2 726.9,537.6 729.9,536.9 732.8,536.3 735.8,535.7 738.7,535.1 741.7,534.5 744.6,534.0 747.5,533.4 750.4,532.9 753.3,532.4 756.2,532.0 759.1,531.6 762.0,531.3 764.8,531.0 767.7,530.7 770.5,530.5 773.3,530.3 776.2,530.1 779.0,529.9 781.9,529.7 784.8,529.5 787.7,529.3 790.6,529.1 793.5,529.0 796.5,528.8 799.4,528.7 802.3,528.6 805.2,528.5 808.1,528.5 811.0,528.5 813.8,528.5 816.7,528.6 819.6,528.6 822.4,528.7 825.2,528.8 828.0,528.8 830.7,528.8 833.2,528.8 835.7,528.8 838.1,528.8 840.7,528.7 843.4,528.7 846.2,528.8 849.4,528.8 852.9,528.9 856.6,529.0 860.6,529.1 864.6,529.2 868.8,529.3 873.0,529.5 877.1,529.6 881.2,529.7 885.2,529.8 889.3,529.9 893.3,530.0 897.4,530.1 901.4,530.2 905.4,530.3 909.4,530.4 913.3,530.5 917.1,530.6 920.8,530.7 924.5,530.7 928.2,530.8 931.8,530.9 935.5,531.0 939.1,531.1 942.9,531.3 946.8,531.5 950.7,531.6 954.7,531.8 958.7,532.0 962.6,532.3 966.5,532.6 970.3,533.0 974.0,533.5 977.5,534.1 980.8,534.8 984.1,535.6 987.3,536.4 990.4,537.3 993.6,538.3 996.7,539.3 1000.0,540.4 1003.4,541.5 1006.9,542.8 1010.5,544.1 1014.1,545.5 1017.6,546.9 1021.0,548.3 1024.0,549.6 1026.8,550.8 1029.2,551.9 1031.2,553.0 1033.1,553.9 1034.7,554.9 1036.3,555.9 1037.8,556.9 1039.4,558.0 1041.2,559.2 1043.1,560.5 1045.1,561.9 1047.1,563.4 1049.1,565.0 1051.1,566.5 1053.1,568.1 1055.0,569.7 1056.8,571.2 1058.5,572.7 1060.2,574.2 1061.8,575.7 1063.4,577.2 1065.0,578.7 1066.5,580.2 1068.0,581.7 1069.5,583.2 1071.0,584.7 1072.4,586.1 1073.9,587.6 1075.3,589.0 1076.7,590.4 1078.1,591.9 1079.4,593.3 1080.8,594.8 1082.2,596.3 1083.5,597.8 1084.8,599.4 1086.2,600.9 1087.5,602.4 1088.7,603.9 1090.0,605.4 1091.2,606.8 1092.4,608.2 1093.6,609.5 1094.7,610.7 1095.8,612.0 1096.9,613.2 1098.0,614.5 1099.0,615.7 1100.0,616.9 1101.0,618.1 1101.9,619.4 1102.8,620.6 1103.7,621.9 1104.6,623.1 1105.5,624.3 1106.3,625.4 1107.2,626.5 1108.0,627.5 1108.9,628.5 1109.7,629.4 1110.5,630.3 1111.3,631.2 1112.1,632.0 1112.9,632.9 1113.7,633.7 1114.5,634.5 1115.4,635.3 1116.2,636.1 1117.1,636.9 1118.0,637.6 1118.8,638.3 1119.6,639.0 1120.4,639.7 1121.1,640.3 1121.8,641.0 1122.5,641.6 1123.1,642.1 1123.8,642.7 1124.5,643.2 1125.2,643.8 1126.0,644.3 1126.9,644.8 1127.9,645.3 1128.9,645.9 1130.0,646.4 1131.0,646.8 1132.1,647.3 1133.1,647.7 1134.0,648.0 1134.9,648.3 1135.9,648.5 1136.8,648.8 1137.7,648.9 1138.5,649.1 1139.3,649.2 1139.9,649.3 1140.4,649.4" stroke="#14147A"/><polyline points="662.7,509.7 665.9,509.6 670.1,509.4 675.2,509.2 680.8,509.1 686.7,508.9 692.6,508.8 698.4,508.7 703.7,508.8 708.7,509.0 713.6,509.3 718.5,509.6 723.4,510.0 728.2,510.5 733.0,511.0 737.9,511.5 742.7,512.0 747.6,512.5 752.4,513.0 757.3,513.6 762.2,514.2 767.1,514.8 771.8,515.4 776.6,516.0 781.2,516.7 785.7,517.4 790.2,518.2 794.6,519.0 798.9,519.9 803.2,520.7 807.5,521.5 811.8,522.3 816.0,523.0 820.3,523.7 824.7,524.4 829.1,525.1 833.4,525.7 837.7,526.3 841.8,526.8 845.6,527.3 849.2,527.6 852.4,527.8 855.4,527.9 858.1,528.0 860.7,527.9 863.2,527.9 865.6,527.8 868.1,527.7 870.8,527.6 873.6,527.5 876.4,527.5 879.2,527.4 882.0,527.3 884.9,527.2 887.7,527.1 890.5,527.0 893.2,526.9 895.9,526.8 898.5,526.6 901.2,526.5 903.8,526.3 906.3,526.2 908.9,526.1 911.4,526.0 914.0,526.0 916.5,526.1 919.1,526.2 921.6,526.4 924.0,526.7 926.5,526.9 929.0,527.2 931.5,527.4 934.0,527.6 936.5,527.8 939.0,527.9 941.6,528.1 944.1,528.2 946.6,528.3 949.1,528.5 951.6,528.7 954.1,529.0 956.5,529.3 958.8,529.7 961.0,530.1 963.3,530.5 965.6,530.9 968.0,531.4 970.6,531.8 973.3,532.3 976.3,532.7 979.4,533.1 982.6,533.5 986.0,533.9 989.4,534.4 992.9,534.9 996.3,535.5 999.7,536.2 1003.1,537.0 1006.5,537.9 1010.0,538.9 1013.5,539.9 1016.9,541.0 1020.3,542.2 1023.6,543.3 1026.8,544.5 1029.9,545.7 1032.8,546.9 1035.7,548.1 1038.5,549.3 1041.3,550.6 1044.0,552.0 1046.8,553.4 1049.6,554.9 1052.4,556.4 1055.1,557.9 1057.8,559.5 1060.5,561.1 1063.2,562.8 1066.0,564.6 1068.9,566.7 1072.0,568.9 1075.3,571.4 1078.9,574.2 1082.6,577.2 1086.4,580.4 1090.2,583.6 1093.7,586.7 1097.1,589.9 1100.0,592.8 1102.6,595.7 1104.9,598.5 1107.0,601.3 1108.9,604.1 1110.6,606.8 1112.3,609.5 1114.0,612.0 1115.6,614.5 1117.2,616.8 1118.6,619.0 1120.0,621.1 1121.2,623.2 1122.5,625.1 1123.8,627.1 1125.0,629.1 1126.4,631.1 1127.9,633.1 1129.4,635.2 1131.1,637.2 1132.7,639.2 1134.2,641.2 1135.7,643.2 1137.0,645.2 1138.0,647.1 1138.8,648.9 1139.4,650.6 1139.8,652.2 1140.1,653.8 1140.3,655.5 1140.5,657.4 1140.7,659.5 1141.0,662.0 1141.3,665.0 1141.6,668.5 1141.8,672.4 1142.1,676.4 1142.3,680.4 1142.6,684.1 1142.8,687.4 1143.0,690.0 1143.2,692.1 1143.4,693.9 1143.6,695.4 1143.8,696.6 1144.0,697.4 1144.1,697.9 1144.3,698.1 1144.5,698.0 1144.7,697.4 1144.9,696.1 1145.0,694.5 1145.2,692.6 1145.4,690.5 1145.6,688.5 1145.8,686.6 1146.0,685.0 1146.2,683.6 1146.5,682.3 1146.8,680.9 1147.1,679.7 1147.4,678.5 1147.6,677.5 1147.8,676.7 1148.0,676.0" stroke="#14147A"/><polyline points="663.3,550.1 664.5,549.8 666.0,549.4 667.8,548.9 669.8,548.3 671.9,547.7 674.1,547.1 676.3,546.6 678.4,546.0 680.4,545.5 682.6,544.9 684.7,544.3 686.9,543.7 689.1,543.2 691.3,542.6 693.4,542.1 695.5,541.7 697.6,541.3 699.6,541.0 701.6,540.7 703.6,540.4 705.5,540.1 707.5,539.9 709.5,539.6 711.5,539.3 713.5,539.0 715.5,538.6 717.5,538.3 719.5,537.9 721.5,537.6 723.6,537.2 725.6,536.9 727.6,536.7 729.6,536.5 731.7,536.3 733.8,536.2 735.8,536.1 737.9,536.0 739.9,535.9 742.0,535.8 744.0,535.7 746.0,535.6 748.0,535.6 750.0,535.5 751.9,535.5 753.9,535.4 755.9,535.4 757.8,535.3 759.8,535.2 761.8,535.1 763.7,534.9 765.7,534.8 767.7,534.6 769.6,534.5 771.6,534.3 773.6,534.2 775.6,534.1 777.6,534.0 779.6,534.0 781.7,533.9 783.7,533.9 785.8,533.8 787.8,533.8 789.9,533.8 792.0,533.9 794.1,534.0 796.2,534.2 798.4,534.4 800.5,534.6 802.7,534.8 804.8,535.0 806.9,535.1 809.0,535.2 811.0,535.2 813.0,535.2 815.0,535.1 817.0,535.1 818.9,535.0 820.9,534.9 822.8,534.8 824.8,534.8 826.8,534.8 828.8,534.8 830.9,534.9 832.9,534.9 834.9,535.0 837.0,535.1 839.0,535.1 841.0,535.2 843.0,535.3 845.0,535.3 847.0,535.4 849.0,535.5 851.0,535.5 853.0,535.6 855.0,535.7 857.0,535.7 859.0,535.7 861.0,535.7 862.9,535.7 864.9,535.7 866.9,535.7 868.8,535.7 870.8,535.7 872.8,535.7 874.8,535.7 876.8,535.7 878.8,535.7 880.8,535.7 882.8,535.7 884.8,535.7 886.8,535.7 888.9,535.7 891.0,535.7 893.1,535.8 895.3,535.8 897.5,535.9 899.6,536.0 901.8,536.0 903.9,536.1 906.0,536.1 908.1,536.1 910.1,536.1 912.1,536.1 914.1,536.1 916.0,536.1 918.0,536.1 920.0,536.1 922.0,536.1 924.0,536.1 926.0,536.1 928.0,536.1 930.0,536.2 932.1,536.2 934.1,536.2 936.1,536.2 938.1,536.2 940.1,536.2 942.1,536.2 944.1,536.2 946.1,536.1 948.1,536.1 950.1,536.1 952.1,536.2 954.1,536.2 956.1,536.3 958.1,536.4 960.1,536.5 962.1,536.6 964.1,536.7 966.1,536.8 968.1,537.0 970.1,537.2 972.1,537.4 974.1,537.6 976.1,537.9 978.1,538.1 980.1,538.4 982.1,538.7 984.1,539.0 986.1,539.3 988.1,539.6 990.1,540.0 992.1,540.3 994.0,540.7 996.0,541.1 998.0,541.5 1000.1,541.9 1002.1,542.3 1004.2,542.7 1006.3,543.1 1008.4,543.5 1010.6,544.0 1012.7,544.4 1014.9,544.9 1017.0,545.4 1019.1,546.0 1021.2,546.6 1023.2,547.3 1025.2,548.0 1027.2,548.8 1029.2,549.6 1031.2,550.4 1033.2,551.2 1035.2,552.1 1037.2,553.0 1039.1,553.8 1041.1,554.7 1043.0,555.6 1045.0,556.5 1046.9,557.5 1048.9,558.6 1050.8,559.7 1052.7,560.9 1054.7,562.2 1056.6,563.6 1058.5,565.1 1060.5,566.5 1062.4,568.0 1064.4,569.6 1066.4,571.1 1068.4,572.6 1070.5,574.2 1072.6,575.7 1074.8,577.3 1076.9,578.9 1079.0,580.6 1081.1,582.3 1083.2,584.1 1085.3,586.0 1087.3,587.9 1089.3,589.9 1091.3,591.9 1093.4,594.0 1095.4,596.1 1097.3,598.2 1099.3,600.4 1101.2,602.5 1103.1,604.7 1105.0,606.8 1106.8,609.0 1108.7,611.2 1110.5,613.6 1112.5,616.1 1114.5,618.8 1116.7,621.8 1119.0,625.1 1121.4,628.6 1123.8,632.2 1126.2,635.7 1128.4,639.1 1130.4,642.2 1132.2,644.9 1133.7,647.2 1134.9,649.3 1136.0,651.1 1136.9,652.7 1137.7,654.2 1138.5,655.5 1139.2,656.8 1140.0,658.0 1140.8,659.1 1141.6,660.1 1142.3,661.0 1143.0,661.8 1143.6,662.5 1144.2,663.1 1144.6,663.6 1145.0,664.0" stroke="#000000"/><polyline points="520.0,615.5 520.8,615.1 521.7,614.5 522.8,613.9 524.1,613.2 525.6,612.4 527.2,611.5 529.0,610.6 531.0,609.7 533.2,608.7 535.7,607.7 538.4,606.7 541.2,605.6 544.2,604.4 547.1,603.2 550.1,602.0 552.9,600.8 555.7,599.6 558.5,598.3 561.3,597.0 564.2,595.6 567.0,594.3 569.8,592.9 572.6,591.6 575.3,590.2 577.9,588.8 580.5,587.5 583.1,586.1 585.6,584.7 588.1,583.3 590.6,581.9 593.2,580.5 595.8,579.1 598.5,577.7 601.2,576.3 604.0,574.8 606.7,573.4 609.5,572.0 612.3,570.5 615.1,569.2 617.9,567.8 620.7,566.5 623.5,565.2 626.2,563.9 629.0,562.6 631.8,561.3 634.6,560.1 637.3,558.9 640.0,557.7 642.7,556.5 645.3,555.4 647.8,554.2 650.4,553.1 653.0,552.0 655.5,550.9 658.1,549.9 660.8,548.8 663.5,547.8 666.2,546.7 669.0,545.7 671.8,544.7 674.6,543.7 677.3,542.7 680.1,541.8 682.9,540.9 685.7,540.0 688.5,539.2 691.2,538.3 694.0,537.5 696.8,536.7 699.6,536.0 702.3,535.2 705.0,534.5 707.6,533.8 710.2,533.2 712.8,532.6 715.4,532.0 717.9,531.4 720.5,530.8 723.1,530.3 725.7,529.7 728.4,529.1 731.1,528.6 733.9,528.1 736.7,527.5 739.5,527.0 742.2,526.5 745.0,526.0 747.8,525.6 750.6,525.2 753.3,524.8 756.1,524.4 758.9,524.1 761.7,523.7 764.4,523.4 767.2,523.1 769.9,522.8 772.6,522.5 775.3,522.3 778.0,522.0 780.6,521.8 783.3,521.6 786.0,521.4 788.6,521.2 791.3,520.9 794.0,520.6 796.7,520.3 799.3,519.9 802.0,519.6 804.7,519.2 807.4,518.9 810.1,518.6 812.8,518.4 815.5,518.2 818.3,518.1 821.1,518.0 823.9,518.0 826.7,517.9 829.5,517.9 832.2,517.8 834.9,517.7 837.6,517.6 840.2,517.5 842.7,517.3 845.3,517.2 847.9,517.1 850.4,517.0 853.1,516.8 855.7,516.7 858.4,516.6 861.1,516.4 863.8,516.3 866.6,516.1 869.4,516.0 872.2,515.9 874.9,515.8 877.7,515.7 880.5,515.7 883.3,515.6 886.1,515.6 888.9,515.6 891.7,515.7 894.5,515.7 897.3,515.7 900.0,515.7 902.7,515.7 905.3,515.7 907.9,515.7 910.5,515.7 913.1,515.6 915.7,515.6 918.3,515.7 921.0,515.7 923.7,515.7 926.4,515.8 929.1,515.8 931.9,515.9 934.6,516.0 937.4,516.1 940.2,516.3 942.9,516.5 945.6,516.8 948.4,517.2 951.1,517.6 953.9,518.0 956.6,518.5 959.4,519.0 962.1,519.5 964.8,520.0 967.5,520.5 970.2,520.9 972.8,521.4 975.5,521.8 978.1,522.3 980.8,522.8 983.4,523.4 986.1,524.0 988.8,524.6 991.5,525.3 994.1,526.0 996.8,526.7 999.5,527.5 1002.2,528.3 1004.9,529.1 1007.7,530.0 1010.5,531.0 1013.4,532.0 1016.2,533.0 1019.1,534.1 1022.0,535.2 1024.9,536.4 1027.7,537.6 1030.4,538.8 1033.0,540.0 1035.6,541.3 1038.1,542.6 1040.6,543.9 1043.1,545.2 1045.6,546.6 1048.2,548.1 1050.8,549.6 1053.5,551.2 1056.2,552.8 1059.0,554.4 1061.8,556.1 1064.6,557.9 1067.4,559.7 1070.1,561.6 1072.9,563.6 1075.6,565.7 1078.3,567.8 1081.1,570.0 1083.8,572.3 1086.5,574.7 1089.1,577.2 1091.8,579.8 1094.5,582.5 1097.2,585.4 1100.0,588.6 1102.8,591.9 1105.7,595.3 1108.4,598.7 1111.0,602.1 1113.4,605.5 1115.6,608.6 1117.5,611.6 1119.3,614.6 1120.8,617.5 1122.3,620.4 1123.6,623.2 1124.9,625.9 1126.2,628.6 1127.6,631.3 1129.0,633.9 1130.3,636.5 1131.6,639.1 1132.9,641.6 1134.2,644.1 1135.4,646.4 1136.6,648.6 1137.8,650.7 1139.0,652.7 1140.2,654.6 1141.4,656.4 1142.5,658.1 1143.6,659.6 1144.6,661.0 1145.4,662.1 1146.0,663.0" stroke="#A83C3C"/></g></svg><path d="M502.5 145 v8 M502.5 883 v-8 M578.5 145 v8 M578.5 883 v-8 M655.5 145 v8 M655.5 883 v-8 M731.5 145 v8 M731.5 883 v-8 M808.5 145 v8 M808.5 883 v-8 M884.5 145 v8 M884.5 883 v-8 M961.5 145 v8 M961.5 883 v-8 M1037.5 145 v8 M1037.5 883 v-8 M1114.5 145 v8 M1114.5 883 v-8 M445 145.5 h8 M1176 145.5 h-8 M445 267.5 h8 M1176 267.5 h-8 M445 390.5 h8 M1176 390.5 h-8 M445 513.5 h8 M1176 513.5 h-8 M445 636.5 h8 M1176 636.5 h-8 M445 759.5 h8 M1176 759.5 h-8 M445 882.5 h8 M1176 882.5 h-8 M445 157.5 h4 M1176 157.5 h-4 M445 169.5 h4 M1176 169.5 h-4 M445 181.5 h4 M1176 181.5 h-4 M445 194.5 h4 M1176 194.5 h-4 M445 206.5 h4 M1176 206.5 h-4 M445 218.5 h4 M1176 218.5 h-4 M445 230.5 h4 M1176 230.5 h-4 M445 243.5 h4 M1176 243.5 h-4 M445 255.5 h4 M1176 255.5 h-4 M445 267.5 h4 M1176 267.5 h-4 M445 280.5 h4 M1176 280.5 h-4 M445 292.5 h4 M1176 292.5 h-4 M445 304.5 h4 M1176 304.5 h-4 M445 316.5 h4 M1176 316.5 h-4 M445 329.5 h4 M1176 329.5 h-4 M445 341.5 h4 M1176 341.5 h-4 M445 353.5 h4 M1176 353.5 h-4 M445 366.5 h4 M1176 366.5 h-4 M445 378.5 h4 M1176 378.5 h-4 M445 390.5 h4 M1176 390.5 h-4 M445 402.5 h4 M1176 402.5 h-4 M445 415.5 h4 M1176 415.5 h-4 M445 427.5 h4 M1176 427.5 h-4 M445 439.5 h4 M1176 439.5 h-4 M445 452.5 h4 M1176 452.5 h-4 M445 464.5 h4 M1176 464.5 h-4 M445 476.5 h4 M1176 476.5 h-4 M445 488.5 h4 M1176 488.5 h-4 M445 501.5 h4 M1176 501.5 h-4 M445 513.5 h4 M1176 513.5 h-4 M445 525.5 h4 M1176 525.5 h-4 M445 538.5 h4 M1176 538.5 h-4 M445 550.5 h4 M1176 550.5 h-4 M445 562.5 h4 M1176 562.5 h-4 M445 574.5 h4 M1176 574.5 h-4 M445 587.5 h4 M1176 587.5 h-4 M445 599.5 h4 M1176 599.5 h-4 M445 611.5 h4 M1176 611.5 h-4 M445 624.5 h4 M1176 624.5 h-4 M445 636.5 h4 M1176 636.5 h-4 M445 648.5 h4 M1176 648.5 h-4 M445 660.5 h4 M1176 660.5 h-4 M445 673.5 h4 M1176 673.5 h-4 M445 685.5 h4 M1176 685.5 h-4 M445 697.5 h4 M1176 697.5 h-4 M445 710.5 h4 M1176 710.5 h-4 M445 722.5 h4 M1176 722.5 h-4 M445 734.5 h4 M1176 734.5 h-4 M445 746.5 h4 M1176 746.5 h-4 M445 759.5 h4 M1176 759.5 h-4 M445 771.5 h4 M1176 771.5 h-4 M445 783.5 h4 M1176 783.5 h-4 M445 795.5 h4 M1176 795.5 h-4 M445 808.5 h4 M1176 808.5 h-4 M445 820.5 h4 M1176 820.5 h-4 M445 832.5 h4 M1176 832.5 h-4 M445 845.5 h4 M1176 845.5 h-4 M445 857.5 h4 M1176 857.5 h-4 M445 869.5 h4 M1176 869.5 h-4 M445.5 145.5 H1175.5 V882.5 H445.5 Z" stroke="#000" stroke-width="1" fill="none" shape-rendering="crispEdges"/><rect x="1176" y="883" width="5" height="2" fill="#000"/><rect x="1176" y="760" width="5" height="2" fill="#000"/><rect x="1176" y="637" width="5" height="2" fill="#000"/><rect x="1176" y="514" width="5" height="2" fill="#000"/><rect x="1176" y="391" width="5" height="2" fill="#000"/><g font-family="Liberation Sans" font-size="16" fill="#000"><text x="440" y="151" text-anchor="end">6</text><text x="440" y="273" text-anchor="end">5</text><text x="440" y="396" text-anchor="end">4</text><text x="440" y="519" text-anchor="end">3</text><text x="440" y="642" text-anchor="end">2</text><text x="440" y="765" text-anchor="end">1</text><text x="440" y="888" text-anchor="end">0</text><text x="503" y="901" text-anchor="middle">3000</text><text x="579" y="901" text-anchor="middle">3500</text><text x="656" y="901" text-anchor="middle">4000</text><text x="732" y="901" text-anchor="middle">4500</text><text x="809" y="901" text-anchor="middle">5000</text><text x="885" y="901" text-anchor="middle">5500</text><text x="962" y="901" text-anchor="middle">6000</text><text x="1038" y="901" text-anchor="middle">6500</text><text x="1115" y="901" text-anchor="middle">7000</text></g><g font-family="Liberation Sans" font-size="15.5" font-weight="bold" fill="#000"><text x="1180" y="888">0</text><text x="1180" y="765">2</text><text x="1180" y="642">4</text><text x="1180" y="519">6</text><text x="1180" y="396">8</text></g><text x="808.6" y="131.3" text-anchor="middle" font-family="Liberation Sans" font-size="20" font-weight="bold" fill="#000">GSF Dyno V0.1.19</text><text x="786.5" y="921.9" text-anchor="middle" font-family="Liberation Sans" font-size="16" fill="#000" textLength="84" lengthAdjust="spacingAndGlyphs">RPM [1/min]</text><text transform="translate(420.7 513.3) rotate(-90)" text-anchor="middle" font-family="Liberation Sans" font-size="16" fill="#000">Leistung[PS]</text><text transform="translate(1197 670.6) rotate(90)" text-anchor="middle" font-family="Liberation Sans" font-size="15.6" font-weight="bold" fill="#000">Drehm[Nm]</text><text x="506.5" y="822.8" font-family="Liberation Sans" font-size="9.4" fill="#000" textLength="67.5" lengthAdjust="spacingAndGlyphs">NOT FOR SALE</text><path d="M517.7 567.5l3.3 3.3l-3.3 3.3l-3.3 -3.3zM540.6 558.7l3.3 3.3l-3.3 3.3l-3.3 -3.3zM563.8 549.5l3.3 3.3l-3.3 3.3l-3.3 -3.3zM586.9 541.2l3.3 3.3l-3.3 3.3l-3.3 -3.3zM610.9 532.3l3.3 3.3l-3.3 3.3l-3.3 -3.3zM635.6 523.7l3.3 3.3l-3.3 3.3l-3.3 -3.3zM660.8 514.6l3.3 3.3l-3.3 3.3l-3.3 -3.3zM685.8 506.6l3.3 3.3l-3.3 3.3l-3.3 -3.3zM712.0 498.5l3.3 3.3l-3.3 3.3l-3.3 -3.3zM737.8 492.5l3.3 3.3l-3.3 3.3l-3.3 -3.3zM765.0 486.3l3.3 3.3l-3.3 3.3l-3.3 -3.3zM790.8 481.5l3.3 3.3l-3.3 3.3l-3.3 -3.3zM817.7 477.5l3.3 3.3l-3.3 3.3l-3.3 -3.3zM842.8 475.6l3.3 3.3l-3.3 3.3l-3.3 -3.3zM868.9 474.3l3.3 3.3l-3.3 3.3l-3.3 -3.3zM893.7 474.6l3.3 3.3l-3.3 3.3l-3.3 -3.3zM918.9 475.6l3.3 3.3l-3.3 3.3l-3.3 -3.3zM942.9 479.4l3.3 3.3l-3.3 3.3l-3.3 -3.3zM965.8 483.6l3.3 3.3l-3.3 3.3l-3.3 -3.3zM988.2 490.3l3.3 3.3l-3.3 3.3l-3.3 -3.3zM1009.3 498.7l3.3 3.3l-3.3 3.3l-3.3 -3.3zM1028.0 507.9l3.3 3.3l-3.3 3.3l-3.3 -3.3zM1046.0 518.7l3.3 3.3l-3.3 3.3l-3.3 -3.3zM1062.8 530.7l3.3 3.3l-3.3 3.3l-3.3 -3.3zM1078.4 543.4l3.3 3.3l-3.3 3.3l-3.3 -3.3zM1092.3 557.4l3.3 3.3l-3.3 3.3l-3.3 -3.3zM1104.0 569.7l3.3 3.3l-3.3 3.3l-3.3 -3.3zM1113.7 583.1l3.3 3.3l-3.3 3.3l-3.3 -3.3zM1124.3 596.2l3.3 3.3l-3.3 3.3l-3.3 -3.3zM1132.0 609.7l3.3 3.3l-3.3 3.3l-3.3 -3.3zM1138.0 621.3l3.3 3.3l-3.3 3.3l-3.3 -3.3zM1142.7 631.9l3.3 3.3l-3.3 3.3l-3.3 -3.3zM1147.5 640.6l3.3 3.3l-3.3 3.3l-3.3 -3.3zM1152.3 647.8l3.3 3.3l-3.3 3.3l-3.3 -3.3zM1155.0 653.7l3.3 3.3l-3.3 3.3l-3.3 -3.3zM1159.0 657.7l3.3 3.3l-3.3 3.3l-3.3 -3.3zM1163.0 659.2l3.3 3.3l-3.3 3.3l-3.3 -3.3zM1167.0 658.2l3.3 3.3l-3.3 3.3l-3.3 -3.3zM1171.4 659.7l3.3 3.3l-3.3 3.3l-3.3 -3.3zM1135.2 615.7l3.3 3.3l-3.3 3.3l-3.3 -3.3zM1140.4 626.8l3.3 3.3l-3.3 3.3l-3.3 -3.3zM1145.1 636.5l3.3 3.3l-3.3 3.3l-3.3 -3.3zM1150.0 644.4l3.3 3.3l-3.3 3.3l-3.3 -3.3zM1153.7 651.0l3.3 3.3l-3.3 3.3l-3.3 -3.3zM1156.9 656.0l3.3 3.3l-3.3 3.3l-3.3 -3.3zM1161.0 658.8l3.3 3.3l-3.3 3.3l-3.3 -3.3zM1165.0 658.7l3.3 3.3l-3.3 3.3l-3.3 -3.3zM1169.5 658.9l3.3 3.3l-3.3 3.3l-3.3 -3.3z" fill="#22EE22"/><path d="M472.6 585.6l3.3 3.3l-3.3 3.3l-3.3 -3.3zM505.6 575.9l3.3 3.3l-3.3 3.3l-3.3 -3.3zM538.7 565.8l3.3 3.3l-3.3 3.3l-3.3 -3.3zM571.7 554.8l3.3 3.3l-3.3 3.3l-3.3 -3.3zM606.8 541.7l3.3 3.3l-3.3 3.3l-3.3 -3.3zM641.9 528.5l3.3 3.3l-3.3 3.3l-3.3 -3.3zM679.7 515.8l3.3 3.3l-3.3 3.3l-3.3 -3.3zM717.6 503.8l3.3 3.3l-3.3 3.3l-3.3 -3.3zM756.0 496.4l3.3 3.3l-3.3 3.3l-3.3 -3.3zM794.0 490.7l3.3 3.3l-3.3 3.3l-3.3 -3.3zM832.0 486.3l3.3 3.3l-3.3 3.3l-3.3 -3.3zM868.9 483.6l3.3 3.3l-3.3 3.3l-3.3 -3.3zM904.8 483.6l3.3 3.3l-3.3 3.3l-3.3 -3.3zM940.0 488.7l3.3 3.3l-3.3 3.3l-3.3 -3.3zM973.0 497.5l3.3 3.3l-3.3 3.3l-3.3 -3.3zM1003.7 510.3l3.3 3.3l-3.3 3.3l-3.3 -3.3zM1031.1 526.7l3.3 3.3l-3.3 3.3l-3.3 -3.3zM1054.4 543.4l3.3 3.3l-3.3 3.3l-3.3 -3.3zM1072.4 557.1l3.3 3.3l-3.3 3.3l-3.3 -3.3zM1094.0 573.9l3.3 3.3l-3.3 3.3l-3.3 -3.3zM1109.0 589.4l3.3 3.3l-3.3 3.3l-3.3 -3.3zM1122.8 603.9l3.3 3.3l-3.3 3.3l-3.3 -3.3zM1132.5 619.8l3.3 3.3l-3.3 3.3l-3.3 -3.3zM1137.0 641.7l3.3 3.3l-3.3 3.3l-3.3 -3.3zM1140.4 686.7l3.3 3.3l-3.3 3.3l-3.3 -3.3zM1145.0 671.7l3.3 3.3l-3.3 3.3l-3.3 -3.3zM1152.0 651.7l3.3 3.3l-3.3 3.3l-3.3 -3.3zM1159.5 640.7l3.3 3.3l-3.3 3.3l-3.3 -3.3zM1135.1 628.9l3.3 3.3l-3.3 3.3l-3.3 -3.3zM1138.7 666.5l3.3 3.3l-3.3 3.3l-3.3 -3.3zM1142.5 683.3l3.3 3.3l-3.3 3.3l-3.3 -3.3zM1148.3 661.5l3.3 3.3l-3.3 3.3l-3.3 -3.3zM1156.2 645.0l3.3 3.3l-3.3 3.3l-3.3 -3.3z" fill="#22EE22"/><path d="M444.6 666.9l3.3 3.3l-3.3 3.3l-3.3 -3.3zM466.0 661.7l3.3 3.3l-3.3 3.3l-3.3 -3.3zM486.8 656.5l3.3 3.3l-3.3 3.3l-3.3 -3.3zM508.9 650.6l3.3 3.3l-3.3 3.3l-3.3 -3.3zM531.0 642.8l3.3 3.3l-3.3 3.3l-3.3 -3.3zM555.0 630.7l3.3 3.3l-3.3 3.3l-3.3 -3.3zM580.0 617.1l3.3 3.3l-3.3 3.3l-3.3 -3.3zM605.6 598.8l3.3 3.3l-3.3 3.3l-3.3 -3.3zM634.9 579.6l3.3 3.3l-3.3 3.3l-3.3 -3.3zM665.1 562.3l3.3 3.3l-3.3 3.3l-3.3 -3.3zM696.6 549.4l3.3 3.3l-3.3 3.3l-3.3 -3.3zM728.7 541.6l3.3 3.3l-3.3 3.3l-3.3 -3.3zM762.9 538.7l3.3 3.3l-3.3 3.3l-3.3 -3.3zM795.1 538.7l3.3 3.3l-3.3 3.3l-3.3 -3.3zM824.8 540.3l3.3 3.3l-3.3 3.3l-3.3 -3.3zM855.1 542.5l3.3 3.3l-3.3 3.3l-3.3 -3.3zM883.6 544.0l3.3 3.3l-3.3 3.3l-3.3 -3.3zM910.9 542.8l3.3 3.3l-3.3 3.3l-3.3 -3.3zM938.4 542.8l3.3 3.3l-3.3 3.3l-3.3 -3.3zM964.8 543.2l3.3 3.3l-3.3 3.3l-3.3 -3.3zM989.3 544.0l3.3 3.3l-3.3 3.3l-3.3 -3.3zM1015.7 548.3l3.3 3.3l-3.3 3.3l-3.3 -3.3zM1036.4 553.5l3.3 3.3l-3.3 3.3l-3.3 -3.3zM1058.0 561.9l3.3 3.3l-3.3 3.3l-3.3 -3.3zM1076.0 577.5l3.3 3.3l-3.3 3.3l-3.3 -3.3zM1094.5 595.9l3.3 3.3l-3.3 3.3l-3.3 -3.3zM1111.9 617.7l3.3 3.3l-3.3 3.3l-3.3 -3.3zM1122.8 638.0l3.3 3.3l-3.3 3.3l-3.3 -3.3zM1130.1 656.8l3.3 3.3l-3.3 3.3l-3.3 -3.3zM1135.2 668.5l3.3 3.3l-3.3 3.3l-3.3 -3.3zM1139.5 680.1l3.3 3.3l-3.3 3.3l-3.3 -3.3zM1142.4 684.7l3.3 3.3l-3.3 3.3l-3.3 -3.3zM1145.0 680.7l3.3 3.3l-3.3 3.3l-3.3 -3.3zM1150.0 672.7l3.3 3.3l-3.3 3.3l-3.3 -3.3zM1156.0 664.7l3.3 3.3l-3.3 3.3l-3.3 -3.3zM1163.0 660.7l3.3 3.3l-3.3 3.3l-3.3 -3.3zM1137.5 674.7l3.3 3.3l-3.3 3.3l-3.3 -3.3zM1141.1 683.4l3.3 3.3l-3.3 3.3l-3.3 -3.3zM1143.6 683.5l3.3 3.3l-3.3 3.3l-3.3 -3.3zM1147.3 677.0l3.3 3.3l-3.3 3.3l-3.3 -3.3zM1152.9 668.5l3.3 3.3l-3.3 3.3l-3.3 -3.3zM1159.9 662.2l3.3 3.3l-3.3 3.3l-3.3 -3.3z" fill="#22EE22"/><path d="M471.9 687.7l3.3 3.3l-3.3 3.3l-3.3 -3.3zM497.0 673.6l3.3 3.3l-3.3 3.3l-3.3 -3.3zM523.0 659.7l3.3 3.3l-3.3 3.3l-3.3 -3.3zM551.9 642.8l3.3 3.3l-3.3 3.3l-3.3 -3.3zM583.1 622.6l3.3 3.3l-3.3 3.3l-3.3 -3.3zM616.5 602.4l3.3 3.3l-3.3 3.3l-3.3 -3.3zM653.5 583.6l3.3 3.3l-3.3 3.3l-3.3 -3.3zM692.8 570.3l3.3 3.3l-3.3 3.3l-3.3 -3.3zM732.9 562.7l3.3 3.3l-3.3 3.3l-3.3 -3.3zM771.8 558.6l3.3 3.3l-3.3 3.3l-3.3 -3.3zM809.6 556.7l3.3 3.3l-3.3 3.3l-3.3 -3.3zM848.2 553.6l3.3 3.3l-3.3 3.3l-3.3 -3.3zM884.4 549.3l3.3 3.3l-3.3 3.3l-3.3 -3.3zM920.5 546.4l3.3 3.3l-3.3 3.3l-3.3 -3.3zM956.0 545.6l3.3 3.3l-3.3 3.3l-3.3 -3.3zM988.5 547.2l3.3 3.3l-3.3 3.3l-3.3 -3.3zM1020.6 552.8l3.3 3.3l-3.3 3.3l-3.3 -3.3zM1048.4 561.9l3.3 3.3l-3.3 3.3l-3.3 -3.3zM1073.6 572.7l3.3 3.3l-3.3 3.3l-3.3 -3.3zM1093.8 586.5l3.3 3.3l-3.3 3.3l-3.3 -3.3zM1107.6 602.4l3.3 3.3l-3.3 3.3l-3.3 -3.3zM1118.5 619.1l3.3 3.3l-3.3 3.3l-3.3 -3.3zM1128.6 635.8l3.3 3.3l-3.3 3.3l-3.3 -3.3zM1133.7 652.5l3.3 3.3l-3.3 3.3l-3.3 -3.3zM1142.0 668.7l3.3 3.3l-3.3 3.3l-3.3 -3.3zM1150.0 684.7l3.3 3.3l-3.3 3.3l-3.3 -3.3zM1153.0 687.7l3.3 3.3l-3.3 3.3l-3.3 -3.3zM1137.7 660.6l3.3 3.3l-3.3 3.3l-3.3 -3.3zM1146.3 677.5l3.3 3.3l-3.3 3.3l-3.3 -3.3zM1152.0 687.2l3.3 3.3l-3.3 3.3l-3.3 -3.3z" fill="#22EE22"/><path d="M565.9 611.6l3.3 3.3l-3.3 3.3l-3.3 -3.3zM594.8 595.3l3.3 3.3l-3.3 3.3l-3.3 -3.3zM623.7 580.5l3.3 3.3l-3.3 3.3l-3.3 -3.3zM660.7 567.8l3.3 3.3l-3.3 3.3l-3.3 -3.3zM692.8 560.4l3.3 3.3l-3.3 3.3l-3.3 -3.3zM725.0 553.6l3.3 3.3l-3.3 3.3l-3.3 -3.3zM756.9 549.5l3.3 3.3l-3.3 3.3l-3.3 -3.3zM788.8 545.7l3.3 3.3l-3.3 3.3l-3.3 -3.3zM821.0 543.5l3.3 3.3l-3.3 3.3l-3.3 -3.3zM851.3 542.2l3.3 3.3l-3.3 3.3l-3.3 -3.3zM881.2 542.4l3.3 3.3l-3.3 3.3l-3.3 -3.3zM910.0 543.2l3.3 3.3l-3.3 3.3l-3.3 -3.3zM940.0 543.7l3.3 3.3l-3.3 3.3l-3.3 -3.3zM970.0 545.2l3.3 3.3l-3.3 3.3l-3.3 -3.3zM1000.0 547.7l3.3 3.3l-3.3 3.3l-3.3 -3.3zM1026.8 552.2l3.3 3.3l-3.3 3.3l-3.3 -3.3zM1049.0 558.2l3.3 3.3l-3.3 3.3l-3.3 -3.3zM1072.0 568.7l3.3 3.3l-3.3 3.3l-3.3 -3.3zM1100.0 590.7l3.3 3.3l-3.3 3.3l-3.3 -3.3zM1115.6 611.2l3.3 3.3l-3.3 3.3l-3.3 -3.3zM1127.6 628.0l3.3 3.3l-3.3 3.3l-3.3 -3.3zM1138.0 643.8l3.3 3.3l-3.3 3.3l-3.3 -3.3zM1142.0 660.7l3.3 3.3l-3.3 3.3l-3.3 -3.3zM1144.0 672.7l3.3 3.3l-3.3 3.3l-3.3 -3.3zM1150.0 672.7l3.3 3.3l-3.3 3.3l-3.3 -3.3zM1158.0 670.7l3.3 3.3l-3.3 3.3l-3.3 -3.3zM1164.0 667.7l3.3 3.3l-3.3 3.3l-3.3 -3.3zM1168.0 670.7l3.3 3.3l-3.3 3.3l-3.3 -3.3zM1133.3 635.9l3.3 3.3l-3.3 3.3l-3.3 -3.3zM1140.5 652.5l3.3 3.3l-3.3 3.3l-3.3 -3.3zM1142.9 667.8l3.3 3.3l-3.3 3.3l-3.3 -3.3zM1146.6 673.6l3.3 3.3l-3.3 3.3l-3.3 -3.3zM1154.0 671.9l3.3 3.3l-3.3 3.3l-3.3 -3.3zM1161.2 668.9l3.3 3.3l-3.3 3.3l-3.3 -3.3zM1166.4 669.0l3.3 3.3l-3.3 3.3l-3.3 -3.3z" fill="#0A0AF0"/><path d="M580.5 594.7l3.3 3.3l-3.3 3.3l-3.3 -3.3zM598.8 585.3l3.3 3.3l-3.3 3.3l-3.3 -3.3zM629.6 576.4l3.3 3.3l-3.3 3.3l-3.3 -3.3zM655.7 564.8l3.3 3.3l-3.3 3.3l-3.3 -3.3zM687.2 551.2l3.3 3.3l-3.3 3.3l-3.3 -3.3zM722.0 541.1l3.3 3.3l-3.3 3.3l-3.3 -3.3zM756.6 536.1l3.3 3.3l-3.3 3.3l-3.3 -3.3zM791.3 534.6l3.3 3.3l-3.3 3.3l-3.3 -3.3zM822.9 535.6l3.3 3.3l-3.3 3.3l-3.3 -3.3zM854.8 536.4l3.3 3.3l-3.3 3.3l-3.3 -3.3zM885.2 536.4l3.3 3.3l-3.3 3.3l-3.3 -3.3zM914.9 535.5l3.3 3.3l-3.3 3.3l-3.3 -3.3zM943.7 533.9l3.3 3.3l-3.3 3.3l-3.3 -3.3zM972.5 535.2l3.3 3.3l-3.3 3.3l-3.3 -3.3zM1000.0 537.7l3.3 3.3l-3.3 3.3l-3.3 -3.3zM1026.8 544.7l3.3 3.3l-3.3 3.3l-3.3 -3.3zM1049.6 553.7l3.3 3.3l-3.3 3.3l-3.3 -3.3zM1072.0 566.7l3.3 3.3l-3.3 3.3l-3.3 -3.3zM1100.0 589.5l3.3 3.3l-3.3 3.3l-3.3 -3.3zM1116.3 609.7l3.3 3.3l-3.3 3.3l-3.3 -3.3zM1126.4 627.8l3.3 3.3l-3.3 3.3l-3.3 -3.3zM1138.0 643.8l3.3 3.3l-3.3 3.3l-3.3 -3.3zM1141.0 661.7l3.3 3.3l-3.3 3.3l-3.3 -3.3zM1142.6 696.7l3.3 3.3l-3.3 3.3l-3.3 -3.3zM1144.0 672.7l3.3 3.3l-3.3 3.3l-3.3 -3.3zM1153.0 671.7l3.3 3.3l-3.3 3.3l-3.3 -3.3zM1161.0 669.7l3.3 3.3l-3.3 3.3l-3.3 -3.3zM1165.6 668.7l3.3 3.3l-3.3 3.3l-3.3 -3.3zM1169.2 671.1l3.3 3.3l-3.3 3.3l-3.3 -3.3zM1175.0 679.7l3.3 3.3l-3.3 3.3l-3.3 -3.3zM1140.1 651.6l3.3 3.3l-3.3 3.3l-3.3 -3.3zM1141.9 681.8l3.3 3.3l-3.3 3.3l-3.3 -3.3zM1142.8 687.0l3.3 3.3l-3.3 3.3l-3.3 -3.3zM1148.1 670.8l3.3 3.3l-3.3 3.3l-3.3 -3.3zM1157.3 670.7l3.3 3.3l-3.3 3.3l-3.3 -3.3zM1163.6 668.9l3.3 3.3l-3.3 3.3l-3.3 -3.3zM1167.3 669.3l3.3 3.3l-3.3 3.3l-3.3 -3.3zM1172.3 675.5l3.3 3.3l-3.3 3.3l-3.3 -3.3z" fill="#0A0AF0"/><path d="M471.9 636.7l3.3 3.3l-3.3 3.3l-3.3 -3.3zM489.8 631.5l3.3 3.3l-3.3 3.3l-3.3 -3.3zM507.0 625.5l3.3 3.3l-3.3 3.3l-3.3 -3.3zM524.8 619.6l3.3 3.3l-3.3 3.3l-3.3 -3.3zM542.8 612.6l3.3 3.3l-3.3 3.3l-3.3 -3.3zM562.0 604.7l3.3 3.3l-3.3 3.3l-3.3 -3.3zM580.5 594.7l3.3 3.3l-3.3 3.3l-3.3 -3.3zM600.5 583.1l3.3 3.3l-3.3 3.3l-3.3 -3.3zM622.0 572.6l3.3 3.3l-3.3 3.3l-3.3 -3.3zM643.0 562.6l3.3 3.3l-3.3 3.3l-3.3 -3.3zM666.0 552.7l3.3 3.3l-3.3 3.3l-3.3 -3.3zM688.7 543.8l3.3 3.3l-3.3 3.3l-3.3 -3.3zM712.0 537.7l3.3 3.3l-3.3 3.3l-3.3 -3.3zM735.8 532.4l3.3 3.3l-3.3 3.3l-3.3 -3.3zM759.1 528.3l3.3 3.3l-3.3 3.3l-3.3 -3.3zM781.9 526.4l3.3 3.3l-3.3 3.3l-3.3 -3.3zM805.2 525.2l3.3 3.3l-3.3 3.3l-3.3 -3.3zM828.0 525.5l3.3 3.3l-3.3 3.3l-3.3 -3.3zM849.4 525.5l3.3 3.3l-3.3 3.3l-3.3 -3.3zM881.2 526.4l3.3 3.3l-3.3 3.3l-3.3 -3.3zM913.3 527.2l3.3 3.3l-3.3 3.3l-3.3 -3.3zM942.9 528.0l3.3 3.3l-3.3 3.3l-3.3 -3.3zM974.0 530.2l3.3 3.3l-3.3 3.3l-3.3 -3.3zM1000.0 537.1l3.3 3.3l-3.3 3.3l-3.3 -3.3zM1026.8 547.5l3.3 3.3l-3.3 3.3l-3.3 -3.3zM1041.2 555.9l3.3 3.3l-3.3 3.3l-3.3 -3.3zM1056.8 567.9l3.3 3.3l-3.3 3.3l-3.3 -3.3zM1069.5 579.9l3.3 3.3l-3.3 3.3l-3.3 -3.3zM1080.8 591.5l3.3 3.3l-3.3 3.3l-3.3 -3.3zM1091.2 603.5l3.3 3.3l-3.3 3.3l-3.3 -3.3zM1100.0 613.6l3.3 3.3l-3.3 3.3l-3.3 -3.3zM1107.2 623.2l3.3 3.3l-3.3 3.3l-3.3 -3.3zM1113.7 630.4l3.3 3.3l-3.3 3.3l-3.3 -3.3zM1120.4 636.4l3.3 3.3l-3.3 3.3l-3.3 -3.3zM1126.0 641.0l3.3 3.3l-3.3 3.3l-3.3 -3.3zM1134.0 644.7l3.3 3.3l-3.3 3.3l-3.3 -3.3zM1140.4 646.1l3.3 3.3l-3.3 3.3l-3.3 -3.3zM1137.7 645.6l3.3 3.3l-3.3 3.3l-3.3 -3.3z" fill="#0A0AF0"/><path d="M662.7 506.4l3.3 3.3l-3.3 3.3l-3.3 -3.3zM703.7 505.5l3.3 3.3l-3.3 3.3l-3.3 -3.3zM742.7 508.7l3.3 3.3l-3.3 3.3l-3.3 -3.3zM781.2 513.4l3.3 3.3l-3.3 3.3l-3.3 -3.3zM816.0 519.7l3.3 3.3l-3.3 3.3l-3.3 -3.3zM849.2 524.3l3.3 3.3l-3.3 3.3l-3.3 -3.3zM870.8 524.3l3.3 3.3l-3.3 3.3l-3.3 -3.3zM893.2 523.6l3.3 3.3l-3.3 3.3l-3.3 -3.3zM914.0 522.7l3.3 3.3l-3.3 3.3l-3.3 -3.3zM934.0 524.3l3.3 3.3l-3.3 3.3l-3.3 -3.3zM954.1 525.7l3.3 3.3l-3.3 3.3l-3.3 -3.3zM973.3 529.0l3.3 3.3l-3.3 3.3l-3.3 -3.3zM999.7 532.9l3.3 3.3l-3.3 3.3l-3.3 -3.3zM1026.8 541.2l3.3 3.3l-3.3 3.3l-3.3 -3.3zM1049.6 551.6l3.3 3.3l-3.3 3.3l-3.3 -3.3zM1072.0 565.6l3.3 3.3l-3.3 3.3l-3.3 -3.3zM1100.0 589.5l3.3 3.3l-3.3 3.3l-3.3 -3.3zM1115.6 611.2l3.3 3.3l-3.3 3.3l-3.3 -3.3zM1126.4 627.8l3.3 3.3l-3.3 3.3l-3.3 -3.3zM1138.0 643.8l3.3 3.3l-3.3 3.3l-3.3 -3.3zM1141.0 658.7l3.3 3.3l-3.3 3.3l-3.3 -3.3zM1143.0 686.7l3.3 3.3l-3.3 3.3l-3.3 -3.3zM1144.5 694.7l3.3 3.3l-3.3 3.3l-3.3 -3.3zM1146.0 681.7l3.3 3.3l-3.3 3.3l-3.3 -3.3zM1148.0 672.7l3.3 3.3l-3.3 3.3l-3.3 -3.3zM1140.1 650.5l3.3 3.3l-3.3 3.3l-3.3 -3.3zM1142.1 673.1l3.3 3.3l-3.3 3.3l-3.3 -3.3zM1143.8 693.3l3.3 3.3l-3.3 3.3l-3.3 -3.3zM1145.2 689.3l3.3 3.3l-3.3 3.3l-3.3 -3.3zM1147.1 676.4l3.3 3.3l-3.3 3.3l-3.3 -3.3z" fill="#0A0AF0"/><path d="M663.3 546.8l3.3 3.3l-3.3 3.3l-3.3 -3.3zM678.4 542.7l3.3 3.3l-3.3 3.3l-3.3 -3.3zM695.5 538.4l3.3 3.3l-3.3 3.3l-3.3 -3.3zM711.5 536.0l3.3 3.3l-3.3 3.3l-3.3 -3.3zM727.6 533.4l3.3 3.3l-3.3 3.3l-3.3 -3.3zM744.0 532.4l3.3 3.3l-3.3 3.3l-3.3 -3.3zM759.8 531.9l3.3 3.3l-3.3 3.3l-3.3 -3.3zM775.6 530.8l3.3 3.3l-3.3 3.3l-3.3 -3.3zM792.0 530.6l3.3 3.3l-3.3 3.3l-3.3 -3.3zM809.0 531.9l3.3 3.3l-3.3 3.3l-3.3 -3.3zM824.8 531.5l3.3 3.3l-3.3 3.3l-3.3 -3.3zM841.0 531.9l3.3 3.3l-3.3 3.3l-3.3 -3.3zM857.0 532.4l3.3 3.3l-3.3 3.3l-3.3 -3.3zM872.8 532.4l3.3 3.3l-3.3 3.3l-3.3 -3.3zM888.9 532.4l3.3 3.3l-3.3 3.3l-3.3 -3.3zM906.0 532.8l3.3 3.3l-3.3 3.3l-3.3 -3.3zM922.0 532.8l3.3 3.3l-3.3 3.3l-3.3 -3.3zM938.1 532.9l3.3 3.3l-3.3 3.3l-3.3 -3.3zM954.1 532.9l3.3 3.3l-3.3 3.3l-3.3 -3.3zM970.1 533.9l3.3 3.3l-3.3 3.3l-3.3 -3.3zM986.1 536.0l3.3 3.3l-3.3 3.3l-3.3 -3.3zM1002.1 539.0l3.3 3.3l-3.3 3.3l-3.3 -3.3zM1019.1 542.7l3.3 3.3l-3.3 3.3l-3.3 -3.3zM1035.2 548.8l3.3 3.3l-3.3 3.3l-3.3 -3.3zM1050.8 556.4l3.3 3.3l-3.3 3.3l-3.3 -3.3zM1066.4 567.8l3.3 3.3l-3.3 3.3l-3.3 -3.3zM1083.2 580.8l3.3 3.3l-3.3 3.3l-3.3 -3.3zM1099.3 597.1l3.3 3.3l-3.3 3.3l-3.3 -3.3zM1114.5 615.5l3.3 3.3l-3.3 3.3l-3.3 -3.3zM1132.2 641.6l3.3 3.3l-3.3 3.3l-3.3 -3.3zM1140.0 654.7l3.3 3.3l-3.3 3.3l-3.3 -3.3zM1145.0 660.7l3.3 3.3l-3.3 3.3l-3.3 -3.3zM1136.9 649.4l3.3 3.3l-3.3 3.3l-3.3 -3.3zM1143.0 658.5l3.3 3.3l-3.3 3.3l-3.3 -3.3z" fill="#000000"/><path d="M531.0 606.4l3.3 3.3l-3.3 3.3l-3.3 -3.3zM552.9 597.5l3.3 3.3l-3.3 3.3l-3.3 -3.3zM575.3 586.9l3.3 3.3l-3.3 3.3l-3.3 -3.3zM595.8 575.8l3.3 3.3l-3.3 3.3l-3.3 -3.3zM617.9 564.5l3.3 3.3l-3.3 3.3l-3.3 -3.3zM640.0 554.4l3.3 3.3l-3.3 3.3l-3.3 -3.3zM660.8 545.5l3.3 3.3l-3.3 3.3l-3.3 -3.3zM682.9 537.6l3.3 3.3l-3.3 3.3l-3.3 -3.3zM705.0 531.2l3.3 3.3l-3.3 3.3l-3.3 -3.3zM725.7 526.4l3.3 3.3l-3.3 3.3l-3.3 -3.3zM747.8 522.3l3.3 3.3l-3.3 3.3l-3.3 -3.3zM769.9 519.5l3.3 3.3l-3.3 3.3l-3.3 -3.3zM791.3 517.6l3.3 3.3l-3.3 3.3l-3.3 -3.3zM812.8 515.1l3.3 3.3l-3.3 3.3l-3.3 -3.3zM834.9 514.4l3.3 3.3l-3.3 3.3l-3.3 -3.3zM855.7 513.4l3.3 3.3l-3.3 3.3l-3.3 -3.3zM877.7 512.4l3.3 3.3l-3.3 3.3l-3.3 -3.3zM900.0 512.4l3.3 3.3l-3.3 3.3l-3.3 -3.3zM921.0 512.4l3.3 3.3l-3.3 3.3l-3.3 -3.3zM942.9 513.2l3.3 3.3l-3.3 3.3l-3.3 -3.3zM964.8 516.7l3.3 3.3l-3.3 3.3l-3.3 -3.3zM986.1 520.7l3.3 3.3l-3.3 3.3l-3.3 -3.3zM1007.7 526.7l3.3 3.3l-3.3 3.3l-3.3 -3.3zM1030.4 535.5l3.3 3.3l-3.3 3.3l-3.3 -3.3zM1050.8 546.3l3.3 3.3l-3.3 3.3l-3.3 -3.3zM1072.9 560.3l3.3 3.3l-3.3 3.3l-3.3 -3.3zM1094.5 579.2l3.3 3.3l-3.3 3.3l-3.3 -3.3zM1115.6 605.3l3.3 3.3l-3.3 3.3l-3.3 -3.3zM1127.6 628.0l3.3 3.3l-3.3 3.3l-3.3 -3.3zM1137.8 647.4l3.3 3.3l-3.3 3.3l-3.3 -3.3zM1146.0 659.7l3.3 3.3l-3.3 3.3l-3.3 -3.3zM1142.5 654.8l3.3 3.3l-3.3 3.3l-3.3 -3.3z" fill="#EE1010"/></svg>
</body></html>
